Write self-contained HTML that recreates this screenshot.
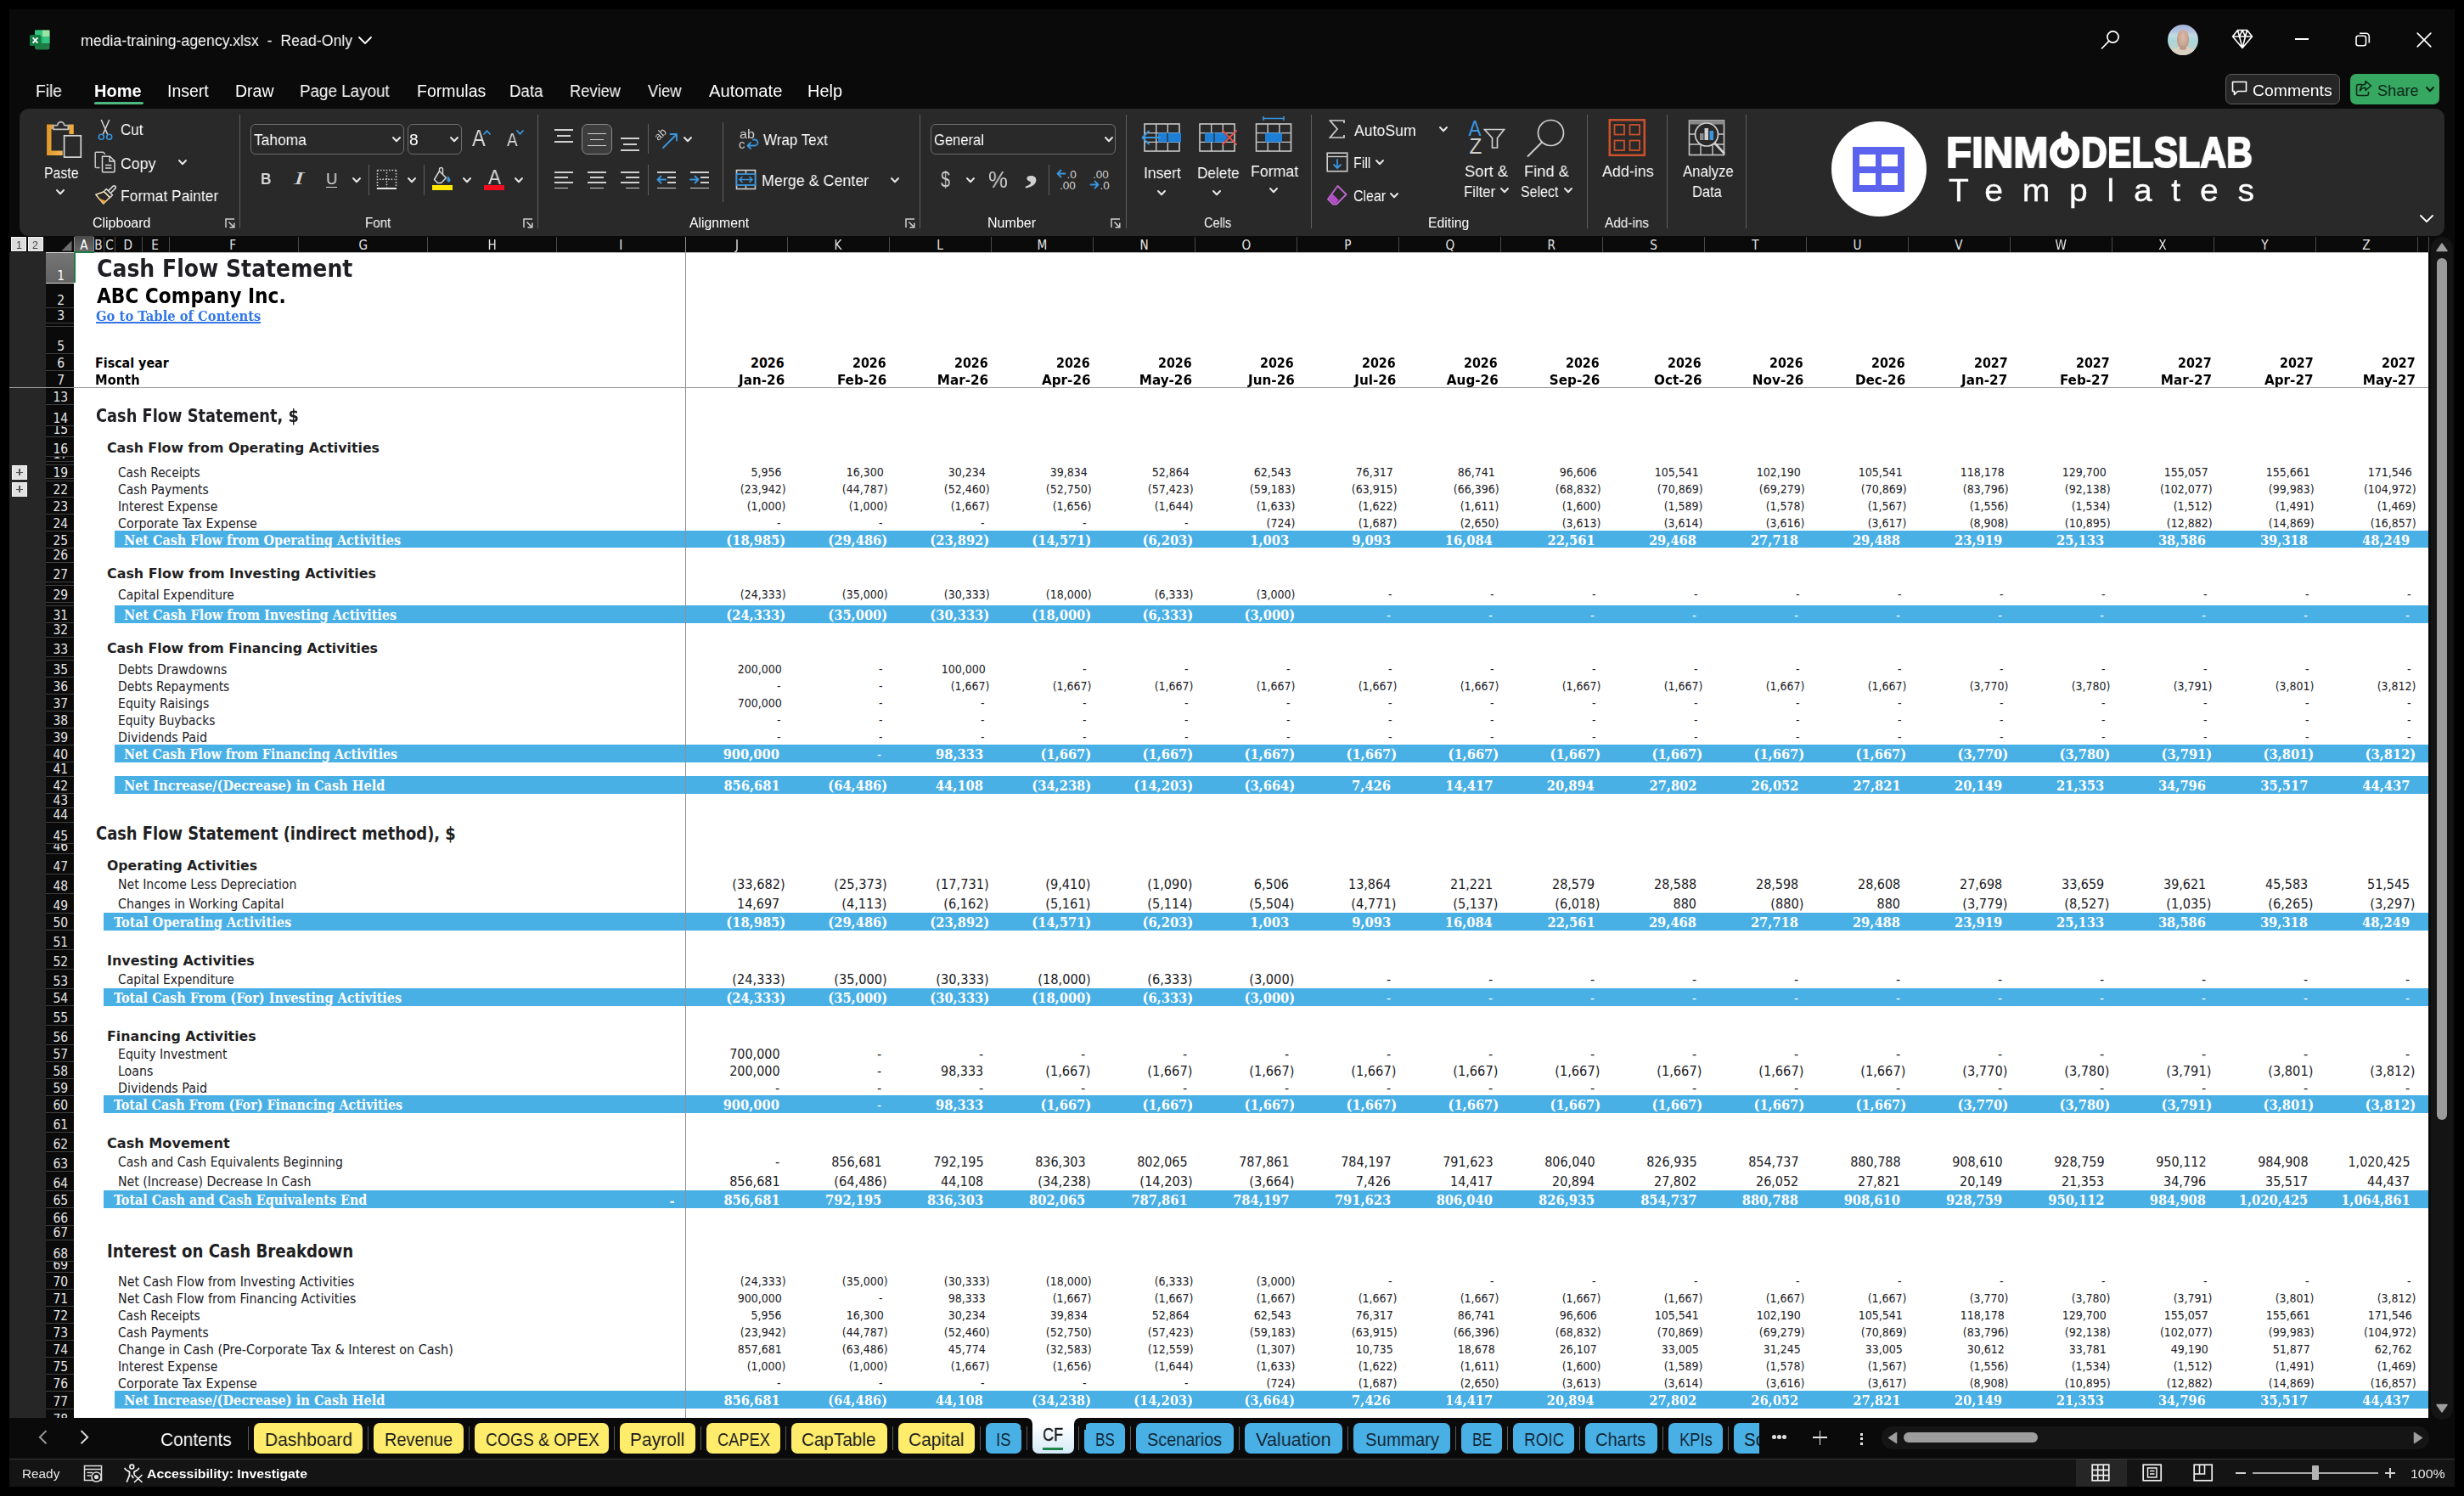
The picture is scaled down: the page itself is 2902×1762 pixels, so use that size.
<!DOCTYPE html>
<html lang="en"><head><meta charset="utf-8"><title>media-training-agency.xlsx - Excel</title>
<style>
html,body{margin:0;padding:0;background:#000}
body{width:2902px;height:1762px;position:relative;overflow:hidden;font-family:"Liberation Sans",sans-serif}
div,svg,.t{position:absolute}
svg{overflow:visible}
.t{white-space:pre}
.rh{left:54px;width:33px;box-sizing:border-box;overflow:hidden}
.rn{position:absolute;left:1.6px;right:0;bottom:-2px;text-align:center;font:16.3px/20px 'DejaVu Sans Condensed','Liberation Sans',sans-serif;transform:scaleX(.95)}
</style></head>
<body>
<div id="window" style="left:11px;top:11px;width:2880px;height:1740px;background:#0a0a0a"></div>
<svg style="left:35px;top:35px" width="24" height="24" viewBox="0 0 24 24"><rect x="6" y="0.5" width="17.5" height="23" rx="2.5" fill="#1f7a43"/>
<rect x="6" y="0.5" width="9" height="8" fill="#33c481"/><rect x="15" y="0.5" width="8.5" height="8" fill="#9be3a4"/>
<rect x="6" y="8.5" width="9" height="7.5" fill="#21a366"/><rect x="15" y="8.5" width="8.5" height="7.5" fill="#33c481"/>
<rect x="0" y="6" width="13" height="13" rx="1.5" fill="#107c41"/>
<path d="M3.6 9.3L9.4 15.7M9.4 9.3L3.6 15.7" stroke="#fff" stroke-width="1.9"/></svg>
<span class="t" style="top:48px;font:400 19.2px/0 'Liberation Sans','DejaVu Sans',sans-serif;color:#ffffff;left:94.92px;transform:scaleX(0.9249);transform-origin:0 0;will-change:transform;">media-training-agency.xlsx  -  Read-Only</span>
<svg style="left:421.00px;top:42.00px" width="18" height="11" viewBox="-2 -2 18 11"><path d="M0 0L7.0 7L14 0" fill="none" stroke="#fff" stroke-width="1.8" stroke-linecap="round" stroke-linejoin="round"/></svg>
<svg style="left:2474px;top:35px" width="24" height="24" viewBox="0 0 24 24"><circle cx="14.5" cy="8.5" r="6.6" fill="none" stroke="#fff" stroke-width="1.7"/><path d="M9.8 13.4L1.5 22" stroke="#fff" stroke-width="1.7" stroke-linecap="round"/></svg>
<div style="left:2552.5px;top:28.7px;width:36.6px;height:36.6px;border-radius:50%;overflow:hidden;background:linear-gradient(#a3b1d8 0%,#b4c3e0 22%,#c3dde2 34%,#a9d6d8 52%,#b5d4d2 70%,#cfcabb 100%)"><div style="left:11px;top:6.5px;width:14.6px;height:22px;border-radius:50% 50% 46% 46%;background:radial-gradient(ellipse at 50% 38%,#dcbba8 0%,#c9a591 55%,#a98672 100%)"></div><div style="left:4.5px;top:26.5px;width:28px;height:14px;border-radius:50% 50% 0 0;background:#d9d2c4"></div><div style="left:14.5px;top:25.5px;width:7.5px;height:5px;border-radius:0 0 50% 50%;background:#c09a86"></div></div>
<svg style="left:2628px;top:34px" width="26" height="24" viewBox="0 0 26 24"><path d="M7.5 1.5H18.5L24.5 9L13 22.5L1.5 9Z M1.5 9H24.5 M7.5 1.5L9.5 9L13 22.5L16.5 9L18.5 1.5 M9.5 9L13 1.5L16.5 9" fill="none" stroke="#fff" stroke-width="1.6" stroke-linejoin="round"/></svg>
<div style="left:2703px;top:45.2px;width:16px;height:1.7px;background:#fff;"></div>
<svg style="left:2774px;top:38px" width="18" height="18" viewBox="0 0 18 18"><rect x="1" y="4.3" width="11.5" height="11.5" rx="2.5" fill="none" stroke="#fff" stroke-width="1.6"/><path d="M5 1.2H12.5A3.8 3.8 0 0 1 16.3 5V12.5" fill="none" stroke="#fff" stroke-width="1.6"/></svg>
<svg style="left:2846px;top:38px" width="18" height="18" viewBox="0 0 18 18"><path d="M1.2 1.2L16.8 16.8M16.8 1.2L1.2 16.8" stroke="#fff" stroke-width="1.7" stroke-linecap="round"/></svg>
<span class="t" style="top:107px;font:400 19.5px/0 'Liberation Sans','DejaVu Sans',sans-serif;color:#ffffff;left:41.53px;transform:scaleX(0.9843);transform-origin:0 0;will-change:transform;">File</span>
<span class="t" style="top:107px;font:700 19.5px/0 'Liberation Sans','DejaVu Sans',sans-serif;color:#ffffff;left:111.26px;transform:scaleX(1.0248);transform-origin:0 0;will-change:transform;">Home</span>
<span class="t" style="top:107px;font:400 19.5px/0 'Liberation Sans','DejaVu Sans',sans-serif;color:#ffffff;left:197.31px;transform:scaleX(0.9930);transform-origin:0 0;will-change:transform;">Insert</span>
<span class="t" style="top:107px;font:400 19.5px/0 'Liberation Sans','DejaVu Sans',sans-serif;color:#ffffff;left:277.02px;transform:scaleX(0.9897);transform-origin:0 0;will-change:transform;">Draw</span>
<span class="t" style="top:107px;font:400 19.5px/0 'Liberation Sans','DejaVu Sans',sans-serif;color:#ffffff;left:353.06px;transform:scaleX(0.9651);transform-origin:0 0;will-change:transform;">Page Layout</span>
<span class="t" style="top:107px;font:400 19.5px/0 'Liberation Sans','DejaVu Sans',sans-serif;color:#ffffff;left:491.01px;transform:scaleX(0.9942);transform-origin:0 0;will-change:transform;">Formulas</span>
<span class="t" style="top:107px;font:400 19.5px/0 'Liberation Sans','DejaVu Sans',sans-serif;color:#ffffff;left:600.06px;transform:scaleX(0.9598);transform-origin:0 0;will-change:transform;">Data</span>
<span class="t" style="top:107px;font:400 19.5px/0 'Liberation Sans','DejaVu Sans',sans-serif;color:#ffffff;left:670.60px;transform:scaleX(0.9377);transform-origin:0 0;will-change:transform;">Review</span>
<span class="t" style="top:107px;font:400 19.5px/0 'Liberation Sans','DejaVu Sans',sans-serif;color:#ffffff;left:763.02px;transform:scaleX(0.9433);transform-origin:0 0;will-change:transform;">View</span>
<span class="t" style="top:107px;font:400 19.5px/0 'Liberation Sans','DejaVu Sans',sans-serif;color:#ffffff;left:835.06px;transform:scaleX(1.0356);transform-origin:0 0;will-change:transform;">Automate</span>
<span class="t" style="top:107px;font:400 19.5px/0 'Liberation Sans','DejaVu Sans',sans-serif;color:#ffffff;left:950.97px;transform:scaleX(1.0216);transform-origin:0 0;will-change:transform;">Help</span>
<div style="left:111px;top:120px;width:58px;height:3px;background:#4fb780;border-radius:1.5px"></div>
<div style="left:2621px;top:87px;width:135px;height:36px;background:#262626;border:1.5px solid #5c5c5c;border-radius:7px;box-sizing:border-box"></div>
<svg style="left:2628px;top:95px" width="19" height="19" viewBox="0 0 19 19"><path d="M1.5 1.5H17.5V12.5H7.5L3.5 16.5V12.5H1.5Z" fill="none" stroke="#fff" stroke-width="1.6" stroke-linejoin="round"/></svg>
<span class="t" style="top:107px;font:400 19.2px/0 'Liberation Sans','DejaVu Sans',sans-serif;color:#ffffff;left:2652.62px;transform:scaleX(1.0100);transform-origin:0 0;will-change:transform;">Comments</span>
<div style="left:2768px;top:87px;width:105px;height:36px;background:#36a862;border-radius:7px"></div>
<svg style="left:2774px;top:94px" width="20" height="20" viewBox="0 0 20 20"><path d="M8 5.5H3.5A2 2 0 0 0 1.5 7.5V16.5A2 2 0 0 0 3.5 18.5H13.5A2 2 0 0 0 15.5 16.5V14" fill="none" stroke="#0d2a17" stroke-width="1.6"/><path d="M12 1.5L18.5 7L12 12.5V9.2C9 9.2 7 10.3 5.5 13C5.8 8.5 8 5.4 12 5V1.5Z" fill="none" stroke="#0d2a17" stroke-width="1.6" stroke-linejoin="round"/></svg>
<span class="t" style="top:107px;font:400 19.2px/0 'Liberation Sans','DejaVu Sans',sans-serif;color:#0b1f12;left:2799.77px;transform:scaleX(0.9500);transform-origin:0 0;will-change:transform;">Share</span>
<svg style="left:2856.00px;top:101.35px" width="12.0" height="8.3" viewBox="-2 -2 12.0 8.3"><path d="M0 0L4.0 4.3L8.0 0" fill="none" stroke="#0b1f12" stroke-width="2.0" stroke-linecap="round" stroke-linejoin="round"/></svg>
<div id="ribbon" style="left:23px;top:128px;width:2856px;height:149.5px;background:#292929;border-radius:11px"></div>
<div style="left:282px;top:135px;width:1px;height:134px;background:#5e5e5e;"></div>
<div style="left:633px;top:135px;width:1px;height:134px;background:#5e5e5e;"></div>
<div style="left:1083px;top:135px;width:1px;height:134px;background:#5e5e5e;"></div>
<div style="left:1326px;top:135px;width:1px;height:134px;background:#5e5e5e;"></div>
<div style="left:1544px;top:135px;width:1px;height:134px;background:#5e5e5e;"></div>
<div style="left:1869px;top:135px;width:1px;height:134px;background:#5e5e5e;"></div>
<div style="left:1963px;top:135px;width:1px;height:134px;background:#5e5e5e;"></div>
<div style="left:2056px;top:135px;width:1px;height:134px;background:#5e5e5e;"></div>
<div style="left:434px;top:194px;width:1px;height:36px;background:#5e5e5e;"></div>
<div style="left:499px;top:194px;width:1px;height:36px;background:#5e5e5e;"></div>
<div style="left:763px;top:146px;width:1px;height:35px;background:#5e5e5e;"></div>
<div style="left:763px;top:194px;width:1px;height:36px;background:#5e5e5e;"></div>
<div style="left:851px;top:144px;width:1px;height:94px;background:#5e5e5e;"></div>
<div style="left:1235px;top:194px;width:1px;height:36px;background:#5e5e5e;"></div>
<span class="t" style="top:263px;font:400 15.6px/0 'Liberation Sans','DejaVu Sans',sans-serif;color:#ffffff;left:109.29px;transform:scaleX(1.0239);transform-origin:0 0;will-change:transform;">Clipboard</span>
<span class="t" style="top:263px;font:400 15.6px/0 'Liberation Sans','DejaVu Sans',sans-serif;color:#ffffff;left:430.36px;transform:scaleX(0.9729);transform-origin:0 0;will-change:transform;">Font</span>
<span class="t" style="top:263px;font:400 15.6px/0 'Liberation Sans','DejaVu Sans',sans-serif;color:#ffffff;left:811.57px;transform:scaleX(1.0116);transform-origin:0 0;will-change:transform;">Alignment</span>
<span class="t" style="top:263px;font:400 15.6px/0 'Liberation Sans','DejaVu Sans',sans-serif;color:#ffffff;left:1163.28px;transform:scaleX(1.0293);transform-origin:0 0;will-change:transform;">Number</span>
<span class="t" style="top:263px;font:400 15.6px/0 'Liberation Sans','DejaVu Sans',sans-serif;color:#ffffff;left:1418.36px;transform:scaleX(0.9308);transform-origin:0 0;will-change:transform;">Cells</span>
<span class="t" style="top:263px;font:400 15.6px/0 'Liberation Sans','DejaVu Sans',sans-serif;color:#ffffff;left:1682.30px;transform:scaleX(1.0133);transform-origin:0 0;will-change:transform;">Editing</span>
<span class="t" style="top:263px;font:400 15.6px/0 'Liberation Sans','DejaVu Sans',sans-serif;color:#ffffff;left:1889.57px;transform:scaleX(0.9851);transform-origin:0 0;will-change:transform;">Add-ins</span>
<svg style="left:265px;top:257px" width="12" height="12" viewBox="0 0 12 12"><path d="M1 11V1H11" fill="none" stroke="#d0d0d0" stroke-width="1.5"/><path d="M4.5 4.5L10.5 10.5M10.8 5.5V10.8H5.5" fill="none" stroke="#d0d0d0" stroke-width="1.5"/></svg>
<svg style="left:616px;top:257px" width="12" height="12" viewBox="0 0 12 12"><path d="M1 11V1H11" fill="none" stroke="#d0d0d0" stroke-width="1.5"/><path d="M4.5 4.5L10.5 10.5M10.8 5.5V10.8H5.5" fill="none" stroke="#d0d0d0" stroke-width="1.5"/></svg>
<svg style="left:1066px;top:257px" width="12" height="12" viewBox="0 0 12 12"><path d="M1 11V1H11" fill="none" stroke="#d0d0d0" stroke-width="1.5"/><path d="M4.5 4.5L10.5 10.5M10.8 5.5V10.8H5.5" fill="none" stroke="#d0d0d0" stroke-width="1.5"/></svg>
<svg style="left:1308px;top:257px" width="12" height="12" viewBox="0 0 12 12"><path d="M1 11V1H11" fill="none" stroke="#d0d0d0" stroke-width="1.5"/><path d="M4.5 4.5L10.5 10.5M10.8 5.5V10.8H5.5" fill="none" stroke="#d0d0d0" stroke-width="1.5"/></svg>
<svg style="left:2848.50px;top:252.00px" width="18" height="11" viewBox="-2 -2 18 11"><path d="M0 0L7.0 7L14 0" fill="none" stroke="#fff" stroke-width="1.8" stroke-linecap="round" stroke-linejoin="round"/></svg>
<svg style="left:53px;top:139px" width="45" height="48" viewBox="0 0 45 48"><defs><linearGradient id="pg" x1="0" y1="0" x2="1" y2="0"><stop offset="0" stop-color="#e39a2c"/><stop offset="1" stop-color="#f3b95a"/></linearGradient></defs>
<path d="M9.300 10.200H4.800V41.300H20.700" fill="none" stroke="url(#pg)" stroke-width="5.4"/>
<path d="M27.800 10.200H31.100V19" fill="none" stroke="#eda93f" stroke-width="5.4"/>
<path d="M9.800 13.300V8.600H14.600A4.300 5.600 0 0 1 22.800 8.600H27.300V13.300Z" fill="#292929" stroke="#bdbdbd" stroke-width="1.700" stroke-linejoin="round"/>
<rect x="22.600" y="20.800" width="19.700" height="25.300" fill="#292929" stroke="#d4d4d4" stroke-width="1.700"/></svg>
<span class="t" style="top:204px;font:400 19.2px/0 'Liberation Sans','DejaVu Sans',sans-serif;color:#ffffff;left:51.80px;transform:scaleX(0.8255);transform-origin:0 0;will-change:transform;">Paste</span>
<svg style="left:65.30px;top:222.35px" width="12.0" height="8.3" viewBox="-2 -2 12.0 8.3"><path d="M0 0L4.0 4.3L8.0 0" fill="none" stroke="#e6e6e6" stroke-width="2.0" stroke-linecap="round" stroke-linejoin="round"/></svg>
<svg style="left:114px;top:140px" width="20" height="26" viewBox="0 0 20 26"><path d="M5.2 1L12.8 18.5M14.800 1L7.2 18.5" stroke="#d8d8d8" stroke-width="1.5" fill="none"/>
<circle cx="5.3" cy="21.3" r="3" fill="none" stroke="#3a96dd" stroke-width="1.6"/><circle cx="14.7" cy="21.3" r="3" fill="none" stroke="#3a96dd" stroke-width="1.6"/></svg>
<span class="t" style="top:153px;font:400 19.2px/0 'Liberation Sans','DejaVu Sans',sans-serif;color:#ffffff;left:142.24px;transform:scaleX(0.8872);transform-origin:0 0;will-change:transform;">Cut</span>
<svg style="left:111px;top:178px" width="26" height="26" viewBox="0 0 26 26"><path d="M6.5 19.5H2.2A1 1 0 0 1 1.2 18.5V2.2A1 1 0 0 1 2.2 1.2H10.5L13 3.700" fill="none" stroke="#c8c8c8" stroke-width="1.5"/>
<path d="M9.5 6.2H18.5L24 11.700V23.800A1 1 0 0 1 23 24.800H10.500A1 1 0 0 1 9.5 23.800Z" fill="none" stroke="#d8d8d8" stroke-width="1.5" stroke-linejoin="round"/>
<path d="M18 6.500V12H23.800" fill="none" stroke="#d8d8d8" stroke-width="1.4"/><path d="M13 16.500H20.500M13 20H20.500" stroke="#d8d8d8" stroke-width="1.4"/></svg>
<span class="t" style="top:193px;font:400 19.2px/0 'Liberation Sans','DejaVu Sans',sans-serif;color:#ffffff;left:142.20px;transform:scaleX(0.9251);transform-origin:0 0;will-change:transform;">Copy</span>
<svg style="left:209.30px;top:187.35px" width="12.0" height="8.3" viewBox="-2 -2 12.0 8.3"><path d="M0 0L4.0 4.3L8.0 0" fill="none" stroke="#e6e6e6" stroke-width="2.0" stroke-linecap="round" stroke-linejoin="round"/></svg>
<svg style="left:111px;top:217px" width="27" height="25" viewBox="0 0 27 25"><path d="M16.800 7.600L22 2.400A1.900 1.900 0 0 1 24.700 5.100L19.500 10.300" fill="none" stroke="#d8d8d8" stroke-width="1.600"/>
<path d="M14.300 5.600L21.500 12.800L18.600 15.700L11.400 8.500Z" fill="#292929" stroke="#d8d8d8" stroke-width="1.500" stroke-linejoin="round"/>
<path d="M11.600 8.700L18.400 15.500L10.800 23L1.800 12.200Z" fill="none" stroke="#f3ddb0" stroke-width="1.500" stroke-linejoin="round"/>
<path d="M5.400 16.500L14 19.800L10.800 23Z" fill="#eaa63c"/></svg>
<span class="t" style="top:231px;font:400 19.2px/0 'Liberation Sans','DejaVu Sans',sans-serif;color:#ffffff;left:142.17px;transform:scaleX(0.9080);transform-origin:0 0;will-change:transform;">Format Painter</span>
<div style="left:295px;top:146px;width:180.5px;height:36px;border:1.3px solid #6e6e6e;border-radius:6px;box-sizing:border-box"></div>
<span class="t" style="top:165px;font:400 19.2px/0 'Liberation Sans','DejaVu Sans',sans-serif;color:#ffffff;left:299.21px;transform:scaleX(0.9067);transform-origin:0 0;will-change:transform;">Tahoma</span>
<svg style="left:461.00px;top:160.35px" width="12.0" height="8.3" viewBox="-2 -2 12.0 8.3"><path d="M0 0L4.0 4.3L8.0 0" fill="none" stroke="#e6e6e6" stroke-width="2.0" stroke-linecap="round" stroke-linejoin="round"/></svg>
<div style="left:479.5px;top:146px;width:64.5px;height:36px;border:1.3px solid #6e6e6e;border-radius:6px;box-sizing:border-box"></div>
<span class="t" style="top:165px;font:400 19.2px/0 'Liberation Sans','DejaVu Sans',sans-serif;color:#ffffff;left:481.67px;will-change:transform;">8</span>
<svg style="left:529.00px;top:160.35px" width="12.0" height="8.3" viewBox="-2 -2 12.0 8.3"><path d="M0 0L4.0 4.3L8.0 0" fill="none" stroke="#e6e6e6" stroke-width="2.0" stroke-linecap="round" stroke-linejoin="round"/></svg>
<span class="t" style="top:163px;font:400 27px/0 'Liberation Sans','DejaVu Sans',sans-serif;color:#d8d8d8;left:555.55px;transform:scaleX(0.8658);transform-origin:0 0;will-change:transform;">A</span>
<svg style="left:568.7px;top:152.6px" width="9" height="6" viewBox="0 0 9 6"><path d="M1 5L4.500 1.2L8 5" fill="none" stroke="#3a96dd" stroke-width="1.7" stroke-linecap="round" stroke-linejoin="round"/></svg>
<span class="t" style="top:165px;font:400 22px/0 'Liberation Sans','DejaVu Sans',sans-serif;color:#d8d8d8;left:596.56px;transform:scaleX(0.8569);transform-origin:0 0;will-change:transform;">A</span>
<svg style="left:607.9px;top:153px" width="9" height="6" viewBox="0 0 9 6"><path d="M1 1L4.500 4.800L8 1" fill="none" stroke="#3a96dd" stroke-width="1.7" stroke-linecap="round" stroke-linejoin="round"/></svg>
<span class="t" style="top:211px;font:700 19.2px/0 'Liberation Sans','DejaVu Sans',sans-serif;color:#d8d8d8;left:307.45px;transform:scaleX(0.8974);transform-origin:0 0;will-change:transform;">B</span>
<span class="t" style="top:210px;font:italic 400 20.6px/0 'Liberation Serif','DejaVu Serif',serif;color:#d8d8d8;left:346.19px;transform:scaleX(1.7627);transform-origin:0 0;">I</span>
<span class="t" style="top:211px;font:400 19.2px/0 'Liberation Sans','DejaVu Sans',sans-serif;color:#d8d8d8;left:383.67px;transform:scaleX(0.9638);transform-origin:0 0;will-change:transform;">U</span>
<div style="left:383.5px;top:219.5px;width:13px;height:1.6px;background:#d8d8d8;"></div>
<svg style="left:413.50px;top:208.35px" width="12.0" height="8.3" viewBox="-2 -2 12.0 8.3"><path d="M0 0L4.0 4.3L8.0 0" fill="none" stroke="#e6e6e6" stroke-width="2.0" stroke-linecap="round" stroke-linejoin="round"/></svg>
<svg style="left:443px;top:199px" width="25" height="25" viewBox="0 0 25 25"><path d="M1.500 1.500H23.500M1.500 1.500V23.500M23.500 1.500V21.500" stroke="#d0d0d0" stroke-width="1.500" stroke-dasharray="1.6 1.800" fill="none"/>
<path d="M12.500 4V21.500M4 12.300H21.500" stroke="#d0d0d0" stroke-width="1.400" stroke-dasharray="1.6 1.800" fill="none"/><path d="M1 23H24" stroke="#e8e8e8" stroke-width="2"/></svg>
<svg style="left:478.50px;top:208.35px" width="12.0" height="8.3" viewBox="-2 -2 12.0 8.3"><path d="M0 0L4.0 4.3L8.0 0" fill="none" stroke="#e6e6e6" stroke-width="2.0" stroke-linecap="round" stroke-linejoin="round"/></svg>
<svg style="left:508px;top:198px" width="26" height="21" viewBox="0 0 26 21"><path d="M9.5 3.500L17.500 11.500L11.500 17.500H7.500L3.5 13.500Z" fill="none" stroke="#d8d8d8" stroke-width="1.500" stroke-linejoin="round"/><path d="M9.5 3.500V1.500A2 2 0 0 1 13.500 1.500V7.500" fill="none" stroke="#d8d8d8" stroke-width="1.4"/>
<path d="M19.500 9C21.500 11.500 22.500 13 22.500 14.500A2 2 0 0 1 18.500 14.500C18.500 13 18.800 11.500 19.500 9Z" fill="#3a96dd"/></svg>
<div style="left:509px;top:218px;width:24px;height:6px;background:#ffe600;"></div>
<svg style="left:543.50px;top:208.35px" width="12.0" height="8.3" viewBox="-2 -2 12.0 8.3"><path d="M0 0L4.0 4.3L8.0 0" fill="none" stroke="#e6e6e6" stroke-width="2.0" stroke-linecap="round" stroke-linejoin="round"/></svg>
<span class="t" style="top:209px;font:400 23.5px/0 'Liberation Sans','DejaVu Sans',sans-serif;color:#d8d8d8;left:574.76px;transform:scaleX(0.9626);transform-origin:0 0;will-change:transform;">A</span>
<div style="left:570px;top:218px;width:24px;height:6px;background:#f00e1e;"></div>
<svg style="left:604.50px;top:208.35px" width="12.0" height="8.3" viewBox="-2 -2 12.0 8.3"><path d="M0 0L4.0 4.3L8.0 0" fill="none" stroke="#e6e6e6" stroke-width="2.0" stroke-linecap="round" stroke-linejoin="round"/></svg>
<div style="left:653.0px;top:152px;width:22px;height:1.6px;background:#d0d0d0;"></div>
<div style="left:656.0px;top:159px;width:16px;height:1.6px;background:#d0d0d0;"></div>
<div style="left:653.0px;top:166px;width:22px;height:1.6px;background:#d0d0d0;"></div>
<div style="left:685px;top:146px;width:36px;height:36px;background:#3d3d3d;border:1.3px solid #8a8a8a;border-radius:7px;box-sizing:border-box"></div>
<div style="left:692.0px;top:156.5px;width:22px;height:1.6px;background:#d0d0d0;"></div>
<div style="left:695.0px;top:163.5px;width:16px;height:1.6px;background:#d0d0d0;"></div>
<div style="left:692.0px;top:170.5px;width:22px;height:1.6px;background:#d0d0d0;"></div>
<div style="left:731.0px;top:162px;width:22px;height:1.6px;background:#d0d0d0;"></div>
<div style="left:734.0px;top:169px;width:16px;height:1.6px;background:#d0d0d0;"></div>
<div style="left:731.0px;top:176px;width:22px;height:1.6px;background:#d0d0d0;"></div>
<svg style="left:771px;top:150px" width="28" height="26" viewBox="0 0 28 26"><text x="1" y="12" font-family="Liberation Sans,sans-serif" font-size="13" fill="#d0d0d0" transform="rotate(-42 8 10)">ab</text>
<path d="M10 24L25.500 8.500M18.500 8H26V15.500" fill="none" stroke="#3a96dd" stroke-width="1.8" stroke-linecap="round" stroke-linejoin="round"/></svg>
<svg style="left:804.30px;top:160.35px" width="12.0" height="8.3" viewBox="-2 -2 12.0 8.3"><path d="M0 0L4.0 4.3L8.0 0" fill="none" stroke="#e6e6e6" stroke-width="2.0" stroke-linecap="round" stroke-linejoin="round"/></svg>
<div style="left:653px;top:202.0px;width:22px;height:1.6px;background:#d0d0d0;"></div>
<div style="left:653px;top:208.2px;width:16px;height:1.6px;background:#d0d0d0;"></div>
<div style="left:653px;top:214.4px;width:22px;height:1.6px;background:#d0d0d0;"></div>
<div style="left:653px;top:220.6px;width:16px;height:1.6px;background:#d0d0d0;"></div>
<div style="left:692.0px;top:202.0px;width:22px;height:1.6px;background:#d0d0d0;"></div>
<div style="left:695.0px;top:208.2px;width:16px;height:1.6px;background:#d0d0d0;"></div>
<div style="left:692.0px;top:214.4px;width:22px;height:1.6px;background:#d0d0d0;"></div>
<div style="left:695.0px;top:220.6px;width:16px;height:1.6px;background:#d0d0d0;"></div>
<div style="left:731px;top:202.0px;width:22px;height:1.6px;background:#d0d0d0;"></div>
<div style="left:737px;top:208.2px;width:16px;height:1.6px;background:#d0d0d0;"></div>
<div style="left:731px;top:214.4px;width:22px;height:1.6px;background:#d0d0d0;"></div>
<div style="left:737px;top:220.6px;width:16px;height:1.6px;background:#d0d0d0;"></div>
<div style="left:774px;top:202px;width:22px;height:1.6px;background:#d0d0d0;"></div>
<div style="left:774px;top:220.6px;width:22px;height:1.6px;background:#d0d0d0;"></div>
<div style="left:786px;top:208.2px;width:10px;height:1.6px;background:#d0d0d0;"></div>
<div style="left:786px;top:214.4px;width:10px;height:1.6px;background:#d0d0d0;"></div>
<svg style="left:773px;top:206px" width="12" height="11" viewBox="0 0 12 11"><path d="M11 5.500H1.800M5.500 1.500L1.500 5.500L5.500 9.500" fill="none" stroke="#3a96dd" stroke-width="1.800" stroke-linecap="round" stroke-linejoin="round"/></svg>
<div style="left:812.5px;top:202px;width:22px;height:1.6px;background:#d0d0d0;"></div>
<div style="left:812.5px;top:220.6px;width:22px;height:1.6px;background:#d0d0d0;"></div>
<div style="left:824.5px;top:208.2px;width:10px;height:1.6px;background:#d0d0d0;"></div>
<div style="left:824.5px;top:214.4px;width:10px;height:1.6px;background:#d0d0d0;"></div>
<svg style="left:811.5px;top:206px" width="12" height="11" viewBox="0 0 12 11"><path d="M1 5.500H10.200M6.500 1.500L10.500 5.500L6.500 9.500" fill="none" stroke="#3a96dd" stroke-width="1.800" stroke-linecap="round" stroke-linejoin="round"/></svg>
<span class="t" style="top:158px;font:400 15px/0 'Liberation Sans','DejaVu Sans',sans-serif;color:#d0d0d0;left:870.92px;transform:scaleX(1.0702);transform-origin:0 0;will-change:transform;">ab</span>
<span class="t" style="top:170px;font:400 15px/0 'Liberation Sans','DejaVu Sans',sans-serif;color:#d0d0d0;left:869.86px;will-change:transform;">c</span>
<svg style="left:878px;top:163px" width="15" height="14" viewBox="0 0 15 14"><path d="M9 1.500H11A3 3 0 0 1 11 8.500H3M6 5L2.500 8.500L6 12" fill="none" stroke="#3a96dd" stroke-width="1.800" stroke-linecap="round" stroke-linejoin="round"/></svg>
<span class="t" style="top:165px;font:400 19.2px/0 'Liberation Sans','DejaVu Sans',sans-serif;color:#ffffff;left:898.53px;transform:scaleX(0.8859);transform-origin:0 0;will-change:transform;">Wrap Text</span>
<svg style="left:866px;top:199px" width="25" height="25" viewBox="0 0 25 25"><rect x="1.5" y="1.500" width="22" height="22" fill="none" stroke="#d0d0d0" stroke-width="1.600"/><path d="M12.500 1.500V6M12.500 19V23.500" stroke="#d0d0d0" stroke-width="1.500"/>
<rect x="1.5" y="6" width="22" height="13" fill="#292929" stroke="#3a96dd" stroke-width="1.800"/><path d="M5 12.500H20M8 9.500L5 12.500L8 15.500M17 9.500L20 12.500L17 15.500" fill="none" stroke="#3a96dd" stroke-width="1.700" stroke-linecap="round" stroke-linejoin="round"/></svg>
<span class="t" style="top:213px;font:400 19.2px/0 'Liberation Sans','DejaVu Sans',sans-serif;color:#ffffff;left:897.13px;transform:scaleX(0.9323);transform-origin:0 0;will-change:transform;">Merge &amp; Center</span>
<svg style="left:1048.30px;top:208.35px" width="12.0" height="8.3" viewBox="-2 -2 12.0 8.3"><path d="M0 0L4.0 4.3L8.0 0" fill="none" stroke="#e6e6e6" stroke-width="2.0" stroke-linecap="round" stroke-linejoin="round"/></svg>
<div style="left:1096px;top:146px;width:218px;height:36px;border:1.3px solid #6e6e6e;border-radius:6px;box-sizing:border-box"></div>
<span class="t" style="top:165px;font:400 19.2px/0 'Liberation Sans','DejaVu Sans',sans-serif;color:#ffffff;left:1099.77px;transform:scaleX(0.8635);transform-origin:0 0;will-change:transform;">General</span>
<svg style="left:1299.50px;top:160.35px" width="12.0" height="8.3" viewBox="-2 -2 12.0 8.3"><path d="M0 0L4.0 4.3L8.0 0" fill="none" stroke="#e6e6e6" stroke-width="2.0" stroke-linecap="round" stroke-linejoin="round"/></svg>
<span class="t" style="top:211px;font:400 25px/0 'Liberation Sans','DejaVu Sans',sans-serif;color:#d0d0d0;left:1108.39px;transform:scaleX(0.7935);transform-origin:0 0;will-change:transform;">$</span>
<svg style="left:1136.50px;top:208.35px" width="12.0" height="8.3" viewBox="-2 -2 12.0 8.3"><path d="M0 0L4.0 4.3L8.0 0" fill="none" stroke="#e6e6e6" stroke-width="2.0" stroke-linecap="round" stroke-linejoin="round"/></svg>
<span class="t" style="top:212px;font:400 27px/0 'Liberation Sans','DejaVu Sans',sans-serif;color:#d0d0d0;left:1164.18px;transform:scaleX(0.9510);transform-origin:0 0;will-change:transform;">%</span>
<span class="t" style="top:198px;font:700 48px/0 'Liberation Serif','DejaVu Serif',serif;color:#d0d0d0;left:1207.17px;transform:scaleX(1.3104);transform-origin:0 0;">,</span>
<svg style="left:1244px;top:198px" width="26" height="27" viewBox="0 0 26 27"><path d="M10.500 6.500H1.800M5.500 2.500L1.500 6.500L5.500 10.500" fill="none" stroke="#3a96dd" stroke-width="1.800" stroke-linecap="round" stroke-linejoin="round"/>
<text x="12.500" y="12" font-family="Liberation Sans,sans-serif" font-size="13.5" fill="#d0d0d0">.0</text><text x="4" y="25" font-family="Liberation Sans,sans-serif" font-size="13.5" fill="#d0d0d0">.00</text></svg>
<svg style="left:1283px;top:198px" width="26" height="27" viewBox="0 0 26 27"><text x="4" y="12" font-family="Liberation Sans,sans-serif" font-size="13.5" fill="#d0d0d0">.00</text>
<path d="M1.500 19.500H10.200M6.500 15.500L10.500 19.500L6.500 23.500" fill="none" stroke="#3a96dd" stroke-width="1.800" stroke-linecap="round" stroke-linejoin="round"/>
<text x="12.500" y="25" font-family="Liberation Sans,sans-serif" font-size="13.5" fill="#d0d0d0">.0</text></svg>
<svg style="left:1343px;top:144px" width="52" height="36" viewBox="0 0 52 36"><rect x="5" y="2" width="41" height="32" fill="none" stroke="#c8c8c8" stroke-width="1.6"/><path d="M18.666666666666664 2V34M32.33333333333333 2V34M5 12.666666666666666H46M5 23.333333333333332H46" stroke="#c8c8c8" stroke-width="1.4" fill="none"/><rect x="21" y="12.500" width="27" height="11" fill="#1e7fd6"/><path d="M32 12.500V23.500" stroke="#292929" stroke-width="1.2"/>
<path d="M23 18H3M10 10.500L2.500 18L10 25.500" fill="none" stroke="#3a96dd" stroke-width="2" stroke-linecap="round" stroke-linejoin="round"/></svg>
<span class="t" style="top:204px;font:400 19.2px/0 'Liberation Sans','DejaVu Sans',sans-serif;color:#ffffff;left:1346.98px;transform:scaleX(0.9116);transform-origin:0 0;will-change:transform;">Insert</span>
<svg style="left:1362.30px;top:222.85px" width="12.0" height="8.3" viewBox="-2 -2 12.0 8.3"><path d="M0 0L4.0 4.3L8.0 0" fill="none" stroke="#e6e6e6" stroke-width="2.0" stroke-linecap="round" stroke-linejoin="round"/></svg>
<svg style="left:1410px;top:144px" width="50" height="36" viewBox="0 0 50 36"><rect x="3" y="2" width="41" height="32" fill="none" stroke="#c8c8c8" stroke-width="1.6"/><path d="M16.666666666666664 2V34M30.333333333333332 2V34M3 12.666666666666666H44M3 23.333333333333332H44" stroke="#c8c8c8" stroke-width="1.4" fill="none"/><rect x="9" y="12.500" width="22" height="11" fill="#1e7fd6"/><path d="M20 12.500V23.500" stroke="#292929" stroke-width="1.2"/><path d="M31 12.500L36 18L31 23.500Z" fill="#1e7fd6"/>
<path d="M30 10L46 26M46 10L30 26" stroke="#e0524a" stroke-width="2" stroke-linecap="round"/></svg>
<span class="t" style="top:204px;font:400 19.2px/0 'Liberation Sans','DejaVu Sans',sans-serif;color:#ffffff;left:1409.69px;transform:scaleX(0.8956);transform-origin:0 0;will-change:transform;">Delete</span>
<svg style="left:1427.30px;top:222.85px" width="12.0" height="8.3" viewBox="-2 -2 12.0 8.3"><path d="M0 0L4.0 4.3L8.0 0" fill="none" stroke="#e6e6e6" stroke-width="2.0" stroke-linecap="round" stroke-linejoin="round"/></svg>
<svg style="left:1477px;top:136px" width="46" height="44" viewBox="0 0 46 44"><rect x="2.5" y="10" width="41" height="32" fill="none" stroke="#c8c8c8" stroke-width="1.6"/><path d="M16.166666666666664 10V42M29.833333333333332 10V42M2.5 20.666666666666664H43.5M2.5 31.333333333333332H43.5" stroke="#c8c8c8" stroke-width="1.4" fill="none"/><rect x="13" y="20.500" width="20" height="11" fill="#1e7fd6"/><path d="M11 3.500H35M11 1V6M35 1V6" stroke="#3a96dd" stroke-width="1.600" fill="none"/></svg>
<span class="t" style="top:202px;font:400 19.2px/0 'Liberation Sans','DejaVu Sans',sans-serif;color:#ffffff;left:1472.65px;transform:scaleX(0.9229);transform-origin:0 0;will-change:transform;">Format</span>
<svg style="left:1493.50px;top:220.35px" width="12.0" height="8.3" viewBox="-2 -2 12.0 8.3"><path d="M0 0L4.0 4.3L8.0 0" fill="none" stroke="#e6e6e6" stroke-width="2.0" stroke-linecap="round" stroke-linejoin="round"/></svg>
<svg style="left:1564px;top:140px" width="21" height="24" viewBox="0 0 21 24"><path d="M19 5V2H2.500L11 12L2.500 22H19V19" fill="none" stroke="#d0d0d0" stroke-width="1.700" stroke-linejoin="miter"/></svg>
<span class="t" style="top:154px;font:400 19.2px/0 'Liberation Sans','DejaVu Sans',sans-serif;color:#ffffff;left:1594.57px;transform:scaleX(0.9211);transform-origin:0 0;will-change:transform;">AutoSum</span>
<svg style="left:1693.50px;top:148.35px" width="12.0" height="8.3" viewBox="-2 -2 12.0 8.3"><path d="M0 0L4.0 4.3L8.0 0" fill="none" stroke="#e6e6e6" stroke-width="2.0" stroke-linecap="round" stroke-linejoin="round"/></svg>
<svg style="left:1562px;top:179px" width="26" height="24" viewBox="0 0 26 24"><rect x="1.2" y="1.200" width="23.500" height="21.500" fill="none" stroke="#d0d0d0" stroke-width="1.600"/><path d="M1.200 5.500H24.700" stroke="#d0d0d0" stroke-width="1.400"/><path d="M13 9V18.500M9 15L13 19L17 15" fill="none" stroke="#3a96dd" stroke-width="1.800" stroke-linecap="round" stroke-linejoin="round"/></svg>
<span class="t" style="top:192px;font:400 19.2px/0 'Liberation Sans','DejaVu Sans',sans-serif;color:#ffffff;left:1593.79px;transform:scaleX(0.8314);transform-origin:0 0;will-change:transform;">Fill</span>
<svg style="left:1618.50px;top:186.85px" width="12.0" height="8.3" viewBox="-2 -2 12.0 8.3"><path d="M0 0L4.0 4.3L8.0 0" fill="none" stroke="#e6e6e6" stroke-width="2.0" stroke-linecap="round" stroke-linejoin="round"/></svg>
<svg style="left:1562px;top:217px" width="26" height="26" viewBox="0 0 26 26"><path d="M13.500 2L23.500 12L12 23.500H8L2 17.500L13.500 2Z" fill="none" stroke="#c06ad0" stroke-width="1.800" stroke-linejoin="round"/><path d="M7.500 11.500L14.500 18.500L11.500 22.500H8.500L3 17Z" fill="#b44ec8"/></svg>
<span class="t" style="top:231px;font:400 19.2px/0 'Liberation Sans','DejaVu Sans',sans-serif;color:#ffffff;left:1593.79px;transform:scaleX(0.8304);transform-origin:0 0;will-change:transform;">Clear</span>
<svg style="left:1636.00px;top:225.85px" width="12.0" height="8.3" viewBox="-2 -2 12.0 8.3"><path d="M0 0L4.0 4.3L8.0 0" fill="none" stroke="#e6e6e6" stroke-width="2.0" stroke-linecap="round" stroke-linejoin="round"/></svg>
<svg style="left:1729px;top:141px" width="45" height="42" viewBox="0 0 45 42"><text x="0" y="0" transform="translate(0.5,19) scale(0.88,1)" font-family="Liberation Sans,sans-serif" font-size="25.5" fill="#3a96dd">A</text><text x="0" y="0" transform="translate(1.5,40.3) scale(0.95,1)" font-family="Liberation Sans,sans-serif" font-size="25.5" fill="#d0d0d0">Z</text>
<path d="M19.500 11.500H42.500L34.500 21.500V33H28.500V21.500Z" fill="none" stroke="#d0d0d0" stroke-width="1.700" stroke-linejoin="miter"/></svg>
<span class="t" style="top:202px;font:400 19.2px/0 'Liberation Sans','DejaVu Sans',sans-serif;color:#ffffff;left:1725.26px;transform:scaleX(0.9588);transform-origin:0 0;will-change:transform;">Sort &amp;</span>
<span class="t" style="top:226px;font:400 19.2px/0 'Liberation Sans','DejaVu Sans',sans-serif;color:#ffffff;left:1724.23px;transform:scaleX(0.8713);transform-origin:0 0;will-change:transform;">Filter</span>
<svg style="left:1766.30px;top:220.35px" width="12.0" height="8.3" viewBox="-2 -2 12.0 8.3"><path d="M0 0L4.0 4.3L8.0 0" fill="none" stroke="#e6e6e6" stroke-width="2.0" stroke-linecap="round" stroke-linejoin="round"/></svg>
<svg style="left:1797px;top:139px" width="47" height="47" viewBox="0 0 47 47"><circle cx="29.500" cy="17.500" r="15" fill="none" stroke="#d0d0d0" stroke-width="1.700"/><path d="M19 28.500L2.500 45" stroke="#d0d0d0" stroke-width="1.800" stroke-linecap="round"/></svg>
<span class="t" style="top:202px;font:400 19.2px/0 'Liberation Sans','DejaVu Sans',sans-serif;color:#ffffff;left:1795.10px;transform:scaleX(0.9519);transform-origin:0 0;will-change:transform;">Find &amp;</span>
<span class="t" style="top:226px;font:400 19.2px/0 'Liberation Sans','DejaVu Sans',sans-serif;color:#ffffff;left:1790.88px;transform:scaleX(0.8315);transform-origin:0 0;will-change:transform;">Select</span>
<svg style="left:1840.50px;top:220.35px" width="12.0" height="8.3" viewBox="-2 -2 12.0 8.3"><path d="M0 0L4.0 4.3L8.0 0" fill="none" stroke="#e6e6e6" stroke-width="2.0" stroke-linecap="round" stroke-linejoin="round"/></svg>
<svg style="left:1894px;top:139px" width="45" height="46" viewBox="0 0 45 46"><rect x="1.800" y="2.300" width="41" height="41.500" fill="none" stroke="#c9512c" stroke-width="2.600"/>
<rect x="7.500" y="8" width="11.500" height="11.500" fill="none" stroke="#c9512c" stroke-width="1.800"/><rect x="25.500" y="8" width="11.500" height="11.500" fill="none" stroke="#c9512c" stroke-width="1.800"/>
<rect x="7.500" y="26.500" width="11.500" height="11.500" fill="none" stroke="#c9512c" stroke-width="1.800"/><rect x="25.500" y="26.500" width="11.500" height="11.500" fill="none" stroke="#c9512c" stroke-width="1.800"/></svg>
<span class="t" style="top:202px;font:400 19.2px/0 'Liberation Sans','DejaVu Sans',sans-serif;color:#ffffff;left:1886.57px;transform:scaleX(0.9327);transform-origin:0 0;will-change:transform;">Add-ins</span>
<svg style="left:1988px;top:140px" width="45" height="45" viewBox="0 0 45 45"><rect x="1.500" y="2" width="41" height="40.500" fill="none" stroke="#c8c8c8" stroke-width="1.600"/><rect x="1.500" y="2" width="41" height="4.500" fill="#8a8a8a"/>
<path d="M1.500 30H42.500M15 30V42.500M29 30V42.500M1.500 18H8M36 18H42.500" stroke="#c8c8c8" stroke-width="1.400" fill="none"/>
<circle cx="22" cy="18.500" r="13.500" fill="#292929" stroke="#d0d0d0" stroke-width="1.700"/>
<rect x="14" y="17" width="4.500" height="8" fill="#8a8a8a"/><rect x="19.500" y="11" width="4.500" height="14" fill="#d0d0d0"/><rect x="25.500" y="14" width="4.500" height="11" fill="#3a96dd"/>
<path d="M31.500 28.500L43 41" stroke="#d0d0d0" stroke-width="2.600"/></svg>
<span class="t" style="top:202px;font:400 19.2px/0 'Liberation Sans','DejaVu Sans',sans-serif;color:#ffffff;left:1981.57px;transform:scaleX(0.8757);transform-origin:0 0;will-change:transform;">Analyze</span>
<span class="t" style="top:226px;font:400 19.2px/0 'Liberation Sans','DejaVu Sans',sans-serif;color:#ffffff;left:1992.75px;transform:scaleX(0.8600);transform-origin:0 0;will-change:transform;">Data</span>
<div style="left:2156.5px;top:142.5px;width:112px;height:112px;border-radius:50%;background:#fff"></div>
<div style="left:2181.7px;top:173px;width:61.3px;height:52.8px;background:#5b63ee;"></div>
<div style="left:2190px;top:181.5px;width:19px;height:14.5px;background:#fff;"></div>
<div style="left:2216px;top:181.5px;width:19px;height:14.5px;background:#fff;"></div>
<div style="left:2190px;top:203.5px;width:19px;height:14.5px;background:#fff;"></div>
<div style="left:2216px;top:203.5px;width:19px;height:14.5px;background:#fff;"></div>
<span class="t" style="top:180px;font:700 49.5px/0 'Liberation Sans','DejaVu Sans',sans-serif;color:#ffffff;left:2292.31px;transform:scaleX(0.9943);transform-origin:0 0;will-change:transform;-webkit-text-stroke:2px #fff;">FINM</span>
<svg style="left:2411px;top:152px" width="42" height="48" viewBox="0 0 42 48"><ellipse cx="20.6" cy="28.2" rx="13.2" ry="13.6" fill="none" stroke="#fff" stroke-width="8.9"/><rect x="16.3" y="2.6" width="8.6" height="27.8" rx="4.3" fill="#fff"/></svg>
<span class="t" style="top:180px;font:700 49.5px/0 'Liberation Sans','DejaVu Sans',sans-serif;color:#ffffff;left:2451.04px;transform:scaleX(0.8638);transform-origin:0 0;will-change:transform;-webkit-text-stroke:2px #fff;">DELSLAB</span>
<span class="t" style="top:225px;font:400 36px/0 'Liberation Sans','DejaVu Sans',sans-serif;color:#ffffff;left:2294.52px;transform:scaleX(1.0838);transform-origin:0 0;will-change:transform;letter-spacing:21px;-webkit-text-stroke:0.3px #fff;">Templates</span>
<div id="sheet" style="left:87px;top:297px;width:2773px;height:1373px;background:#fff"></div>
<div style="left:11px;top:297px;width:43px;height:1373px;background:#262626;"></div>
<div style="left:11px;top:278px;width:2849px;height:19px;background:#0a0a0a;"></div>
<div style="left:54px;top:297px;width:33px;height:1373px;background:#0a0a0a;"></div>
<div style="left:13.4px;top:279px;width:18px;height:17px;background:#dcdcdc;border:1.5px solid #f4f4f4;box-sizing:border-box"></div>
<span class="t" style="top:289px;font:400 12.5px/0 'Liberation Sans','DejaVu Sans',sans-serif;color:#444;left:18.75px;will-change:transform;">1</span>
<div style="left:32.7px;top:279px;width:18px;height:17px;background:#dcdcdc;border:1.5px solid #f4f4f4;box-sizing:border-box"></div>
<span class="t" style="top:289px;font:400 12.5px/0 'Liberation Sans','DejaVu Sans',sans-serif;color:#444;left:38.22px;will-change:transform;">2</span>
<svg style="left:72px;top:283px" width="13" height="13" viewBox="0 0 13 13"><path d="M12.5 0.5V12.5H0.5Z" fill="#6e6e6e"/></svg>
<div style="left:87.5px;top:278px;width:22.5px;height:19px;background:linear-gradient(#4a4a4a,#6a6a6a);"></div>
<div style="left:109.5px;top:279px;width:1px;height:18px;background:#8a8a8a;"></div>
<span class="t" style="top:289px;font:400 16.3px/0 'DejaVu Sans Condensed','Liberation Sans',sans-serif;color:#fff;left:93.74px;transform:scaleX(0.9300);transform-origin:5.01px 0;">A</span>
<div style="left:122.0px;top:279px;width:1px;height:18px;background:#4a4a4a;"></div>
<span class="t" style="top:289px;font:400 16.3px/0 'DejaVu Sans Condensed','Liberation Sans',sans-serif;color:#e4e4e4;left:111.03px;transform:scaleX(0.9300);transform-origin:5.22px 0;">B</span>
<div style="left:134.5px;top:279px;width:1px;height:18px;background:#4a4a4a;"></div>
<span class="t" style="top:289px;font:400 16.3px/0 'DejaVu Sans Condensed','Liberation Sans',sans-serif;color:#e4e4e4;left:123.62px;transform:scaleX(0.9300);transform-origin:5.13px 0;">C</span>
<div style="left:166.5px;top:279px;width:1px;height:18px;background:#4a4a4a;"></div>
<span class="t" style="top:289px;font:400 16.3px/0 'DejaVu Sans Condensed','Liberation Sans',sans-serif;color:#e4e4e4;left:145.07px;transform:scaleX(0.9300);transform-origin:5.93px 0;">D</span>
<div style="left:198.5px;top:279px;width:1px;height:18px;background:#4a4a4a;"></div>
<span class="t" style="top:289px;font:400 16.3px/0 'DejaVu Sans Condensed','Liberation Sans',sans-serif;color:#e4e4e4;left:178.12px;transform:scaleX(0.9300);transform-origin:4.88px 0;">E</span>
<div style="left:350.5px;top:279px;width:1px;height:18px;background:#4a4a4a;"></div>
<span class="t" style="top:289px;font:400 16.3px/0 'DejaVu Sans Condensed','Liberation Sans',sans-serif;color:#e4e4e4;left:270.49px;transform:scaleX(0.9300);transform-origin:4.51px 0;">F</span>
<div style="left:502.5px;top:279px;width:1px;height:18px;background:#4a4a4a;"></div>
<span class="t" style="top:289px;font:400 16.3px/0 'DejaVu Sans Condensed','Liberation Sans',sans-serif;color:#e4e4e4;left:421.51px;transform:scaleX(0.9300);transform-origin:5.49px 0;">G</span>
<div style="left:655.0px;top:279px;width:1px;height:18px;background:#4a4a4a;"></div>
<span class="t" style="top:289px;font:400 16.3px/0 'DejaVu Sans Condensed','Liberation Sans',sans-serif;color:#e4e4e4;left:573.74px;transform:scaleX(0.9300);transform-origin:5.51px 0;">H</span>
<div style="left:807.0px;top:279px;width:1px;height:18px;background:#4a4a4a;"></div>
<span class="t" style="top:289px;font:400 16.3px/0 'DejaVu Sans Condensed','Liberation Sans',sans-serif;color:#e4e4e4;left:729.34px;transform:scaleX(0.9300);transform-origin:2.16px 0;">I</span>
<div style="left:927.0px;top:279px;width:1px;height:18px;background:#4a4a4a;"></div>
<span class="t" style="top:289px;font:400 16.3px/0 'DejaVu Sans Condensed','Liberation Sans',sans-serif;color:#e4e4e4;left:866.44px;transform:scaleX(0.9300);transform-origin:1.06px 0;">J</span>
<div style="left:1047.0px;top:279px;width:1px;height:18px;background:#4a4a4a;"></div>
<span class="t" style="top:289px;font:400 16.3px/0 'DejaVu Sans Condensed','Liberation Sans',sans-serif;color:#e4e4e4;left:981.82px;transform:scaleX(0.9300);transform-origin:5.68px 0;">K</span>
<div style="left:1167.0px;top:279px;width:1px;height:18px;background:#4a4a4a;"></div>
<span class="t" style="top:289px;font:400 16.3px/0 'DejaVu Sans Condensed','Liberation Sans',sans-serif;color:#e4e4e4;left:1102.74px;transform:scaleX(0.9300);transform-origin:4.76px 0;">L</span>
<div style="left:1287.0px;top:279px;width:1px;height:18px;background:#4a4a4a;"></div>
<span class="t" style="top:289px;font:400 16.3px/0 'DejaVu Sans Condensed','Liberation Sans',sans-serif;color:#e4e4e4;left:1221.18px;transform:scaleX(0.9300);transform-origin:6.32px 0;">M</span>
<div style="left:1407.0px;top:279px;width:1px;height:18px;background:#4a4a4a;"></div>
<span class="t" style="top:289px;font:400 16.3px/0 'DejaVu Sans Condensed','Liberation Sans',sans-serif;color:#e4e4e4;left:1342.02px;transform:scaleX(0.9300);transform-origin:5.48px 0;">N</span>
<div style="left:1527.0px;top:279px;width:1px;height:18px;background:#4a4a4a;"></div>
<span class="t" style="top:289px;font:400 16.3px/0 'DejaVu Sans Condensed','Liberation Sans',sans-serif;color:#e4e4e4;left:1461.73px;transform:scaleX(0.9300);transform-origin:5.77px 0;">O</span>
<div style="left:1647.0px;top:279px;width:1px;height:18px;background:#4a4a4a;"></div>
<span class="t" style="top:289px;font:400 16.3px/0 'DejaVu Sans Condensed','Liberation Sans',sans-serif;color:#e4e4e4;left:1582.61px;transform:scaleX(0.9300);transform-origin:4.89px 0;">P</span>
<div style="left:1767.0px;top:279px;width:1px;height:18px;background:#4a4a4a;"></div>
<span class="t" style="top:289px;font:400 16.3px/0 'DejaVu Sans Condensed','Liberation Sans',sans-serif;color:#e4e4e4;left:1701.73px;transform:scaleX(0.9300);transform-origin:5.77px 0;">Q</span>
<div style="left:1887.0px;top:279px;width:1px;height:18px;background:#4a4a4a;"></div>
<span class="t" style="top:289px;font:400 16.3px/0 'DejaVu Sans Condensed','Liberation Sans',sans-serif;color:#e4e4e4;left:1821.90px;transform:scaleX(0.9300);transform-origin:5.60px 0;">R</span>
<div style="left:2007.0px;top:279px;width:1px;height:18px;background:#4a4a4a;"></div>
<span class="t" style="top:289px;font:400 16.3px/0 'DejaVu Sans Condensed','Liberation Sans',sans-serif;color:#e4e4e4;left:1942.77px;transform:scaleX(0.9300);transform-origin:4.73px 0;">S</span>
<div style="left:2127.0px;top:279px;width:1px;height:18px;background:#4a4a4a;"></div>
<span class="t" style="top:289px;font:400 16.3px/0 'DejaVu Sans Condensed','Liberation Sans',sans-serif;color:#e4e4e4;left:2063.02px;transform:scaleX(0.9300);transform-origin:4.48px 0;">T</span>
<div style="left:2247.0px;top:279px;width:1px;height:18px;background:#4a4a4a;"></div>
<span class="t" style="top:289px;font:400 16.3px/0 'DejaVu Sans Condensed','Liberation Sans',sans-serif;color:#e4e4e4;left:2182.14px;transform:scaleX(0.9300);transform-origin:5.36px 0;">U</span>
<div style="left:2367.0px;top:279px;width:1px;height:18px;background:#4a4a4a;"></div>
<span class="t" style="top:289px;font:400 16.3px/0 'DejaVu Sans Condensed','Liberation Sans',sans-serif;color:#e4e4e4;left:2302.49px;transform:scaleX(0.9300);transform-origin:5.01px 0;">V</span>
<div style="left:2487.0px;top:279px;width:1px;height:18px;background:#4a4a4a;"></div>
<span class="t" style="top:289px;font:400 16.3px/0 'DejaVu Sans Condensed','Liberation Sans',sans-serif;color:#e4e4e4;left:2420.25px;transform:scaleX(0.9300);transform-origin:7.25px 0;">W</span>
<div style="left:2607.0px;top:279px;width:1px;height:18px;background:#4a4a4a;"></div>
<span class="t" style="top:289px;font:400 16.3px/0 'DejaVu Sans Condensed','Liberation Sans',sans-serif;color:#e4e4e4;left:2542.49px;transform:scaleX(0.9300);transform-origin:5.01px 0;">X</span>
<div style="left:2727.0px;top:279px;width:1px;height:18px;background:#4a4a4a;"></div>
<span class="t" style="top:289px;font:400 16.3px/0 'DejaVu Sans Condensed','Liberation Sans',sans-serif;color:#e4e4e4;left:2663.02px;transform:scaleX(0.9300);transform-origin:4.48px 0;">Y</span>
<div style="left:2847.0px;top:279px;width:1px;height:18px;background:#4a4a4a;"></div>
<span class="t" style="top:289px;font:400 16.3px/0 'DejaVu Sans Condensed','Liberation Sans',sans-serif;color:#e4e4e4;left:2782.48px;transform:scaleX(0.9300);transform-origin:5.02px 0;">Z</span>
<div style="left:2859.5px;top:279px;width:1px;height:18px;background:#4a4a4a;"></div>
<div style="left:86.5px;top:279px;width:1px;height:18px;background:#8a8a8a;"></div>
<div style="left:54px;top:296.5px;width:2806px;height:1px;background:#bdbdbd;"></div>
<div style="left:54px;top:297px;width:33px;height:37px;background:linear-gradient(#757575,#636363)"></div>
<div style="left:54px;top:333px;width:33px;height:1px;background:#d8d8d8;"></div>
<div style="left:54px;top:297px;width:33px;height:36px;overflow:hidden"><span class="t" style="top:28px;font:400 16.3px/0 'DejaVu Sans Condensed','Liberation Sans',sans-serif;color:#fff;left:12.51px;transform:scaleX(0.9500);transform-origin:4.79px 0;">1</span></div>
<div style="left:54px;top:334px;width:33px;height:29px;background:#0a0a0a"></div>
<div style="left:54px;top:362px;width:33px;height:1px;background:#3d3d3d;"></div>
<div style="left:54px;top:334px;width:33px;height:28px;overflow:hidden"><span class="t" style="top:20px;font:400 16.3px/0 'DejaVu Sans Condensed','Liberation Sans',sans-serif;color:#e4e4e4;left:12.83px;transform:scaleX(0.9500);transform-origin:4.47px 0;">2</span></div>
<div style="left:54px;top:363px;width:33px;height:18px;background:#0a0a0a"></div>
<div style="left:54px;top:380px;width:33px;height:1px;background:#3d3d3d;"></div>
<div style="left:54px;top:363px;width:33px;height:17px;overflow:hidden"><span class="t" style="top:9px;font:400 16.3px/0 'DejaVu Sans Condensed','Liberation Sans',sans-serif;color:#e4e4e4;left:12.67px;transform:scaleX(0.9500);transform-origin:4.63px 0;">3</span></div>
<div style="left:54px;top:381px;width:33px;height:4px;background:#0a0a0a"></div>
<div style="left:54px;top:384px;width:33px;height:1px;background:#3d3d3d;"></div>
<div style="left:54px;top:385px;width:33px;height:32px;background:#0a0a0a"></div>
<div style="left:54px;top:416px;width:33px;height:1px;background:#3d3d3d;"></div>
<div style="left:54px;top:385px;width:33px;height:31px;overflow:hidden"><span class="t" style="top:23px;font:400 16.3px/0 'DejaVu Sans Condensed','Liberation Sans',sans-serif;color:#e4e4e4;left:12.71px;transform:scaleX(0.9500);transform-origin:4.59px 0;">5</span></div>
<div style="left:54px;top:417px;width:33px;height:20px;background:#0a0a0a"></div>
<div style="left:54px;top:436px;width:33px;height:1px;background:#3d3d3d;"></div>
<div style="left:54px;top:417px;width:33px;height:19px;overflow:hidden"><span class="t" style="top:11px;font:400 16.3px/0 'DejaVu Sans Condensed','Liberation Sans',sans-serif;color:#e4e4e4;left:12.59px;transform:scaleX(0.9500);transform-origin:4.71px 0;">6</span></div>
<div style="left:54px;top:437px;width:33px;height:20px;background:#0a0a0a"></div>
<div style="left:54px;top:456px;width:33px;height:1px;background:#3d3d3d;"></div>
<div style="left:54px;top:437px;width:33px;height:19px;overflow:hidden"><span class="t" style="top:11px;font:400 16.3px/0 'DejaVu Sans Condensed','Liberation Sans',sans-serif;color:#e4e4e4;left:12.66px;transform:scaleX(0.9500);transform-origin:4.64px 0;">7</span></div>
<div style="left:54px;top:457px;width:33px;height:20px;background:#0a0a0a"></div>
<div style="left:54px;top:476px;width:33px;height:1px;background:#3d3d3d;"></div>
<div style="left:54px;top:457px;width:33px;height:19px;overflow:hidden"><span class="t" style="top:11px;font:400 16.3px/0 'DejaVu Sans Condensed','Liberation Sans',sans-serif;color:#e4e4e4;left:7.76px;transform:scaleX(0.9500);transform-origin:9.54px 0;">13</span></div>
<div style="left:54px;top:477px;width:33px;height:25px;background:#0a0a0a"></div>
<div style="left:54px;top:501px;width:33px;height:1px;background:#3d3d3d;"></div>
<div style="left:54px;top:477px;width:33px;height:24px;overflow:hidden"><span class="t" style="top:16px;font:400 16.3px/0 'DejaVu Sans Condensed','Liberation Sans',sans-serif;color:#e4e4e4;left:7.58px;transform:scaleX(0.9500);transform-origin:9.72px 0;">14</span></div>
<div style="left:54px;top:502px;width:33px;height:13px;background:#0a0a0a"></div>
<div style="left:54px;top:514px;width:33px;height:1px;background:#3d3d3d;"></div>
<div style="left:54px;top:502px;width:33px;height:12px;overflow:hidden"><span class="t" style="top:4px;font:400 16.3px/0 'DejaVu Sans Condensed','Liberation Sans',sans-serif;color:#e4e4e4;left:7.82px;transform:scaleX(0.9500);transform-origin:9.48px 0;">15</span></div>
<div style="left:54px;top:515px;width:33px;height:23px;background:#0a0a0a"></div>
<div style="left:54px;top:537px;width:33px;height:1px;background:#3d3d3d;"></div>
<div style="left:54px;top:515px;width:33px;height:22px;overflow:hidden"><span class="t" style="top:14px;font:400 16.3px/0 'DejaVu Sans Condensed','Liberation Sans',sans-serif;color:#e4e4e4;left:7.64px;transform:scaleX(0.9500);transform-origin:9.66px 0;">16</span></div>
<div style="left:54px;top:538px;width:33px;height:6px;background:#0a0a0a"></div>
<div style="left:54px;top:543px;width:33px;height:1px;background:#3d3d3d;"></div>
<div style="left:54px;top:538px;width:33px;height:5px;overflow:hidden"><span class="t" style="top:-3px;font:400 16.3px/0 'DejaVu Sans Condensed','Liberation Sans',sans-serif;color:#e4e4e4;left:7.80px;transform:scaleX(0.9500);transform-origin:9.50px 0;">17</span></div>
<div style="left:54px;top:544px;width:33px;height:4px;background:#0a0a0a"></div>
<div style="left:54px;top:547px;width:33px;height:1px;background:#3d3d3d;"></div>
<div style="left:54px;top:548px;width:33px;height:16px;background:#0a0a0a"></div>
<div style="left:54px;top:563px;width:33px;height:1px;background:#3d3d3d;"></div>
<div style="left:54px;top:548px;width:33px;height:15px;overflow:hidden"><span class="t" style="top:9px;font:400 16.3px/0 'DejaVu Sans Condensed','Liberation Sans',sans-serif;color:#e4e4e4;left:7.69px;transform:scaleX(0.9500);transform-origin:9.61px 0;">19</span></div>
<div style="left:54px;top:564px;width:33px;height:3px;background:#0a0a0a"></div>
<div style="left:54px;top:566px;width:33px;height:1px;background:#3d3d3d;"></div>
<div style="left:54px;top:567px;width:33px;height:19px;background:#0a0a0a"></div>
<div style="left:54px;top:585px;width:33px;height:1px;background:#3d3d3d;"></div>
<div style="left:54px;top:567px;width:33px;height:18px;overflow:hidden"><span class="t" style="top:10px;font:400 16.3px/0 'DejaVu Sans Condensed','Liberation Sans',sans-serif;color:#e4e4e4;left:8.17px;transform:scaleX(0.9500);transform-origin:9.13px 0;">22</span></div>
<div style="left:54px;top:586px;width:33px;height:20px;background:#0a0a0a"></div>
<div style="left:54px;top:605px;width:33px;height:1px;background:#3d3d3d;"></div>
<div style="left:54px;top:586px;width:33px;height:19px;overflow:hidden"><span class="t" style="top:11px;font:400 16.3px/0 'DejaVu Sans Condensed','Liberation Sans',sans-serif;color:#e4e4e4;left:8.03px;transform:scaleX(0.9500);transform-origin:9.27px 0;">23</span></div>
<div style="left:54px;top:606px;width:33px;height:20px;background:#0a0a0a"></div>
<div style="left:54px;top:625px;width:33px;height:1px;background:#3d3d3d;"></div>
<div style="left:54px;top:606px;width:33px;height:19px;overflow:hidden"><span class="t" style="top:11px;font:400 16.3px/0 'DejaVu Sans Condensed','Liberation Sans',sans-serif;color:#e4e4e4;left:7.85px;transform:scaleX(0.9500);transform-origin:9.45px 0;">24</span></div>
<div style="left:54px;top:626px;width:33px;height:20px;background:#0a0a0a"></div>
<div style="left:54px;top:645px;width:33px;height:1px;background:#3d3d3d;"></div>
<div style="left:54px;top:626px;width:33px;height:19px;overflow:hidden"><span class="t" style="top:11px;font:400 16.3px/0 'DejaVu Sans Condensed','Liberation Sans',sans-serif;color:#e4e4e4;left:8.08px;transform:scaleX(0.9500);transform-origin:9.22px 0;">25</span></div>
<div style="left:54px;top:646px;width:33px;height:17px;background:#0a0a0a"></div>
<div style="left:54px;top:662px;width:33px;height:1px;background:#3d3d3d;"></div>
<div style="left:54px;top:646px;width:33px;height:16px;overflow:hidden"><span class="t" style="top:8px;font:400 16.3px/0 'DejaVu Sans Condensed','Liberation Sans',sans-serif;color:#e4e4e4;left:7.90px;transform:scaleX(0.9500);transform-origin:9.40px 0;">26</span></div>
<div style="left:54px;top:663px;width:33px;height:23px;background:#0a0a0a"></div>
<div style="left:54px;top:685px;width:33px;height:1px;background:#3d3d3d;"></div>
<div style="left:54px;top:663px;width:33px;height:22px;overflow:hidden"><span class="t" style="top:14px;font:400 16.3px/0 'DejaVu Sans Condensed','Liberation Sans',sans-serif;color:#e4e4e4;left:8.07px;transform:scaleX(0.9500);transform-origin:9.23px 0;">27</span></div>
<div style="left:54px;top:686px;width:33px;height:4px;background:#0a0a0a"></div>
<div style="left:54px;top:689px;width:33px;height:1px;background:#3d3d3d;"></div>
<div style="left:54px;top:690px;width:33px;height:20px;background:#0a0a0a"></div>
<div style="left:54px;top:709px;width:33px;height:1px;background:#3d3d3d;"></div>
<div style="left:54px;top:690px;width:33px;height:19px;overflow:hidden"><span class="t" style="top:11px;font:400 16.3px/0 'DejaVu Sans Condensed','Liberation Sans',sans-serif;color:#e4e4e4;left:7.95px;transform:scaleX(0.9500);transform-origin:9.35px 0;">29</span></div>
<div style="left:54px;top:710px;width:33px;height:4px;background:#0a0a0a"></div>
<div style="left:54px;top:713px;width:33px;height:1px;background:#3d3d3d;"></div>
<div style="left:54px;top:714px;width:33px;height:20px;background:#0a0a0a"></div>
<div style="left:54px;top:733px;width:33px;height:1px;background:#3d3d3d;"></div>
<div style="left:54px;top:714px;width:33px;height:19px;overflow:hidden"><span class="t" style="top:11px;font:400 16.3px/0 'DejaVu Sans Condensed','Liberation Sans',sans-serif;color:#e4e4e4;left:8.10px;transform:scaleX(0.9500);transform-origin:9.20px 0;">31</span></div>
<div style="left:54px;top:734px;width:33px;height:17px;background:#0a0a0a"></div>
<div style="left:54px;top:750px;width:33px;height:1px;background:#3d3d3d;"></div>
<div style="left:54px;top:734px;width:33px;height:16px;overflow:hidden"><span class="t" style="top:8px;font:400 16.3px/0 'DejaVu Sans Condensed','Liberation Sans',sans-serif;color:#e4e4e4;left:8.15px;transform:scaleX(0.9500);transform-origin:9.15px 0;">32</span></div>
<div style="left:54px;top:751px;width:33px;height:23px;background:#0a0a0a"></div>
<div style="left:54px;top:773px;width:33px;height:1px;background:#3d3d3d;"></div>
<div style="left:54px;top:751px;width:33px;height:22px;overflow:hidden"><span class="t" style="top:14px;font:400 16.3px/0 'DejaVu Sans Condensed','Liberation Sans',sans-serif;color:#e4e4e4;left:8.01px;transform:scaleX(0.9500);transform-origin:9.29px 0;">33</span></div>
<div style="left:54px;top:774px;width:33px;height:4px;background:#0a0a0a"></div>
<div style="left:54px;top:777px;width:33px;height:1px;background:#3d3d3d;"></div>
<div style="left:54px;top:778px;width:33px;height:20px;background:#0a0a0a"></div>
<div style="left:54px;top:797px;width:33px;height:1px;background:#3d3d3d;"></div>
<div style="left:54px;top:778px;width:33px;height:19px;overflow:hidden"><span class="t" style="top:11px;font:400 16.3px/0 'DejaVu Sans Condensed','Liberation Sans',sans-serif;color:#e4e4e4;left:8.06px;transform:scaleX(0.9500);transform-origin:9.24px 0;">35</span></div>
<div style="left:54px;top:798px;width:33px;height:20px;background:#0a0a0a"></div>
<div style="left:54px;top:817px;width:33px;height:1px;background:#3d3d3d;"></div>
<div style="left:54px;top:798px;width:33px;height:19px;overflow:hidden"><span class="t" style="top:11px;font:400 16.3px/0 'DejaVu Sans Condensed','Liberation Sans',sans-serif;color:#e4e4e4;left:7.88px;transform:scaleX(0.9500);transform-origin:9.42px 0;">36</span></div>
<div style="left:54px;top:818px;width:33px;height:20px;background:#0a0a0a"></div>
<div style="left:54px;top:837px;width:33px;height:1px;background:#3d3d3d;"></div>
<div style="left:54px;top:818px;width:33px;height:19px;overflow:hidden"><span class="t" style="top:11px;font:400 16.3px/0 'DejaVu Sans Condensed','Liberation Sans',sans-serif;color:#e4e4e4;left:8.05px;transform:scaleX(0.9500);transform-origin:9.25px 0;">37</span></div>
<div style="left:54px;top:838px;width:33px;height:20px;background:#0a0a0a"></div>
<div style="left:54px;top:857px;width:33px;height:1px;background:#3d3d3d;"></div>
<div style="left:54px;top:838px;width:33px;height:19px;overflow:hidden"><span class="t" style="top:11px;font:400 16.3px/0 'DejaVu Sans Condensed','Liberation Sans',sans-serif;color:#e4e4e4;left:7.92px;transform:scaleX(0.9500);transform-origin:9.38px 0;">38</span></div>
<div style="left:54px;top:858px;width:33px;height:20px;background:#0a0a0a"></div>
<div style="left:54px;top:877px;width:33px;height:1px;background:#3d3d3d;"></div>
<div style="left:54px;top:858px;width:33px;height:19px;overflow:hidden"><span class="t" style="top:11px;font:400 16.3px/0 'DejaVu Sans Condensed','Liberation Sans',sans-serif;color:#e4e4e4;left:7.94px;transform:scaleX(0.9500);transform-origin:9.36px 0;">39</span></div>
<div style="left:54px;top:878px;width:33px;height:20px;background:#0a0a0a"></div>
<div style="left:54px;top:897px;width:33px;height:1px;background:#3d3d3d;"></div>
<div style="left:54px;top:878px;width:33px;height:19px;overflow:hidden"><span class="t" style="top:11px;font:400 16.3px/0 'DejaVu Sans Condensed','Liberation Sans',sans-serif;color:#e4e4e4;left:8.11px;transform:scaleX(0.9500);transform-origin:9.19px 0;">40</span></div>
<div style="left:54px;top:898px;width:33px;height:17px;background:#0a0a0a"></div>
<div style="left:54px;top:914px;width:33px;height:1px;background:#3d3d3d;"></div>
<div style="left:54px;top:898px;width:33px;height:16px;overflow:hidden"><span class="t" style="top:8px;font:400 16.3px/0 'DejaVu Sans Condensed','Liberation Sans',sans-serif;color:#e4e4e4;left:8.30px;transform:scaleX(0.9500);transform-origin:9.00px 0;">41</span></div>
<div style="left:54px;top:915px;width:33px;height:20px;background:#0a0a0a"></div>
<div style="left:54px;top:934px;width:33px;height:1px;background:#3d3d3d;"></div>
<div style="left:54px;top:915px;width:33px;height:19px;overflow:hidden"><span class="t" style="top:11px;font:400 16.3px/0 'DejaVu Sans Condensed','Liberation Sans',sans-serif;color:#e4e4e4;left:8.35px;transform:scaleX(0.9500);transform-origin:8.95px 0;">42</span></div>
<div style="left:54px;top:935px;width:33px;height:17px;background:#0a0a0a"></div>
<div style="left:54px;top:951px;width:33px;height:1px;background:#3d3d3d;"></div>
<div style="left:54px;top:935px;width:33px;height:16px;overflow:hidden"><span class="t" style="top:8px;font:400 16.3px/0 'DejaVu Sans Condensed','Liberation Sans',sans-serif;color:#e4e4e4;left:8.21px;transform:scaleX(0.9500);transform-origin:9.09px 0;">43</span></div>
<div style="left:54px;top:952px;width:33px;height:17px;background:#0a0a0a"></div>
<div style="left:54px;top:968px;width:33px;height:1px;background:#3d3d3d;"></div>
<div style="left:54px;top:952px;width:33px;height:16px;overflow:hidden"><span class="t" style="top:8px;font:400 16.3px/0 'DejaVu Sans Condensed','Liberation Sans',sans-serif;color:#e4e4e4;left:8.03px;transform:scaleX(0.9500);transform-origin:9.27px 0;">44</span></div>
<div style="left:54px;top:969px;width:33px;height:25px;background:#0a0a0a"></div>
<div style="left:54px;top:993px;width:33px;height:1px;background:#3d3d3d;"></div>
<div style="left:54px;top:969px;width:33px;height:24px;overflow:hidden"><span class="t" style="top:16px;font:400 16.3px/0 'DejaVu Sans Condensed','Liberation Sans',sans-serif;color:#e4e4e4;left:8.26px;transform:scaleX(0.9500);transform-origin:9.04px 0;">45</span></div>
<div style="left:54px;top:994px;width:33px;height:12px;background:#0a0a0a"></div>
<div style="left:54px;top:1005px;width:33px;height:1px;background:#3d3d3d;"></div>
<div style="left:54px;top:994px;width:33px;height:11px;overflow:hidden"><span class="t" style="top:3px;font:400 16.3px/0 'DejaVu Sans Condensed','Liberation Sans',sans-serif;color:#e4e4e4;left:8.08px;transform:scaleX(0.9500);transform-origin:9.22px 0;">46</span></div>
<div style="left:54px;top:1006px;width:33px;height:24px;background:#0a0a0a"></div>
<div style="left:54px;top:1029px;width:33px;height:1px;background:#3d3d3d;"></div>
<div style="left:54px;top:1006px;width:33px;height:23px;overflow:hidden"><span class="t" style="top:15px;font:400 16.3px/0 'DejaVu Sans Condensed','Liberation Sans',sans-serif;color:#e4e4e4;left:8.25px;transform:scaleX(0.9500);transform-origin:9.05px 0;">47</span></div>
<div style="left:54px;top:1030px;width:33px;height:23px;background:#0a0a0a"></div>
<div style="left:54px;top:1052px;width:33px;height:1px;background:#3d3d3d;"></div>
<div style="left:54px;top:1030px;width:33px;height:22px;overflow:hidden"><span class="t" style="top:14px;font:400 16.3px/0 'DejaVu Sans Condensed','Liberation Sans',sans-serif;color:#e4e4e4;left:8.12px;transform:scaleX(0.9500);transform-origin:9.18px 0;">48</span></div>
<div style="left:54px;top:1053px;width:33px;height:23px;background:#0a0a0a"></div>
<div style="left:54px;top:1075px;width:33px;height:1px;background:#3d3d3d;"></div>
<div style="left:54px;top:1053px;width:33px;height:22px;overflow:hidden"><span class="t" style="top:14px;font:400 16.3px/0 'DejaVu Sans Condensed','Liberation Sans',sans-serif;color:#e4e4e4;left:8.13px;transform:scaleX(0.9500);transform-origin:9.17px 0;">49</span></div>
<div style="left:54px;top:1076px;width:33px;height:20px;background:#0a0a0a"></div>
<div style="left:54px;top:1095px;width:33px;height:1px;background:#3d3d3d;"></div>
<div style="left:54px;top:1076px;width:33px;height:19px;overflow:hidden"><span class="t" style="top:11px;font:400 16.3px/0 'DejaVu Sans Condensed','Liberation Sans',sans-serif;color:#e4e4e4;left:7.90px;transform:scaleX(0.9500);transform-origin:9.40px 0;">50</span></div>
<div style="left:54px;top:1096px;width:33px;height:23px;background:#0a0a0a"></div>
<div style="left:54px;top:1118px;width:33px;height:1px;background:#3d3d3d;"></div>
<div style="left:54px;top:1096px;width:33px;height:22px;overflow:hidden"><span class="t" style="top:14px;font:400 16.3px/0 'DejaVu Sans Condensed','Liberation Sans',sans-serif;color:#e4e4e4;left:8.09px;transform:scaleX(0.9500);transform-origin:9.21px 0;">51</span></div>
<div style="left:54px;top:1119px;width:33px;height:23px;background:#0a0a0a"></div>
<div style="left:54px;top:1141px;width:33px;height:1px;background:#3d3d3d;"></div>
<div style="left:54px;top:1119px;width:33px;height:22px;overflow:hidden"><span class="t" style="top:14px;font:400 16.3px/0 'DejaVu Sans Condensed','Liberation Sans',sans-serif;color:#e4e4e4;left:8.15px;transform:scaleX(0.9500);transform-origin:9.15px 0;">52</span></div>
<div style="left:54px;top:1142px;width:33px;height:23px;background:#0a0a0a"></div>
<div style="left:54px;top:1164px;width:33px;height:1px;background:#3d3d3d;"></div>
<div style="left:54px;top:1142px;width:33px;height:22px;overflow:hidden"><span class="t" style="top:14px;font:400 16.3px/0 'DejaVu Sans Condensed','Liberation Sans',sans-serif;color:#e4e4e4;left:8.00px;transform:scaleX(0.9500);transform-origin:9.30px 0;">53</span></div>
<div style="left:54px;top:1165px;width:33px;height:20px;background:#0a0a0a"></div>
<div style="left:54px;top:1184px;width:33px;height:1px;background:#3d3d3d;"></div>
<div style="left:54px;top:1165px;width:33px;height:19px;overflow:hidden"><span class="t" style="top:11px;font:400 16.3px/0 'DejaVu Sans Condensed','Liberation Sans',sans-serif;color:#e4e4e4;left:7.82px;transform:scaleX(0.9500);transform-origin:9.48px 0;">54</span></div>
<div style="left:54px;top:1185px;width:33px;height:23px;background:#0a0a0a"></div>
<div style="left:54px;top:1207px;width:33px;height:1px;background:#3d3d3d;"></div>
<div style="left:54px;top:1185px;width:33px;height:22px;overflow:hidden"><span class="t" style="top:14px;font:400 16.3px/0 'DejaVu Sans Condensed','Liberation Sans',sans-serif;color:#e4e4e4;left:8.05px;transform:scaleX(0.9500);transform-origin:9.25px 0;">55</span></div>
<div style="left:54px;top:1208px;width:33px;height:23px;background:#0a0a0a"></div>
<div style="left:54px;top:1230px;width:33px;height:1px;background:#3d3d3d;"></div>
<div style="left:54px;top:1208px;width:33px;height:22px;overflow:hidden"><span class="t" style="top:14px;font:400 16.3px/0 'DejaVu Sans Condensed','Liberation Sans',sans-serif;color:#e4e4e4;left:7.88px;transform:scaleX(0.9500);transform-origin:9.42px 0;">56</span></div>
<div style="left:54px;top:1231px;width:33px;height:20px;background:#0a0a0a"></div>
<div style="left:54px;top:1250px;width:33px;height:1px;background:#3d3d3d;"></div>
<div style="left:54px;top:1231px;width:33px;height:19px;overflow:hidden"><span class="t" style="top:11px;font:400 16.3px/0 'DejaVu Sans Condensed','Liberation Sans',sans-serif;color:#e4e4e4;left:8.04px;transform:scaleX(0.9500);transform-origin:9.26px 0;">57</span></div>
<div style="left:54px;top:1251px;width:33px;height:20px;background:#0a0a0a"></div>
<div style="left:54px;top:1270px;width:33px;height:1px;background:#3d3d3d;"></div>
<div style="left:54px;top:1251px;width:33px;height:19px;overflow:hidden"><span class="t" style="top:11px;font:400 16.3px/0 'DejaVu Sans Condensed','Liberation Sans',sans-serif;color:#e4e4e4;left:7.92px;transform:scaleX(0.9500);transform-origin:9.38px 0;">58</span></div>
<div style="left:54px;top:1271px;width:33px;height:20px;background:#0a0a0a"></div>
<div style="left:54px;top:1290px;width:33px;height:1px;background:#3d3d3d;"></div>
<div style="left:54px;top:1271px;width:33px;height:19px;overflow:hidden"><span class="t" style="top:11px;font:400 16.3px/0 'DejaVu Sans Condensed','Liberation Sans',sans-serif;color:#e4e4e4;left:7.93px;transform:scaleX(0.9500);transform-origin:9.37px 0;">59</span></div>
<div style="left:54px;top:1291px;width:33px;height:20px;background:#0a0a0a"></div>
<div style="left:54px;top:1310px;width:33px;height:1px;background:#3d3d3d;"></div>
<div style="left:54px;top:1291px;width:33px;height:19px;overflow:hidden"><span class="t" style="top:11px;font:400 16.3px/0 'DejaVu Sans Condensed','Liberation Sans',sans-serif;color:#e4e4e4;left:7.95px;transform:scaleX(0.9500);transform-origin:9.35px 0;">60</span></div>
<div style="left:54px;top:1311px;width:33px;height:23px;background:#0a0a0a"></div>
<div style="left:54px;top:1333px;width:33px;height:1px;background:#3d3d3d;"></div>
<div style="left:54px;top:1311px;width:33px;height:22px;overflow:hidden"><span class="t" style="top:14px;font:400 16.3px/0 'DejaVu Sans Condensed','Liberation Sans',sans-serif;color:#e4e4e4;left:8.15px;transform:scaleX(0.9500);transform-origin:9.15px 0;">61</span></div>
<div style="left:54px;top:1334px;width:33px;height:23px;background:#0a0a0a"></div>
<div style="left:54px;top:1356px;width:33px;height:1px;background:#3d3d3d;"></div>
<div style="left:54px;top:1334px;width:33px;height:22px;overflow:hidden"><span class="t" style="top:14px;font:400 16.3px/0 'DejaVu Sans Condensed','Liberation Sans',sans-serif;color:#e4e4e4;left:8.20px;transform:scaleX(0.9500);transform-origin:9.10px 0;">62</span></div>
<div style="left:54px;top:1357px;width:33px;height:23px;background:#0a0a0a"></div>
<div style="left:54px;top:1379px;width:33px;height:1px;background:#3d3d3d;"></div>
<div style="left:54px;top:1357px;width:33px;height:22px;overflow:hidden"><span class="t" style="top:14px;font:400 16.3px/0 'DejaVu Sans Condensed','Liberation Sans',sans-serif;color:#e4e4e4;left:8.05px;transform:scaleX(0.9500);transform-origin:9.25px 0;">63</span></div>
<div style="left:54px;top:1380px;width:33px;height:23px;background:#0a0a0a"></div>
<div style="left:54px;top:1402px;width:33px;height:1px;background:#3d3d3d;"></div>
<div style="left:54px;top:1380px;width:33px;height:22px;overflow:hidden"><span class="t" style="top:14px;font:400 16.3px/0 'DejaVu Sans Condensed','Liberation Sans',sans-serif;color:#e4e4e4;left:7.88px;transform:scaleX(0.9500);transform-origin:9.42px 0;">64</span></div>
<div style="left:54px;top:1403px;width:33px;height:20px;background:#0a0a0a"></div>
<div style="left:54px;top:1422px;width:33px;height:1px;background:#3d3d3d;"></div>
<div style="left:54px;top:1403px;width:33px;height:19px;overflow:hidden"><span class="t" style="top:11px;font:400 16.3px/0 'DejaVu Sans Condensed','Liberation Sans',sans-serif;color:#e4e4e4;left:8.11px;transform:scaleX(0.9500);transform-origin:9.19px 0;">65</span></div>
<div style="left:54px;top:1423px;width:33px;height:21px;background:#0a0a0a"></div>
<div style="left:54px;top:1443px;width:33px;height:1px;background:#3d3d3d;"></div>
<div style="left:54px;top:1423px;width:33px;height:20px;overflow:hidden"><span class="t" style="top:12px;font:400 16.3px/0 'DejaVu Sans Condensed','Liberation Sans',sans-serif;color:#e4e4e4;left:7.93px;transform:scaleX(0.9500);transform-origin:9.37px 0;">66</span></div>
<div style="left:54px;top:1444px;width:33px;height:17px;background:#0a0a0a"></div>
<div style="left:54px;top:1460px;width:33px;height:1px;background:#3d3d3d;"></div>
<div style="left:54px;top:1444px;width:33px;height:16px;overflow:hidden"><span class="t" style="top:8px;font:400 16.3px/0 'DejaVu Sans Condensed','Liberation Sans',sans-serif;color:#e4e4e4;left:8.09px;transform:scaleX(0.9500);transform-origin:9.21px 0;">67</span></div>
<div style="left:54px;top:1461px;width:33px;height:25px;background:#0a0a0a"></div>
<div style="left:54px;top:1485px;width:33px;height:1px;background:#3d3d3d;"></div>
<div style="left:54px;top:1461px;width:33px;height:24px;overflow:hidden"><span class="t" style="top:16px;font:400 16.3px/0 'DejaVu Sans Condensed','Liberation Sans',sans-serif;color:#e4e4e4;left:7.97px;transform:scaleX(0.9500);transform-origin:9.33px 0;">68</span></div>
<div style="left:54px;top:1486px;width:33px;height:13px;background:#0a0a0a"></div>
<div style="left:54px;top:1498px;width:33px;height:1px;background:#3d3d3d;"></div>
<div style="left:54px;top:1486px;width:33px;height:12px;overflow:hidden"><span class="t" style="top:4px;font:400 16.3px/0 'DejaVu Sans Condensed','Liberation Sans',sans-serif;color:#e4e4e4;left:7.98px;transform:scaleX(0.9500);transform-origin:9.32px 0;">69</span></div>
<div style="left:54px;top:1499px;width:33px;height:20px;background:#0a0a0a"></div>
<div style="left:54px;top:1518px;width:33px;height:1px;background:#3d3d3d;"></div>
<div style="left:54px;top:1499px;width:33px;height:19px;overflow:hidden"><span class="t" style="top:11px;font:400 16.3px/0 'DejaVu Sans Condensed','Liberation Sans',sans-serif;color:#e4e4e4;left:7.86px;transform:scaleX(0.9500);transform-origin:9.44px 0;">70</span></div>
<div style="left:54px;top:1519px;width:33px;height:20px;background:#0a0a0a"></div>
<div style="left:54px;top:1538px;width:33px;height:1px;background:#3d3d3d;"></div>
<div style="left:54px;top:1519px;width:33px;height:19px;overflow:hidden"><span class="t" style="top:11px;font:400 16.3px/0 'DejaVu Sans Condensed','Liberation Sans',sans-serif;color:#e4e4e4;left:8.05px;transform:scaleX(0.9500);transform-origin:9.25px 0;">71</span></div>
<div style="left:54px;top:1539px;width:33px;height:20px;background:#0a0a0a"></div>
<div style="left:54px;top:1558px;width:33px;height:1px;background:#3d3d3d;"></div>
<div style="left:54px;top:1539px;width:33px;height:19px;overflow:hidden"><span class="t" style="top:11px;font:400 16.3px/0 'DejaVu Sans Condensed','Liberation Sans',sans-serif;color:#e4e4e4;left:8.11px;transform:scaleX(0.9500);transform-origin:9.19px 0;">72</span></div>
<div style="left:54px;top:1559px;width:33px;height:20px;background:#0a0a0a"></div>
<div style="left:54px;top:1578px;width:33px;height:1px;background:#3d3d3d;"></div>
<div style="left:54px;top:1559px;width:33px;height:19px;overflow:hidden"><span class="t" style="top:11px;font:400 16.3px/0 'DejaVu Sans Condensed','Liberation Sans',sans-serif;color:#e4e4e4;left:7.96px;transform:scaleX(0.9500);transform-origin:9.34px 0;">73</span></div>
<div style="left:54px;top:1579px;width:33px;height:20px;background:#0a0a0a"></div>
<div style="left:54px;top:1598px;width:33px;height:1px;background:#3d3d3d;"></div>
<div style="left:54px;top:1579px;width:33px;height:19px;overflow:hidden"><span class="t" style="top:11px;font:400 16.3px/0 'DejaVu Sans Condensed','Liberation Sans',sans-serif;color:#e4e4e4;left:7.79px;transform:scaleX(0.9500);transform-origin:9.51px 0;">74</span></div>
<div style="left:54px;top:1599px;width:33px;height:20px;background:#0a0a0a"></div>
<div style="left:54px;top:1618px;width:33px;height:1px;background:#3d3d3d;"></div>
<div style="left:54px;top:1599px;width:33px;height:19px;overflow:hidden"><span class="t" style="top:11px;font:400 16.3px/0 'DejaVu Sans Condensed','Liberation Sans',sans-serif;color:#e4e4e4;left:8.02px;transform:scaleX(0.9500);transform-origin:9.28px 0;">75</span></div>
<div style="left:54px;top:1619px;width:33px;height:20px;background:#0a0a0a"></div>
<div style="left:54px;top:1638px;width:33px;height:1px;background:#3d3d3d;"></div>
<div style="left:54px;top:1619px;width:33px;height:19px;overflow:hidden"><span class="t" style="top:11px;font:400 16.3px/0 'DejaVu Sans Condensed','Liberation Sans',sans-serif;color:#e4e4e4;left:7.84px;transform:scaleX(0.9500);transform-origin:9.46px 0;">76</span></div>
<div style="left:54px;top:1639px;width:33px;height:21px;background:#0a0a0a"></div>
<div style="left:54px;top:1659px;width:33px;height:1px;background:#3d3d3d;"></div>
<div style="left:54px;top:1639px;width:33px;height:20px;overflow:hidden"><span class="t" style="top:12px;font:400 16.3px/0 'DejaVu Sans Condensed','Liberation Sans',sans-serif;color:#e4e4e4;left:8.00px;transform:scaleX(0.9500);transform-origin:9.30px 0;">77</span></div>
<div style="left:54px;top:1660px;width:33px;height:21px;background:#0a0a0a"></div>
<div style="left:54px;top:1680px;width:33px;height:1px;background:#3d3d3d;"></div>
<div style="left:54px;top:1660px;width:33px;height:20px;overflow:hidden"><span class="t" style="top:12px;font:400 16.3px/0 'DejaVu Sans Condensed','Liberation Sans',sans-serif;color:#e4e4e4;left:7.88px;transform:scaleX(0.9500);transform-origin:9.42px 0;">78</span></div>
<div style="left:54px;top:297px;width:33px;height:1px;background:#d8d8d8;"></div>
<div style="left:13.8px;top:547.5px;width:18px;height:17px;background:#e2e2e2;border:1.5px solid #f6f6f6;box-sizing:border-box"></div>
<div style="left:18.8px;top:555.5px;width:8px;height:1.5px;background:#555;"></div>
<div style="left:22.05px;top:552.25px;width:1.5px;height:8px;background:#555;"></div>
<div style="left:13.8px;top:567.5px;width:18px;height:17px;background:#e2e2e2;border:1.5px solid #f6f6f6;box-sizing:border-box"></div>
<div style="left:18.8px;top:575.5px;width:8px;height:1.5px;background:#555;"></div>
<div style="left:22.05px;top:572.25px;width:1.5px;height:8px;background:#555;"></div>
<div style="left:135px;top:625px;width:2725px;height:20px;background:#49b0e6;"></div>
<div style="left:135px;top:713px;width:2725px;height:21px;background:#49b0e6;"></div>
<div style="left:135px;top:877px;width:2725px;height:21px;background:#49b0e6;"></div>
<div style="left:135px;top:914px;width:2725px;height:21px;background:#49b0e6;"></div>
<div style="left:122px;top:1075px;width:2738px;height:21px;background:#49b0e6;"></div>
<div style="left:122px;top:1164px;width:2738px;height:21px;background:#49b0e6;"></div>
<div style="left:122px;top:1290px;width:2738px;height:21px;background:#49b0e6;"></div>
<div style="left:122px;top:1402px;width:2738px;height:21px;background:#49b0e6;"></div>
<div style="left:135px;top:1638px;width:2725px;height:21px;background:#49b0e6;"></div>
<div style="left:11px;top:456px;width:2849px;height:1.2px;background:#9c9c9c;"></div>
<div style="left:807px;top:279px;width:1.3px;height:1391px;background:#909090;"></div>
<div style="left:86.5px;top:296px;width:2px;height:37px;background:#1f7a45;"></div>
<div style="left:87px;top:295.5px;width:24px;height:2px;background:#1f7a45;"></div>
<span class="t" style="top:317px;font:700 27.8px/0 'DejaVu Sans Condensed','Liberation Sans',sans-serif;color:#1f1f23;left:114.26px;transform:scaleX(1.0050);transform-origin:0 0;">Cash Flow Statement</span>
<span class="t" style="top:349px;font:700 24.2px/0 'DejaVu Sans Condensed','Liberation Sans',sans-serif;color:#000;left:113.89px;">ABC Company Inc.</span>
<span class="t" style="top:428px;font:700 16.3px/0 'DejaVu Sans Condensed','Liberation Sans',sans-serif;color:#000;left:112.09px;transform:scaleX(0.9746);transform-origin:0 0;">Fiscal year</span>
<span class="t" style="top:448px;font:700 16.3px/0 'DejaVu Sans Condensed','Liberation Sans',sans-serif;color:#000;left:112.06px;">Month</span>
<span class="t" style="top:490px;font:700 21.3px/0 'DejaVu Sans Condensed','Liberation Sans',sans-serif;color:#1f1f23;left:113.42px;transform:scaleX(0.9292);transform-origin:0 0;">Cash Flow Statement, $</span>
<span class="t" style="top:528px;font:700 16.6px/0 'DejaVu Sans Condensed','Liberation Sans',sans-serif;color:#1f1f23;left:126.22px;transform:scaleX(1.0573);transform-origin:0 0;">Cash Flow from Operating Activities</span>
<span class="t" style="top:676px;font:700 16.6px/0 'DejaVu Sans Condensed','Liberation Sans',sans-serif;color:#1f1f23;left:126.21px;transform:scaleX(1.0653);transform-origin:0 0;">Cash Flow from Investing Activities</span>
<span class="t" style="top:764px;font:700 16.6px/0 'DejaVu Sans Condensed','Liberation Sans',sans-serif;color:#1f1f23;left:126.22px;transform:scaleX(1.0598);transform-origin:0 0;">Cash Flow from Financing Activities</span>
<span class="t" style="top:982px;font:700 21.3px/0 'DejaVu Sans Condensed','Liberation Sans',sans-serif;color:#1f1f23;left:113.42px;transform:scaleX(0.9336);transform-origin:0 0;">Cash Flow Statement (indirect method), $</span>
<span class="t" style="top:1020px;font:700 16.6px/0 'DejaVu Sans Condensed','Liberation Sans',sans-serif;color:#1f1f23;left:126.22px;transform:scaleX(1.0508);transform-origin:0 0;">Operating Activities</span>
<span class="t" style="top:1132px;font:700 16.6px/0 'DejaVu Sans Condensed','Liberation Sans',sans-serif;color:#1f1f23;left:125.54px;transform:scaleX(1.0693);transform-origin:0 0;">Investing Activities</span>
<span class="t" style="top:1221px;font:700 16.6px/0 'DejaVu Sans Condensed','Liberation Sans',sans-serif;color:#1f1f23;left:125.55px;transform:scaleX(1.0592);transform-origin:0 0;">Financing Activities</span>
<span class="t" style="top:1347px;font:700 16.6px/0 'DejaVu Sans Condensed','Liberation Sans',sans-serif;color:#1f1f23;left:126.20px;transform:scaleX(1.0782);transform-origin:0 0;">Cash Movement</span>
<span class="t" style="top:1474px;font:700 21.3px/0 'DejaVu Sans Condensed','Liberation Sans',sans-serif;color:#1f1f23;left:125.63px;transform:scaleX(0.9495);transform-origin:0 0;">Interest on Cash Breakdown</span>
<span class="t" style="top:373px;font:700 16.3px/0 'DejaVu Serif Condensed','DejaVu Serif','Liberation Serif',serif;color:#3377e6;left:112.98px;transform:scaleX(1.0070);transform-origin:0 0;">Go to Table of Contents</span>
<div style="left:113px;top:379.3px;width:194.3px;height:1.7px;background:#3377e6;"></div>
<span class="t" style="top:428px;font:700 16.3px/0 'DejaVu Sans Condensed','Liberation Sans',sans-serif;color:#000;right:1977.74px;transform:scaleX(0.9760);transform-origin:100% 0;">2026</span>
<span class="t" style="top:448px;font:700 16.3px/0 'DejaVu Sans Condensed','Liberation Sans',sans-serif;color:#000;right:1977.69px;transform:scaleX(1.0370);transform-origin:100% 0;">Jan-26</span>
<span class="t" style="top:428px;font:700 16.3px/0 'DejaVu Sans Condensed','Liberation Sans',sans-serif;color:#000;right:1857.74px;transform:scaleX(0.9760);transform-origin:100% 0;">2026</span>
<span class="t" style="top:448px;font:700 16.3px/0 'DejaVu Sans Condensed','Liberation Sans',sans-serif;color:#000;right:1857.69px;transform:scaleX(1.0370);transform-origin:100% 0;">Feb-26</span>
<span class="t" style="top:428px;font:700 16.3px/0 'DejaVu Sans Condensed','Liberation Sans',sans-serif;color:#000;right:1737.74px;transform:scaleX(0.9760);transform-origin:100% 0;">2026</span>
<span class="t" style="top:448px;font:700 16.3px/0 'DejaVu Sans Condensed','Liberation Sans',sans-serif;color:#000;right:1737.69px;transform:scaleX(1.0370);transform-origin:100% 0;">Mar-26</span>
<span class="t" style="top:428px;font:700 16.3px/0 'DejaVu Sans Condensed','Liberation Sans',sans-serif;color:#000;right:1617.74px;transform:scaleX(0.9760);transform-origin:100% 0;">2026</span>
<span class="t" style="top:448px;font:700 16.3px/0 'DejaVu Sans Condensed','Liberation Sans',sans-serif;color:#000;right:1617.69px;transform:scaleX(1.0370);transform-origin:100% 0;">Apr-26</span>
<span class="t" style="top:428px;font:700 16.3px/0 'DejaVu Sans Condensed','Liberation Sans',sans-serif;color:#000;right:1497.74px;transform:scaleX(0.9760);transform-origin:100% 0;">2026</span>
<span class="t" style="top:448px;font:700 16.3px/0 'DejaVu Sans Condensed','Liberation Sans',sans-serif;color:#000;right:1497.69px;transform:scaleX(1.0370);transform-origin:100% 0;">May-26</span>
<span class="t" style="top:428px;font:700 16.3px/0 'DejaVu Sans Condensed','Liberation Sans',sans-serif;color:#000;right:1377.74px;transform:scaleX(0.9760);transform-origin:100% 0;">2026</span>
<span class="t" style="top:448px;font:700 16.3px/0 'DejaVu Sans Condensed','Liberation Sans',sans-serif;color:#000;right:1377.69px;transform:scaleX(1.0370);transform-origin:100% 0;">Jun-26</span>
<span class="t" style="top:428px;font:700 16.3px/0 'DejaVu Sans Condensed','Liberation Sans',sans-serif;color:#000;right:1257.74px;transform:scaleX(0.9760);transform-origin:100% 0;">2026</span>
<span class="t" style="top:448px;font:700 16.3px/0 'DejaVu Sans Condensed','Liberation Sans',sans-serif;color:#000;right:1257.69px;transform:scaleX(1.0370);transform-origin:100% 0;">Jul-26</span>
<span class="t" style="top:428px;font:700 16.3px/0 'DejaVu Sans Condensed','Liberation Sans',sans-serif;color:#000;right:1137.74px;transform:scaleX(0.9760);transform-origin:100% 0;">2026</span>
<span class="t" style="top:448px;font:700 16.3px/0 'DejaVu Sans Condensed','Liberation Sans',sans-serif;color:#000;right:1137.69px;transform:scaleX(1.0370);transform-origin:100% 0;">Aug-26</span>
<span class="t" style="top:428px;font:700 16.3px/0 'DejaVu Sans Condensed','Liberation Sans',sans-serif;color:#000;right:1017.74px;transform:scaleX(0.9760);transform-origin:100% 0;">2026</span>
<span class="t" style="top:448px;font:700 16.3px/0 'DejaVu Sans Condensed','Liberation Sans',sans-serif;color:#000;right:1017.69px;transform:scaleX(1.0370);transform-origin:100% 0;">Sep-26</span>
<span class="t" style="top:428px;font:700 16.3px/0 'DejaVu Sans Condensed','Liberation Sans',sans-serif;color:#000;right:897.74px;transform:scaleX(0.9760);transform-origin:100% 0;">2026</span>
<span class="t" style="top:448px;font:700 16.3px/0 'DejaVu Sans Condensed','Liberation Sans',sans-serif;color:#000;right:897.69px;transform:scaleX(1.0370);transform-origin:100% 0;">Oct-26</span>
<span class="t" style="top:428px;font:700 16.3px/0 'DejaVu Sans Condensed','Liberation Sans',sans-serif;color:#000;right:777.74px;transform:scaleX(0.9760);transform-origin:100% 0;">2026</span>
<span class="t" style="top:448px;font:700 16.3px/0 'DejaVu Sans Condensed','Liberation Sans',sans-serif;color:#000;right:777.69px;transform:scaleX(1.0370);transform-origin:100% 0;">Nov-26</span>
<span class="t" style="top:428px;font:700 16.3px/0 'DejaVu Sans Condensed','Liberation Sans',sans-serif;color:#000;right:657.74px;transform:scaleX(0.9760);transform-origin:100% 0;">2026</span>
<span class="t" style="top:448px;font:700 16.3px/0 'DejaVu Sans Condensed','Liberation Sans',sans-serif;color:#000;right:657.69px;transform:scaleX(1.0370);transform-origin:100% 0;">Dec-26</span>
<span class="t" style="top:428px;font:700 16.3px/0 'DejaVu Sans Condensed','Liberation Sans',sans-serif;color:#000;right:537.37px;transform:scaleX(0.9760);transform-origin:100% 0;">2027</span>
<span class="t" style="top:448px;font:700 16.3px/0 'DejaVu Sans Condensed','Liberation Sans',sans-serif;color:#000;right:537.29px;transform:scaleX(1.0370);transform-origin:100% 0;">Jan-27</span>
<span class="t" style="top:428px;font:700 16.3px/0 'DejaVu Sans Condensed','Liberation Sans',sans-serif;color:#000;right:417.37px;transform:scaleX(0.9760);transform-origin:100% 0;">2027</span>
<span class="t" style="top:448px;font:700 16.3px/0 'DejaVu Sans Condensed','Liberation Sans',sans-serif;color:#000;right:417.29px;transform:scaleX(1.0370);transform-origin:100% 0;">Feb-27</span>
<span class="t" style="top:428px;font:700 16.3px/0 'DejaVu Sans Condensed','Liberation Sans',sans-serif;color:#000;right:297.37px;transform:scaleX(0.9760);transform-origin:100% 0;">2027</span>
<span class="t" style="top:448px;font:700 16.3px/0 'DejaVu Sans Condensed','Liberation Sans',sans-serif;color:#000;right:297.29px;transform:scaleX(1.0370);transform-origin:100% 0;">Mar-27</span>
<span class="t" style="top:428px;font:700 16.3px/0 'DejaVu Sans Condensed','Liberation Sans',sans-serif;color:#000;right:177.37px;transform:scaleX(0.9760);transform-origin:100% 0;">2027</span>
<span class="t" style="top:448px;font:700 16.3px/0 'DejaVu Sans Condensed','Liberation Sans',sans-serif;color:#000;right:177.29px;transform:scaleX(1.0370);transform-origin:100% 0;">Apr-27</span>
<span class="t" style="top:428px;font:700 16.3px/0 'DejaVu Sans Condensed','Liberation Sans',sans-serif;color:#000;right:57.37px;transform:scaleX(0.9760);transform-origin:100% 0;">2027</span>
<span class="t" style="top:448px;font:700 16.3px/0 'DejaVu Sans Condensed','Liberation Sans',sans-serif;color:#000;right:57.29px;transform:scaleX(1.0370);transform-origin:100% 0;">May-27</span>
<span class="t" style="top:557px;font:400 16.3px/0 'DejaVu Sans Condensed','Liberation Sans',sans-serif;color:#1b1b1f;left:139.43px;transform:scaleX(0.9388);transform-origin:0 0;">Cash Receipts</span>
<span class="t" style="top:556px;font:400 14.2px/0 'DejaVu Sans Condensed','Liberation Sans',sans-serif;color:#1b1b1f;right:1981.71px;transform:scaleX(0.9850);transform-origin:100% 0;">5,956</span>
<span class="t" style="top:556px;font:400 14.2px/0 'DejaVu Sans Condensed','Liberation Sans',sans-serif;color:#1b1b1f;right:1861.67px;transform:scaleX(0.9850);transform-origin:100% 0;">16,300</span>
<span class="t" style="top:556px;font:400 14.2px/0 'DejaVu Sans Condensed','Liberation Sans',sans-serif;color:#1b1b1f;right:1741.80px;transform:scaleX(0.9850);transform-origin:100% 0;">30,234</span>
<span class="t" style="top:556px;font:400 14.2px/0 'DejaVu Sans Condensed','Liberation Sans',sans-serif;color:#1b1b1f;right:1621.80px;transform:scaleX(0.9850);transform-origin:100% 0;">39,834</span>
<span class="t" style="top:556px;font:400 14.2px/0 'DejaVu Sans Condensed','Liberation Sans',sans-serif;color:#1b1b1f;right:1501.80px;transform:scaleX(0.9850);transform-origin:100% 0;">52,864</span>
<span class="t" style="top:556px;font:400 14.2px/0 'DejaVu Sans Condensed','Liberation Sans',sans-serif;color:#1b1b1f;right:1381.50px;transform:scaleX(0.9850);transform-origin:100% 0;">62,543</span>
<span class="t" style="top:556px;font:400 14.2px/0 'DejaVu Sans Condensed','Liberation Sans',sans-serif;color:#1b1b1f;right:1261.43px;transform:scaleX(0.9850);transform-origin:100% 0;">76,317</span>
<span class="t" style="top:556px;font:400 14.2px/0 'DejaVu Sans Condensed','Liberation Sans',sans-serif;color:#1b1b1f;right:1141.35px;transform:scaleX(0.9850);transform-origin:100% 0;">86,741</span>
<span class="t" style="top:556px;font:400 14.2px/0 'DejaVu Sans Condensed','Liberation Sans',sans-serif;color:#1b1b1f;right:1021.71px;transform:scaleX(0.9850);transform-origin:100% 0;">96,606</span>
<span class="t" style="top:556px;font:400 14.2px/0 'DejaVu Sans Condensed','Liberation Sans',sans-serif;color:#1b1b1f;right:901.35px;transform:scaleX(0.9850);transform-origin:100% 0;">105,541</span>
<span class="t" style="top:556px;font:400 14.2px/0 'DejaVu Sans Condensed','Liberation Sans',sans-serif;color:#1b1b1f;right:781.67px;transform:scaleX(0.9850);transform-origin:100% 0;">102,190</span>
<span class="t" style="top:556px;font:400 14.2px/0 'DejaVu Sans Condensed','Liberation Sans',sans-serif;color:#1b1b1f;right:661.35px;transform:scaleX(0.9850);transform-origin:100% 0;">105,541</span>
<span class="t" style="top:556px;font:400 14.2px/0 'DejaVu Sans Condensed','Liberation Sans',sans-serif;color:#1b1b1f;right:541.65px;transform:scaleX(0.9850);transform-origin:100% 0;">118,178</span>
<span class="t" style="top:556px;font:400 14.2px/0 'DejaVu Sans Condensed','Liberation Sans',sans-serif;color:#1b1b1f;right:421.67px;transform:scaleX(0.9850);transform-origin:100% 0;">129,700</span>
<span class="t" style="top:556px;font:400 14.2px/0 'DejaVu Sans Condensed','Liberation Sans',sans-serif;color:#1b1b1f;right:301.43px;transform:scaleX(0.9850);transform-origin:100% 0;">155,057</span>
<span class="t" style="top:556px;font:400 14.2px/0 'DejaVu Sans Condensed','Liberation Sans',sans-serif;color:#1b1b1f;right:181.35px;transform:scaleX(0.9850);transform-origin:100% 0;">155,661</span>
<span class="t" style="top:556px;font:400 14.2px/0 'DejaVu Sans Condensed','Liberation Sans',sans-serif;color:#1b1b1f;right:61.71px;transform:scaleX(0.9850);transform-origin:100% 0;">171,546</span>
<span class="t" style="top:577px;font:400 16.3px/0 'DejaVu Sans Condensed','Liberation Sans',sans-serif;color:#1b1b1f;left:139.42px;transform:scaleX(0.9492);transform-origin:0 0;">Cash Payments</span>
<span class="t" style="top:576px;font:400 14.2px/0 'DejaVu Sans Condensed','Liberation Sans',sans-serif;color:#1b1b1f;right:1976.52px;transform:scaleX(0.9850);transform-origin:100% 0;">(23,942)</span>
<span class="t" style="top:576px;font:400 14.2px/0 'DejaVu Sans Condensed','Liberation Sans',sans-serif;color:#1b1b1f;right:1856.52px;transform:scaleX(0.9850);transform-origin:100% 0;">(44,787)</span>
<span class="t" style="top:576px;font:400 14.2px/0 'DejaVu Sans Condensed','Liberation Sans',sans-serif;color:#1b1b1f;right:1736.52px;transform:scaleX(0.9850);transform-origin:100% 0;">(52,460)</span>
<span class="t" style="top:576px;font:400 14.2px/0 'DejaVu Sans Condensed','Liberation Sans',sans-serif;color:#1b1b1f;right:1616.52px;transform:scaleX(0.9850);transform-origin:100% 0;">(52,750)</span>
<span class="t" style="top:576px;font:400 14.2px/0 'DejaVu Sans Condensed','Liberation Sans',sans-serif;color:#1b1b1f;right:1496.52px;transform:scaleX(0.9850);transform-origin:100% 0;">(57,423)</span>
<span class="t" style="top:576px;font:400 14.2px/0 'DejaVu Sans Condensed','Liberation Sans',sans-serif;color:#1b1b1f;right:1376.52px;transform:scaleX(0.9850);transform-origin:100% 0;">(59,183)</span>
<span class="t" style="top:576px;font:400 14.2px/0 'DejaVu Sans Condensed','Liberation Sans',sans-serif;color:#1b1b1f;right:1256.52px;transform:scaleX(0.9850);transform-origin:100% 0;">(63,915)</span>
<span class="t" style="top:576px;font:400 14.2px/0 'DejaVu Sans Condensed','Liberation Sans',sans-serif;color:#1b1b1f;right:1136.52px;transform:scaleX(0.9850);transform-origin:100% 0;">(66,396)</span>
<span class="t" style="top:576px;font:400 14.2px/0 'DejaVu Sans Condensed','Liberation Sans',sans-serif;color:#1b1b1f;right:1016.52px;transform:scaleX(0.9850);transform-origin:100% 0;">(68,832)</span>
<span class="t" style="top:576px;font:400 14.2px/0 'DejaVu Sans Condensed','Liberation Sans',sans-serif;color:#1b1b1f;right:896.52px;transform:scaleX(0.9850);transform-origin:100% 0;">(70,869)</span>
<span class="t" style="top:576px;font:400 14.2px/0 'DejaVu Sans Condensed','Liberation Sans',sans-serif;color:#1b1b1f;right:776.52px;transform:scaleX(0.9850);transform-origin:100% 0;">(69,279)</span>
<span class="t" style="top:576px;font:400 14.2px/0 'DejaVu Sans Condensed','Liberation Sans',sans-serif;color:#1b1b1f;right:656.52px;transform:scaleX(0.9850);transform-origin:100% 0;">(70,869)</span>
<span class="t" style="top:576px;font:400 14.2px/0 'DejaVu Sans Condensed','Liberation Sans',sans-serif;color:#1b1b1f;right:536.52px;transform:scaleX(0.9850);transform-origin:100% 0;">(83,796)</span>
<span class="t" style="top:576px;font:400 14.2px/0 'DejaVu Sans Condensed','Liberation Sans',sans-serif;color:#1b1b1f;right:416.52px;transform:scaleX(0.9850);transform-origin:100% 0;">(92,138)</span>
<span class="t" style="top:576px;font:400 14.2px/0 'DejaVu Sans Condensed','Liberation Sans',sans-serif;color:#1b1b1f;right:296.52px;transform:scaleX(0.9850);transform-origin:100% 0;">(102,077)</span>
<span class="t" style="top:576px;font:400 14.2px/0 'DejaVu Sans Condensed','Liberation Sans',sans-serif;color:#1b1b1f;right:176.52px;transform:scaleX(0.9850);transform-origin:100% 0;">(99,983)</span>
<span class="t" style="top:576px;font:400 14.2px/0 'DejaVu Sans Condensed','Liberation Sans',sans-serif;color:#1b1b1f;right:56.52px;transform:scaleX(0.9850);transform-origin:100% 0;">(104,972)</span>
<span class="t" style="top:597px;font:400 16.3px/0 'DejaVu Sans Condensed','Liberation Sans',sans-serif;color:#1b1b1f;left:138.83px;transform:scaleX(0.9528);transform-origin:0 0;">Interest Expense</span>
<span class="t" style="top:596px;font:400 14.2px/0 'DejaVu Sans Condensed','Liberation Sans',sans-serif;color:#1b1b1f;right:1976.52px;transform:scaleX(0.9850);transform-origin:100% 0;">(1,000)</span>
<span class="t" style="top:596px;font:400 14.2px/0 'DejaVu Sans Condensed','Liberation Sans',sans-serif;color:#1b1b1f;right:1856.52px;transform:scaleX(0.9850);transform-origin:100% 0;">(1,000)</span>
<span class="t" style="top:596px;font:400 14.2px/0 'DejaVu Sans Condensed','Liberation Sans',sans-serif;color:#1b1b1f;right:1736.52px;transform:scaleX(0.9850);transform-origin:100% 0;">(1,667)</span>
<span class="t" style="top:596px;font:400 14.2px/0 'DejaVu Sans Condensed','Liberation Sans',sans-serif;color:#1b1b1f;right:1616.52px;transform:scaleX(0.9850);transform-origin:100% 0;">(1,656)</span>
<span class="t" style="top:596px;font:400 14.2px/0 'DejaVu Sans Condensed','Liberation Sans',sans-serif;color:#1b1b1f;right:1496.52px;transform:scaleX(0.9850);transform-origin:100% 0;">(1,644)</span>
<span class="t" style="top:596px;font:400 14.2px/0 'DejaVu Sans Condensed','Liberation Sans',sans-serif;color:#1b1b1f;right:1376.52px;transform:scaleX(0.9850);transform-origin:100% 0;">(1,633)</span>
<span class="t" style="top:596px;font:400 14.2px/0 'DejaVu Sans Condensed','Liberation Sans',sans-serif;color:#1b1b1f;right:1256.52px;transform:scaleX(0.9850);transform-origin:100% 0;">(1,622)</span>
<span class="t" style="top:596px;font:400 14.2px/0 'DejaVu Sans Condensed','Liberation Sans',sans-serif;color:#1b1b1f;right:1136.52px;transform:scaleX(0.9850);transform-origin:100% 0;">(1,611)</span>
<span class="t" style="top:596px;font:400 14.2px/0 'DejaVu Sans Condensed','Liberation Sans',sans-serif;color:#1b1b1f;right:1016.52px;transform:scaleX(0.9850);transform-origin:100% 0;">(1,600)</span>
<span class="t" style="top:596px;font:400 14.2px/0 'DejaVu Sans Condensed','Liberation Sans',sans-serif;color:#1b1b1f;right:896.52px;transform:scaleX(0.9850);transform-origin:100% 0;">(1,589)</span>
<span class="t" style="top:596px;font:400 14.2px/0 'DejaVu Sans Condensed','Liberation Sans',sans-serif;color:#1b1b1f;right:776.52px;transform:scaleX(0.9850);transform-origin:100% 0;">(1,578)</span>
<span class="t" style="top:596px;font:400 14.2px/0 'DejaVu Sans Condensed','Liberation Sans',sans-serif;color:#1b1b1f;right:656.52px;transform:scaleX(0.9850);transform-origin:100% 0;">(1,567)</span>
<span class="t" style="top:596px;font:400 14.2px/0 'DejaVu Sans Condensed','Liberation Sans',sans-serif;color:#1b1b1f;right:536.52px;transform:scaleX(0.9850);transform-origin:100% 0;">(1,556)</span>
<span class="t" style="top:596px;font:400 14.2px/0 'DejaVu Sans Condensed','Liberation Sans',sans-serif;color:#1b1b1f;right:416.52px;transform:scaleX(0.9850);transform-origin:100% 0;">(1,534)</span>
<span class="t" style="top:596px;font:400 14.2px/0 'DejaVu Sans Condensed','Liberation Sans',sans-serif;color:#1b1b1f;right:296.52px;transform:scaleX(0.9850);transform-origin:100% 0;">(1,512)</span>
<span class="t" style="top:596px;font:400 14.2px/0 'DejaVu Sans Condensed','Liberation Sans',sans-serif;color:#1b1b1f;right:176.52px;transform:scaleX(0.9850);transform-origin:100% 0;">(1,491)</span>
<span class="t" style="top:596px;font:400 14.2px/0 'DejaVu Sans Condensed','Liberation Sans',sans-serif;color:#1b1b1f;right:56.52px;transform:scaleX(0.9850);transform-origin:100% 0;">(1,469)</span>
<span class="t" style="top:617px;font:400 16.3px/0 'DejaVu Sans Condensed','Liberation Sans',sans-serif;color:#1b1b1f;left:139.40px;transform:scaleX(0.9720);transform-origin:0 0;">Corporate Tax Expense</span>
<span class="t" style="top:616px;font:400 14.2px/0 'DejaVu Sans Condensed','Liberation Sans',sans-serif;color:#1b1b1f;right:1982.09px;transform:scaleX(0.9850);transform-origin:100% 0;">-</span>
<span class="t" style="top:616px;font:400 14.2px/0 'DejaVu Sans Condensed','Liberation Sans',sans-serif;color:#1b1b1f;right:1862.09px;transform:scaleX(0.9850);transform-origin:100% 0;">-</span>
<span class="t" style="top:616px;font:400 14.2px/0 'DejaVu Sans Condensed','Liberation Sans',sans-serif;color:#1b1b1f;right:1742.09px;transform:scaleX(0.9850);transform-origin:100% 0;">-</span>
<span class="t" style="top:616px;font:400 14.2px/0 'DejaVu Sans Condensed','Liberation Sans',sans-serif;color:#1b1b1f;right:1622.09px;transform:scaleX(0.9850);transform-origin:100% 0;">-</span>
<span class="t" style="top:616px;font:400 14.2px/0 'DejaVu Sans Condensed','Liberation Sans',sans-serif;color:#1b1b1f;right:1502.09px;transform:scaleX(0.9850);transform-origin:100% 0;">-</span>
<span class="t" style="top:616px;font:400 14.2px/0 'DejaVu Sans Condensed','Liberation Sans',sans-serif;color:#1b1b1f;right:1376.52px;transform:scaleX(0.9850);transform-origin:100% 0;">(724)</span>
<span class="t" style="top:616px;font:400 14.2px/0 'DejaVu Sans Condensed','Liberation Sans',sans-serif;color:#1b1b1f;right:1256.52px;transform:scaleX(0.9850);transform-origin:100% 0;">(1,687)</span>
<span class="t" style="top:616px;font:400 14.2px/0 'DejaVu Sans Condensed','Liberation Sans',sans-serif;color:#1b1b1f;right:1136.52px;transform:scaleX(0.9850);transform-origin:100% 0;">(2,650)</span>
<span class="t" style="top:616px;font:400 14.2px/0 'DejaVu Sans Condensed','Liberation Sans',sans-serif;color:#1b1b1f;right:1016.52px;transform:scaleX(0.9850);transform-origin:100% 0;">(3,613)</span>
<span class="t" style="top:616px;font:400 14.2px/0 'DejaVu Sans Condensed','Liberation Sans',sans-serif;color:#1b1b1f;right:896.52px;transform:scaleX(0.9850);transform-origin:100% 0;">(3,614)</span>
<span class="t" style="top:616px;font:400 14.2px/0 'DejaVu Sans Condensed','Liberation Sans',sans-serif;color:#1b1b1f;right:776.52px;transform:scaleX(0.9850);transform-origin:100% 0;">(3,616)</span>
<span class="t" style="top:616px;font:400 14.2px/0 'DejaVu Sans Condensed','Liberation Sans',sans-serif;color:#1b1b1f;right:656.52px;transform:scaleX(0.9850);transform-origin:100% 0;">(3,617)</span>
<span class="t" style="top:616px;font:400 14.2px/0 'DejaVu Sans Condensed','Liberation Sans',sans-serif;color:#1b1b1f;right:536.52px;transform:scaleX(0.9850);transform-origin:100% 0;">(8,908)</span>
<span class="t" style="top:616px;font:400 14.2px/0 'DejaVu Sans Condensed','Liberation Sans',sans-serif;color:#1b1b1f;right:416.52px;transform:scaleX(0.9850);transform-origin:100% 0;">(10,895)</span>
<span class="t" style="top:616px;font:400 14.2px/0 'DejaVu Sans Condensed','Liberation Sans',sans-serif;color:#1b1b1f;right:296.52px;transform:scaleX(0.9850);transform-origin:100% 0;">(12,882)</span>
<span class="t" style="top:616px;font:400 14.2px/0 'DejaVu Sans Condensed','Liberation Sans',sans-serif;color:#1b1b1f;right:176.52px;transform:scaleX(0.9850);transform-origin:100% 0;">(14,869)</span>
<span class="t" style="top:616px;font:400 14.2px/0 'DejaVu Sans Condensed','Liberation Sans',sans-serif;color:#1b1b1f;right:56.52px;transform:scaleX(0.9850);transform-origin:100% 0;">(16,857)</span>
<span class="t" style="top:637px;font:700 16.3px/0 'DejaVu Serif Condensed','DejaVu Serif','Liberation Serif',serif;color:#fff;left:146.47px;transform:scaleX(0.9824);transform-origin:0 0;">Net Cash Flow from Operating Activities</span>
<span class="t" style="top:637px;font:700 16.3px/0 'DejaVu Serif Condensed','DejaVu Serif','Liberation Serif',serif;color:#fff;right:1976.81px;">(18,985)</span>
<span class="t" style="top:637px;font:700 16.3px/0 'DejaVu Serif Condensed','DejaVu Serif','Liberation Serif',serif;color:#fff;right:1856.81px;">(29,486)</span>
<span class="t" style="top:637px;font:700 16.3px/0 'DejaVu Serif Condensed','DejaVu Serif','Liberation Serif',serif;color:#fff;right:1736.81px;">(23,892)</span>
<span class="t" style="top:637px;font:700 16.3px/0 'DejaVu Serif Condensed','DejaVu Serif','Liberation Serif',serif;color:#fff;right:1616.81px;">(14,571)</span>
<span class="t" style="top:637px;font:700 16.3px/0 'DejaVu Serif Condensed','DejaVu Serif','Liberation Serif',serif;color:#fff;right:1496.81px;">(6,203)</span>
<span class="t" style="top:637px;font:700 16.3px/0 'DejaVu Serif Condensed','DejaVu Serif','Liberation Serif',serif;color:#fff;right:1383.87px;">1,003</span>
<span class="t" style="top:637px;font:700 16.3px/0 'DejaVu Serif Condensed','DejaVu Serif','Liberation Serif',serif;color:#fff;right:1263.87px;">9,093</span>
<span class="t" style="top:637px;font:700 16.3px/0 'DejaVu Serif Condensed','DejaVu Serif','Liberation Serif',serif;color:#fff;right:1144.20px;">16,084</span>
<span class="t" style="top:637px;font:700 16.3px/0 'DejaVu Serif Condensed','DejaVu Serif','Liberation Serif',serif;color:#fff;right:1023.34px;">22,561</span>
<span class="t" style="top:637px;font:700 16.3px/0 'DejaVu Serif Condensed','DejaVu Serif','Liberation Serif',serif;color:#fff;right:904.02px;">29,468</span>
<span class="t" style="top:637px;font:700 16.3px/0 'DejaVu Serif Condensed','DejaVu Serif','Liberation Serif',serif;color:#fff;right:784.02px;">27,718</span>
<span class="t" style="top:637px;font:700 16.3px/0 'DejaVu Serif Condensed','DejaVu Serif','Liberation Serif',serif;color:#fff;right:664.02px;">29,488</span>
<span class="t" style="top:637px;font:700 16.3px/0 'DejaVu Serif Condensed','DejaVu Serif','Liberation Serif',serif;color:#fff;right:543.88px;">23,919</span>
<span class="t" style="top:637px;font:700 16.3px/0 'DejaVu Serif Condensed','DejaVu Serif','Liberation Serif',serif;color:#fff;right:423.87px;">25,133</span>
<span class="t" style="top:637px;font:700 16.3px/0 'DejaVu Serif Condensed','DejaVu Serif','Liberation Serif',serif;color:#fff;right:304.02px;">38,586</span>
<span class="t" style="top:637px;font:700 16.3px/0 'DejaVu Serif Condensed','DejaVu Serif','Liberation Serif',serif;color:#fff;right:184.02px;">39,318</span>
<span class="t" style="top:637px;font:700 16.3px/0 'DejaVu Serif Condensed','DejaVu Serif','Liberation Serif',serif;color:#fff;right:63.88px;">48,249</span>
<span class="t" style="top:701px;font:400 16.3px/0 'DejaVu Sans Condensed','Liberation Sans',sans-serif;color:#1b1b1f;left:139.42px;transform:scaleX(0.9461);transform-origin:0 0;">Capital Expenditure</span>
<span class="t" style="top:700px;font:400 14.2px/0 'DejaVu Sans Condensed','Liberation Sans',sans-serif;color:#1b1b1f;right:1976.52px;transform:scaleX(0.9850);transform-origin:100% 0;">(24,333)</span>
<span class="t" style="top:700px;font:400 14.2px/0 'DejaVu Sans Condensed','Liberation Sans',sans-serif;color:#1b1b1f;right:1856.52px;transform:scaleX(0.9850);transform-origin:100% 0;">(35,000)</span>
<span class="t" style="top:700px;font:400 14.2px/0 'DejaVu Sans Condensed','Liberation Sans',sans-serif;color:#1b1b1f;right:1736.52px;transform:scaleX(0.9850);transform-origin:100% 0;">(30,333)</span>
<span class="t" style="top:700px;font:400 14.2px/0 'DejaVu Sans Condensed','Liberation Sans',sans-serif;color:#1b1b1f;right:1616.52px;transform:scaleX(0.9850);transform-origin:100% 0;">(18,000)</span>
<span class="t" style="top:700px;font:400 14.2px/0 'DejaVu Sans Condensed','Liberation Sans',sans-serif;color:#1b1b1f;right:1496.52px;transform:scaleX(0.9850);transform-origin:100% 0;">(6,333)</span>
<span class="t" style="top:700px;font:400 14.2px/0 'DejaVu Sans Condensed','Liberation Sans',sans-serif;color:#1b1b1f;right:1376.52px;transform:scaleX(0.9850);transform-origin:100% 0;">(3,000)</span>
<span class="t" style="top:700px;font:400 14.2px/0 'DejaVu Sans Condensed','Liberation Sans',sans-serif;color:#1b1b1f;right:1262.09px;transform:scaleX(0.9850);transform-origin:100% 0;">-</span>
<span class="t" style="top:700px;font:400 14.2px/0 'DejaVu Sans Condensed','Liberation Sans',sans-serif;color:#1b1b1f;right:1142.09px;transform:scaleX(0.9850);transform-origin:100% 0;">-</span>
<span class="t" style="top:700px;font:400 14.2px/0 'DejaVu Sans Condensed','Liberation Sans',sans-serif;color:#1b1b1f;right:1022.09px;transform:scaleX(0.9850);transform-origin:100% 0;">-</span>
<span class="t" style="top:700px;font:400 14.2px/0 'DejaVu Sans Condensed','Liberation Sans',sans-serif;color:#1b1b1f;right:902.09px;transform:scaleX(0.9850);transform-origin:100% 0;">-</span>
<span class="t" style="top:700px;font:400 14.2px/0 'DejaVu Sans Condensed','Liberation Sans',sans-serif;color:#1b1b1f;right:782.09px;transform:scaleX(0.9850);transform-origin:100% 0;">-</span>
<span class="t" style="top:700px;font:400 14.2px/0 'DejaVu Sans Condensed','Liberation Sans',sans-serif;color:#1b1b1f;right:662.09px;transform:scaleX(0.9850);transform-origin:100% 0;">-</span>
<span class="t" style="top:700px;font:400 14.2px/0 'DejaVu Sans Condensed','Liberation Sans',sans-serif;color:#1b1b1f;right:542.09px;transform:scaleX(0.9850);transform-origin:100% 0;">-</span>
<span class="t" style="top:700px;font:400 14.2px/0 'DejaVu Sans Condensed','Liberation Sans',sans-serif;color:#1b1b1f;right:422.09px;transform:scaleX(0.9850);transform-origin:100% 0;">-</span>
<span class="t" style="top:700px;font:400 14.2px/0 'DejaVu Sans Condensed','Liberation Sans',sans-serif;color:#1b1b1f;right:302.09px;transform:scaleX(0.9850);transform-origin:100% 0;">-</span>
<span class="t" style="top:700px;font:400 14.2px/0 'DejaVu Sans Condensed','Liberation Sans',sans-serif;color:#1b1b1f;right:182.09px;transform:scaleX(0.9850);transform-origin:100% 0;">-</span>
<span class="t" style="top:700px;font:400 14.2px/0 'DejaVu Sans Condensed','Liberation Sans',sans-serif;color:#1b1b1f;right:62.09px;transform:scaleX(0.9850);transform-origin:100% 0;">-</span>
<span class="t" style="top:725px;font:700 16.3px/0 'DejaVu Serif Condensed','DejaVu Serif','Liberation Serif',serif;color:#fff;left:146.47px;transform:scaleX(0.9849);transform-origin:0 0;">Net Cash Flow from Investing Activities</span>
<span class="t" style="top:725px;font:700 16.3px/0 'DejaVu Serif Condensed','DejaVu Serif','Liberation Serif',serif;color:#fff;right:1976.81px;">(24,333)</span>
<span class="t" style="top:725px;font:700 16.3px/0 'DejaVu Serif Condensed','DejaVu Serif','Liberation Serif',serif;color:#fff;right:1856.81px;">(35,000)</span>
<span class="t" style="top:725px;font:700 16.3px/0 'DejaVu Serif Condensed','DejaVu Serif','Liberation Serif',serif;color:#fff;right:1736.81px;">(30,333)</span>
<span class="t" style="top:725px;font:700 16.3px/0 'DejaVu Serif Condensed','DejaVu Serif','Liberation Serif',serif;color:#fff;right:1616.81px;">(18,000)</span>
<span class="t" style="top:725px;font:700 16.3px/0 'DejaVu Serif Condensed','DejaVu Serif','Liberation Serif',serif;color:#fff;right:1496.81px;">(6,333)</span>
<span class="t" style="top:725px;font:700 16.3px/0 'DejaVu Serif Condensed','DejaVu Serif','Liberation Serif',serif;color:#fff;right:1376.81px;">(3,000)</span>
<span class="t" style="top:725px;font:400 16.3px/0 'DejaVu Serif Condensed','DejaVu Serif','Liberation Serif',serif;color:#fff;right:1264.16px;">-</span>
<span class="t" style="top:725px;font:400 16.3px/0 'DejaVu Serif Condensed','DejaVu Serif','Liberation Serif',serif;color:#fff;right:1144.16px;">-</span>
<span class="t" style="top:725px;font:400 16.3px/0 'DejaVu Serif Condensed','DejaVu Serif','Liberation Serif',serif;color:#fff;right:1024.16px;">-</span>
<span class="t" style="top:725px;font:400 16.3px/0 'DejaVu Serif Condensed','DejaVu Serif','Liberation Serif',serif;color:#fff;right:904.16px;">-</span>
<span class="t" style="top:725px;font:400 16.3px/0 'DejaVu Serif Condensed','DejaVu Serif','Liberation Serif',serif;color:#fff;right:784.16px;">-</span>
<span class="t" style="top:725px;font:400 16.3px/0 'DejaVu Serif Condensed','DejaVu Serif','Liberation Serif',serif;color:#fff;right:664.16px;">-</span>
<span class="t" style="top:725px;font:400 16.3px/0 'DejaVu Serif Condensed','DejaVu Serif','Liberation Serif',serif;color:#fff;right:544.16px;">-</span>
<span class="t" style="top:725px;font:400 16.3px/0 'DejaVu Serif Condensed','DejaVu Serif','Liberation Serif',serif;color:#fff;right:424.16px;">-</span>
<span class="t" style="top:725px;font:400 16.3px/0 'DejaVu Serif Condensed','DejaVu Serif','Liberation Serif',serif;color:#fff;right:304.16px;">-</span>
<span class="t" style="top:725px;font:400 16.3px/0 'DejaVu Serif Condensed','DejaVu Serif','Liberation Serif',serif;color:#fff;right:184.16px;">-</span>
<span class="t" style="top:725px;font:400 16.3px/0 'DejaVu Serif Condensed','DejaVu Serif','Liberation Serif',serif;color:#fff;right:64.16px;">-</span>
<span class="t" style="top:789px;font:400 16.3px/0 'DejaVu Sans Condensed','Liberation Sans',sans-serif;color:#1b1b1f;left:138.82px;transform:scaleX(0.9649);transform-origin:0 0;">Debts Drawdowns</span>
<span class="t" style="top:788px;font:400 14.2px/0 'DejaVu Sans Condensed','Liberation Sans',sans-serif;color:#1b1b1f;right:1981.67px;transform:scaleX(0.9850);transform-origin:100% 0;">200,000</span>
<span class="t" style="top:788px;font:400 14.2px/0 'DejaVu Sans Condensed','Liberation Sans',sans-serif;color:#1b1b1f;right:1862.09px;transform:scaleX(0.9850);transform-origin:100% 0;">-</span>
<span class="t" style="top:788px;font:400 14.2px/0 'DejaVu Sans Condensed','Liberation Sans',sans-serif;color:#1b1b1f;right:1741.67px;transform:scaleX(0.9850);transform-origin:100% 0;">100,000</span>
<span class="t" style="top:788px;font:400 14.2px/0 'DejaVu Sans Condensed','Liberation Sans',sans-serif;color:#1b1b1f;right:1622.09px;transform:scaleX(0.9850);transform-origin:100% 0;">-</span>
<span class="t" style="top:788px;font:400 14.2px/0 'DejaVu Sans Condensed','Liberation Sans',sans-serif;color:#1b1b1f;right:1502.09px;transform:scaleX(0.9850);transform-origin:100% 0;">-</span>
<span class="t" style="top:788px;font:400 14.2px/0 'DejaVu Sans Condensed','Liberation Sans',sans-serif;color:#1b1b1f;right:1382.09px;transform:scaleX(0.9850);transform-origin:100% 0;">-</span>
<span class="t" style="top:788px;font:400 14.2px/0 'DejaVu Sans Condensed','Liberation Sans',sans-serif;color:#1b1b1f;right:1262.09px;transform:scaleX(0.9850);transform-origin:100% 0;">-</span>
<span class="t" style="top:788px;font:400 14.2px/0 'DejaVu Sans Condensed','Liberation Sans',sans-serif;color:#1b1b1f;right:1142.09px;transform:scaleX(0.9850);transform-origin:100% 0;">-</span>
<span class="t" style="top:788px;font:400 14.2px/0 'DejaVu Sans Condensed','Liberation Sans',sans-serif;color:#1b1b1f;right:1022.09px;transform:scaleX(0.9850);transform-origin:100% 0;">-</span>
<span class="t" style="top:788px;font:400 14.2px/0 'DejaVu Sans Condensed','Liberation Sans',sans-serif;color:#1b1b1f;right:902.09px;transform:scaleX(0.9850);transform-origin:100% 0;">-</span>
<span class="t" style="top:788px;font:400 14.2px/0 'DejaVu Sans Condensed','Liberation Sans',sans-serif;color:#1b1b1f;right:782.09px;transform:scaleX(0.9850);transform-origin:100% 0;">-</span>
<span class="t" style="top:788px;font:400 14.2px/0 'DejaVu Sans Condensed','Liberation Sans',sans-serif;color:#1b1b1f;right:662.09px;transform:scaleX(0.9850);transform-origin:100% 0;">-</span>
<span class="t" style="top:788px;font:400 14.2px/0 'DejaVu Sans Condensed','Liberation Sans',sans-serif;color:#1b1b1f;right:542.09px;transform:scaleX(0.9850);transform-origin:100% 0;">-</span>
<span class="t" style="top:788px;font:400 14.2px/0 'DejaVu Sans Condensed','Liberation Sans',sans-serif;color:#1b1b1f;right:422.09px;transform:scaleX(0.9850);transform-origin:100% 0;">-</span>
<span class="t" style="top:788px;font:400 14.2px/0 'DejaVu Sans Condensed','Liberation Sans',sans-serif;color:#1b1b1f;right:302.09px;transform:scaleX(0.9850);transform-origin:100% 0;">-</span>
<span class="t" style="top:788px;font:400 14.2px/0 'DejaVu Sans Condensed','Liberation Sans',sans-serif;color:#1b1b1f;right:182.09px;transform:scaleX(0.9850);transform-origin:100% 0;">-</span>
<span class="t" style="top:788px;font:400 14.2px/0 'DejaVu Sans Condensed','Liberation Sans',sans-serif;color:#1b1b1f;right:62.09px;transform:scaleX(0.9850);transform-origin:100% 0;">-</span>
<span class="t" style="top:809px;font:400 16.3px/0 'DejaVu Sans Condensed','Liberation Sans',sans-serif;color:#1b1b1f;left:138.85px;transform:scaleX(0.9450);transform-origin:0 0;">Debts Repayments</span>
<span class="t" style="top:808px;font:400 14.2px/0 'DejaVu Sans Condensed','Liberation Sans',sans-serif;color:#1b1b1f;right:1982.09px;transform:scaleX(0.9850);transform-origin:100% 0;">-</span>
<span class="t" style="top:808px;font:400 14.2px/0 'DejaVu Sans Condensed','Liberation Sans',sans-serif;color:#1b1b1f;right:1862.09px;transform:scaleX(0.9850);transform-origin:100% 0;">-</span>
<span class="t" style="top:808px;font:400 14.2px/0 'DejaVu Sans Condensed','Liberation Sans',sans-serif;color:#1b1b1f;right:1736.52px;transform:scaleX(0.9850);transform-origin:100% 0;">(1,667)</span>
<span class="t" style="top:808px;font:400 14.2px/0 'DejaVu Sans Condensed','Liberation Sans',sans-serif;color:#1b1b1f;right:1616.52px;transform:scaleX(0.9850);transform-origin:100% 0;">(1,667)</span>
<span class="t" style="top:808px;font:400 14.2px/0 'DejaVu Sans Condensed','Liberation Sans',sans-serif;color:#1b1b1f;right:1496.52px;transform:scaleX(0.9850);transform-origin:100% 0;">(1,667)</span>
<span class="t" style="top:808px;font:400 14.2px/0 'DejaVu Sans Condensed','Liberation Sans',sans-serif;color:#1b1b1f;right:1376.52px;transform:scaleX(0.9850);transform-origin:100% 0;">(1,667)</span>
<span class="t" style="top:808px;font:400 14.2px/0 'DejaVu Sans Condensed','Liberation Sans',sans-serif;color:#1b1b1f;right:1256.52px;transform:scaleX(0.9850);transform-origin:100% 0;">(1,667)</span>
<span class="t" style="top:808px;font:400 14.2px/0 'DejaVu Sans Condensed','Liberation Sans',sans-serif;color:#1b1b1f;right:1136.52px;transform:scaleX(0.9850);transform-origin:100% 0;">(1,667)</span>
<span class="t" style="top:808px;font:400 14.2px/0 'DejaVu Sans Condensed','Liberation Sans',sans-serif;color:#1b1b1f;right:1016.52px;transform:scaleX(0.9850);transform-origin:100% 0;">(1,667)</span>
<span class="t" style="top:808px;font:400 14.2px/0 'DejaVu Sans Condensed','Liberation Sans',sans-serif;color:#1b1b1f;right:896.52px;transform:scaleX(0.9850);transform-origin:100% 0;">(1,667)</span>
<span class="t" style="top:808px;font:400 14.2px/0 'DejaVu Sans Condensed','Liberation Sans',sans-serif;color:#1b1b1f;right:776.52px;transform:scaleX(0.9850);transform-origin:100% 0;">(1,667)</span>
<span class="t" style="top:808px;font:400 14.2px/0 'DejaVu Sans Condensed','Liberation Sans',sans-serif;color:#1b1b1f;right:656.52px;transform:scaleX(0.9850);transform-origin:100% 0;">(1,667)</span>
<span class="t" style="top:808px;font:400 14.2px/0 'DejaVu Sans Condensed','Liberation Sans',sans-serif;color:#1b1b1f;right:536.52px;transform:scaleX(0.9850);transform-origin:100% 0;">(3,770)</span>
<span class="t" style="top:808px;font:400 14.2px/0 'DejaVu Sans Condensed','Liberation Sans',sans-serif;color:#1b1b1f;right:416.52px;transform:scaleX(0.9850);transform-origin:100% 0;">(3,780)</span>
<span class="t" style="top:808px;font:400 14.2px/0 'DejaVu Sans Condensed','Liberation Sans',sans-serif;color:#1b1b1f;right:296.52px;transform:scaleX(0.9850);transform-origin:100% 0;">(3,791)</span>
<span class="t" style="top:808px;font:400 14.2px/0 'DejaVu Sans Condensed','Liberation Sans',sans-serif;color:#1b1b1f;right:176.52px;transform:scaleX(0.9850);transform-origin:100% 0;">(3,801)</span>
<span class="t" style="top:808px;font:400 14.2px/0 'DejaVu Sans Condensed','Liberation Sans',sans-serif;color:#1b1b1f;right:56.52px;transform:scaleX(0.9850);transform-origin:100% 0;">(3,812)</span>
<span class="t" style="top:829px;font:400 16.3px/0 'DejaVu Sans Condensed','Liberation Sans',sans-serif;color:#1b1b1f;left:138.82px;transform:scaleX(0.9607);transform-origin:0 0;">Equity Raisings</span>
<span class="t" style="top:828px;font:400 14.2px/0 'DejaVu Sans Condensed','Liberation Sans',sans-serif;color:#1b1b1f;right:1981.67px;transform:scaleX(0.9850);transform-origin:100% 0;">700,000</span>
<span class="t" style="top:828px;font:400 14.2px/0 'DejaVu Sans Condensed','Liberation Sans',sans-serif;color:#1b1b1f;right:1862.09px;transform:scaleX(0.9850);transform-origin:100% 0;">-</span>
<span class="t" style="top:828px;font:400 14.2px/0 'DejaVu Sans Condensed','Liberation Sans',sans-serif;color:#1b1b1f;right:1742.09px;transform:scaleX(0.9850);transform-origin:100% 0;">-</span>
<span class="t" style="top:828px;font:400 14.2px/0 'DejaVu Sans Condensed','Liberation Sans',sans-serif;color:#1b1b1f;right:1622.09px;transform:scaleX(0.9850);transform-origin:100% 0;">-</span>
<span class="t" style="top:828px;font:400 14.2px/0 'DejaVu Sans Condensed','Liberation Sans',sans-serif;color:#1b1b1f;right:1502.09px;transform:scaleX(0.9850);transform-origin:100% 0;">-</span>
<span class="t" style="top:828px;font:400 14.2px/0 'DejaVu Sans Condensed','Liberation Sans',sans-serif;color:#1b1b1f;right:1382.09px;transform:scaleX(0.9850);transform-origin:100% 0;">-</span>
<span class="t" style="top:828px;font:400 14.2px/0 'DejaVu Sans Condensed','Liberation Sans',sans-serif;color:#1b1b1f;right:1262.09px;transform:scaleX(0.9850);transform-origin:100% 0;">-</span>
<span class="t" style="top:828px;font:400 14.2px/0 'DejaVu Sans Condensed','Liberation Sans',sans-serif;color:#1b1b1f;right:1142.09px;transform:scaleX(0.9850);transform-origin:100% 0;">-</span>
<span class="t" style="top:828px;font:400 14.2px/0 'DejaVu Sans Condensed','Liberation Sans',sans-serif;color:#1b1b1f;right:1022.09px;transform:scaleX(0.9850);transform-origin:100% 0;">-</span>
<span class="t" style="top:828px;font:400 14.2px/0 'DejaVu Sans Condensed','Liberation Sans',sans-serif;color:#1b1b1f;right:902.09px;transform:scaleX(0.9850);transform-origin:100% 0;">-</span>
<span class="t" style="top:828px;font:400 14.2px/0 'DejaVu Sans Condensed','Liberation Sans',sans-serif;color:#1b1b1f;right:782.09px;transform:scaleX(0.9850);transform-origin:100% 0;">-</span>
<span class="t" style="top:828px;font:400 14.2px/0 'DejaVu Sans Condensed','Liberation Sans',sans-serif;color:#1b1b1f;right:662.09px;transform:scaleX(0.9850);transform-origin:100% 0;">-</span>
<span class="t" style="top:828px;font:400 14.2px/0 'DejaVu Sans Condensed','Liberation Sans',sans-serif;color:#1b1b1f;right:542.09px;transform:scaleX(0.9850);transform-origin:100% 0;">-</span>
<span class="t" style="top:828px;font:400 14.2px/0 'DejaVu Sans Condensed','Liberation Sans',sans-serif;color:#1b1b1f;right:422.09px;transform:scaleX(0.9850);transform-origin:100% 0;">-</span>
<span class="t" style="top:828px;font:400 14.2px/0 'DejaVu Sans Condensed','Liberation Sans',sans-serif;color:#1b1b1f;right:302.09px;transform:scaleX(0.9850);transform-origin:100% 0;">-</span>
<span class="t" style="top:828px;font:400 14.2px/0 'DejaVu Sans Condensed','Liberation Sans',sans-serif;color:#1b1b1f;right:182.09px;transform:scaleX(0.9850);transform-origin:100% 0;">-</span>
<span class="t" style="top:828px;font:400 14.2px/0 'DejaVu Sans Condensed','Liberation Sans',sans-serif;color:#1b1b1f;right:62.09px;transform:scaleX(0.9850);transform-origin:100% 0;">-</span>
<span class="t" style="top:849px;font:400 16.3px/0 'DejaVu Sans Condensed','Liberation Sans',sans-serif;color:#1b1b1f;left:138.85px;transform:scaleX(0.9416);transform-origin:0 0;">Equity Buybacks</span>
<span class="t" style="top:848px;font:400 14.2px/0 'DejaVu Sans Condensed','Liberation Sans',sans-serif;color:#1b1b1f;right:1982.09px;transform:scaleX(0.9850);transform-origin:100% 0;">-</span>
<span class="t" style="top:848px;font:400 14.2px/0 'DejaVu Sans Condensed','Liberation Sans',sans-serif;color:#1b1b1f;right:1862.09px;transform:scaleX(0.9850);transform-origin:100% 0;">-</span>
<span class="t" style="top:848px;font:400 14.2px/0 'DejaVu Sans Condensed','Liberation Sans',sans-serif;color:#1b1b1f;right:1742.09px;transform:scaleX(0.9850);transform-origin:100% 0;">-</span>
<span class="t" style="top:848px;font:400 14.2px/0 'DejaVu Sans Condensed','Liberation Sans',sans-serif;color:#1b1b1f;right:1622.09px;transform:scaleX(0.9850);transform-origin:100% 0;">-</span>
<span class="t" style="top:848px;font:400 14.2px/0 'DejaVu Sans Condensed','Liberation Sans',sans-serif;color:#1b1b1f;right:1502.09px;transform:scaleX(0.9850);transform-origin:100% 0;">-</span>
<span class="t" style="top:848px;font:400 14.2px/0 'DejaVu Sans Condensed','Liberation Sans',sans-serif;color:#1b1b1f;right:1382.09px;transform:scaleX(0.9850);transform-origin:100% 0;">-</span>
<span class="t" style="top:848px;font:400 14.2px/0 'DejaVu Sans Condensed','Liberation Sans',sans-serif;color:#1b1b1f;right:1262.09px;transform:scaleX(0.9850);transform-origin:100% 0;">-</span>
<span class="t" style="top:848px;font:400 14.2px/0 'DejaVu Sans Condensed','Liberation Sans',sans-serif;color:#1b1b1f;right:1142.09px;transform:scaleX(0.9850);transform-origin:100% 0;">-</span>
<span class="t" style="top:848px;font:400 14.2px/0 'DejaVu Sans Condensed','Liberation Sans',sans-serif;color:#1b1b1f;right:1022.09px;transform:scaleX(0.9850);transform-origin:100% 0;">-</span>
<span class="t" style="top:848px;font:400 14.2px/0 'DejaVu Sans Condensed','Liberation Sans',sans-serif;color:#1b1b1f;right:902.09px;transform:scaleX(0.9850);transform-origin:100% 0;">-</span>
<span class="t" style="top:848px;font:400 14.2px/0 'DejaVu Sans Condensed','Liberation Sans',sans-serif;color:#1b1b1f;right:782.09px;transform:scaleX(0.9850);transform-origin:100% 0;">-</span>
<span class="t" style="top:848px;font:400 14.2px/0 'DejaVu Sans Condensed','Liberation Sans',sans-serif;color:#1b1b1f;right:662.09px;transform:scaleX(0.9850);transform-origin:100% 0;">-</span>
<span class="t" style="top:848px;font:400 14.2px/0 'DejaVu Sans Condensed','Liberation Sans',sans-serif;color:#1b1b1f;right:542.09px;transform:scaleX(0.9850);transform-origin:100% 0;">-</span>
<span class="t" style="top:848px;font:400 14.2px/0 'DejaVu Sans Condensed','Liberation Sans',sans-serif;color:#1b1b1f;right:422.09px;transform:scaleX(0.9850);transform-origin:100% 0;">-</span>
<span class="t" style="top:848px;font:400 14.2px/0 'DejaVu Sans Condensed','Liberation Sans',sans-serif;color:#1b1b1f;right:302.09px;transform:scaleX(0.9850);transform-origin:100% 0;">-</span>
<span class="t" style="top:848px;font:400 14.2px/0 'DejaVu Sans Condensed','Liberation Sans',sans-serif;color:#1b1b1f;right:182.09px;transform:scaleX(0.9850);transform-origin:100% 0;">-</span>
<span class="t" style="top:848px;font:400 14.2px/0 'DejaVu Sans Condensed','Liberation Sans',sans-serif;color:#1b1b1f;right:62.09px;transform:scaleX(0.9850);transform-origin:100% 0;">-</span>
<span class="t" style="top:869px;font:400 16.3px/0 'DejaVu Sans Condensed','Liberation Sans',sans-serif;color:#1b1b1f;left:138.80px;transform:scaleX(0.9747);transform-origin:0 0;">Dividends Paid</span>
<span class="t" style="top:868px;font:400 14.2px/0 'DejaVu Sans Condensed','Liberation Sans',sans-serif;color:#1b1b1f;right:1982.09px;transform:scaleX(0.9850);transform-origin:100% 0;">-</span>
<span class="t" style="top:868px;font:400 14.2px/0 'DejaVu Sans Condensed','Liberation Sans',sans-serif;color:#1b1b1f;right:1862.09px;transform:scaleX(0.9850);transform-origin:100% 0;">-</span>
<span class="t" style="top:868px;font:400 14.2px/0 'DejaVu Sans Condensed','Liberation Sans',sans-serif;color:#1b1b1f;right:1742.09px;transform:scaleX(0.9850);transform-origin:100% 0;">-</span>
<span class="t" style="top:868px;font:400 14.2px/0 'DejaVu Sans Condensed','Liberation Sans',sans-serif;color:#1b1b1f;right:1622.09px;transform:scaleX(0.9850);transform-origin:100% 0;">-</span>
<span class="t" style="top:868px;font:400 14.2px/0 'DejaVu Sans Condensed','Liberation Sans',sans-serif;color:#1b1b1f;right:1502.09px;transform:scaleX(0.9850);transform-origin:100% 0;">-</span>
<span class="t" style="top:868px;font:400 14.2px/0 'DejaVu Sans Condensed','Liberation Sans',sans-serif;color:#1b1b1f;right:1382.09px;transform:scaleX(0.9850);transform-origin:100% 0;">-</span>
<span class="t" style="top:868px;font:400 14.2px/0 'DejaVu Sans Condensed','Liberation Sans',sans-serif;color:#1b1b1f;right:1262.09px;transform:scaleX(0.9850);transform-origin:100% 0;">-</span>
<span class="t" style="top:868px;font:400 14.2px/0 'DejaVu Sans Condensed','Liberation Sans',sans-serif;color:#1b1b1f;right:1142.09px;transform:scaleX(0.9850);transform-origin:100% 0;">-</span>
<span class="t" style="top:868px;font:400 14.2px/0 'DejaVu Sans Condensed','Liberation Sans',sans-serif;color:#1b1b1f;right:1022.09px;transform:scaleX(0.9850);transform-origin:100% 0;">-</span>
<span class="t" style="top:868px;font:400 14.2px/0 'DejaVu Sans Condensed','Liberation Sans',sans-serif;color:#1b1b1f;right:902.09px;transform:scaleX(0.9850);transform-origin:100% 0;">-</span>
<span class="t" style="top:868px;font:400 14.2px/0 'DejaVu Sans Condensed','Liberation Sans',sans-serif;color:#1b1b1f;right:782.09px;transform:scaleX(0.9850);transform-origin:100% 0;">-</span>
<span class="t" style="top:868px;font:400 14.2px/0 'DejaVu Sans Condensed','Liberation Sans',sans-serif;color:#1b1b1f;right:662.09px;transform:scaleX(0.9850);transform-origin:100% 0;">-</span>
<span class="t" style="top:868px;font:400 14.2px/0 'DejaVu Sans Condensed','Liberation Sans',sans-serif;color:#1b1b1f;right:542.09px;transform:scaleX(0.9850);transform-origin:100% 0;">-</span>
<span class="t" style="top:868px;font:400 14.2px/0 'DejaVu Sans Condensed','Liberation Sans',sans-serif;color:#1b1b1f;right:422.09px;transform:scaleX(0.9850);transform-origin:100% 0;">-</span>
<span class="t" style="top:868px;font:400 14.2px/0 'DejaVu Sans Condensed','Liberation Sans',sans-serif;color:#1b1b1f;right:302.09px;transform:scaleX(0.9850);transform-origin:100% 0;">-</span>
<span class="t" style="top:868px;font:400 14.2px/0 'DejaVu Sans Condensed','Liberation Sans',sans-serif;color:#1b1b1f;right:182.09px;transform:scaleX(0.9850);transform-origin:100% 0;">-</span>
<span class="t" style="top:868px;font:400 14.2px/0 'DejaVu Sans Condensed','Liberation Sans',sans-serif;color:#1b1b1f;right:62.09px;transform:scaleX(0.9850);transform-origin:100% 0;">-</span>
<span class="t" style="top:889px;font:700 16.3px/0 'DejaVu Serif Condensed','DejaVu Serif','Liberation Serif',serif;color:#fff;left:146.47px;transform:scaleX(0.9721);transform-origin:0 0;">Net Cash Flow from Financing Activities</span>
<span class="t" style="top:889px;font:700 16.3px/0 'DejaVu Serif Condensed','DejaVu Serif','Liberation Serif',serif;color:#fff;right:1984.12px;">900,000</span>
<span class="t" style="top:889px;font:400 16.3px/0 'DejaVu Serif Condensed','DejaVu Serif','Liberation Serif',serif;color:#fff;right:1864.16px;">-</span>
<span class="t" style="top:889px;font:700 16.3px/0 'DejaVu Serif Condensed','DejaVu Serif','Liberation Serif',serif;color:#fff;right:1743.87px;">98,333</span>
<span class="t" style="top:889px;font:700 16.3px/0 'DejaVu Serif Condensed','DejaVu Serif','Liberation Serif',serif;color:#fff;right:1616.81px;">(1,667)</span>
<span class="t" style="top:889px;font:700 16.3px/0 'DejaVu Serif Condensed','DejaVu Serif','Liberation Serif',serif;color:#fff;right:1496.81px;">(1,667)</span>
<span class="t" style="top:889px;font:700 16.3px/0 'DejaVu Serif Condensed','DejaVu Serif','Liberation Serif',serif;color:#fff;right:1376.81px;">(1,667)</span>
<span class="t" style="top:889px;font:700 16.3px/0 'DejaVu Serif Condensed','DejaVu Serif','Liberation Serif',serif;color:#fff;right:1256.81px;">(1,667)</span>
<span class="t" style="top:889px;font:700 16.3px/0 'DejaVu Serif Condensed','DejaVu Serif','Liberation Serif',serif;color:#fff;right:1136.81px;">(1,667)</span>
<span class="t" style="top:889px;font:700 16.3px/0 'DejaVu Serif Condensed','DejaVu Serif','Liberation Serif',serif;color:#fff;right:1016.81px;">(1,667)</span>
<span class="t" style="top:889px;font:700 16.3px/0 'DejaVu Serif Condensed','DejaVu Serif','Liberation Serif',serif;color:#fff;right:896.81px;">(1,667)</span>
<span class="t" style="top:889px;font:700 16.3px/0 'DejaVu Serif Condensed','DejaVu Serif','Liberation Serif',serif;color:#fff;right:776.81px;">(1,667)</span>
<span class="t" style="top:889px;font:700 16.3px/0 'DejaVu Serif Condensed','DejaVu Serif','Liberation Serif',serif;color:#fff;right:656.81px;">(1,667)</span>
<span class="t" style="top:889px;font:700 16.3px/0 'DejaVu Serif Condensed','DejaVu Serif','Liberation Serif',serif;color:#fff;right:536.81px;">(3,770)</span>
<span class="t" style="top:889px;font:700 16.3px/0 'DejaVu Serif Condensed','DejaVu Serif','Liberation Serif',serif;color:#fff;right:416.81px;">(3,780)</span>
<span class="t" style="top:889px;font:700 16.3px/0 'DejaVu Serif Condensed','DejaVu Serif','Liberation Serif',serif;color:#fff;right:296.81px;">(3,791)</span>
<span class="t" style="top:889px;font:700 16.3px/0 'DejaVu Serif Condensed','DejaVu Serif','Liberation Serif',serif;color:#fff;right:176.81px;">(3,801)</span>
<span class="t" style="top:889px;font:700 16.3px/0 'DejaVu Serif Condensed','DejaVu Serif','Liberation Serif',serif;color:#fff;right:56.81px;">(3,812)</span>
<span class="t" style="top:926px;font:700 16.3px/0 'DejaVu Serif Condensed','DejaVu Serif','Liberation Serif',serif;color:#fff;left:146.46px;transform:scaleX(0.9920);transform-origin:0 0;">Net Increase/(Decrease) in Cash Held</span>
<span class="t" style="top:926px;font:700 16.3px/0 'DejaVu Serif Condensed','DejaVu Serif','Liberation Serif',serif;color:#fff;right:1983.34px;">856,681</span>
<span class="t" style="top:926px;font:700 16.3px/0 'DejaVu Serif Condensed','DejaVu Serif','Liberation Serif',serif;color:#fff;right:1856.81px;">(64,486)</span>
<span class="t" style="top:926px;font:700 16.3px/0 'DejaVu Serif Condensed','DejaVu Serif','Liberation Serif',serif;color:#fff;right:1744.02px;">44,108</span>
<span class="t" style="top:926px;font:700 16.3px/0 'DejaVu Serif Condensed','DejaVu Serif','Liberation Serif',serif;color:#fff;right:1616.81px;">(34,238)</span>
<span class="t" style="top:926px;font:700 16.3px/0 'DejaVu Serif Condensed','DejaVu Serif','Liberation Serif',serif;color:#fff;right:1496.81px;">(14,203)</span>
<span class="t" style="top:926px;font:700 16.3px/0 'DejaVu Serif Condensed','DejaVu Serif','Liberation Serif',serif;color:#fff;right:1376.81px;">(3,664)</span>
<span class="t" style="top:926px;font:700 16.3px/0 'DejaVu Serif Condensed','DejaVu Serif','Liberation Serif',serif;color:#fff;right:1264.02px;">7,426</span>
<span class="t" style="top:926px;font:700 16.3px/0 'DejaVu Serif Condensed','DejaVu Serif','Liberation Serif',serif;color:#fff;right:1143.59px;">14,417</span>
<span class="t" style="top:926px;font:700 16.3px/0 'DejaVu Serif Condensed','DejaVu Serif','Liberation Serif',serif;color:#fff;right:1024.20px;">20,894</span>
<span class="t" style="top:926px;font:700 16.3px/0 'DejaVu Serif Condensed','DejaVu Serif','Liberation Serif',serif;color:#fff;right:903.49px;">27,802</span>
<span class="t" style="top:926px;font:700 16.3px/0 'DejaVu Serif Condensed','DejaVu Serif','Liberation Serif',serif;color:#fff;right:783.49px;">26,052</span>
<span class="t" style="top:926px;font:700 16.3px/0 'DejaVu Serif Condensed','DejaVu Serif','Liberation Serif',serif;color:#fff;right:663.34px;">27,821</span>
<span class="t" style="top:926px;font:700 16.3px/0 'DejaVu Serif Condensed','DejaVu Serif','Liberation Serif',serif;color:#fff;right:543.88px;">20,149</span>
<span class="t" style="top:926px;font:700 16.3px/0 'DejaVu Serif Condensed','DejaVu Serif','Liberation Serif',serif;color:#fff;right:423.87px;">21,353</span>
<span class="t" style="top:926px;font:700 16.3px/0 'DejaVu Serif Condensed','DejaVu Serif','Liberation Serif',serif;color:#fff;right:304.02px;">34,796</span>
<span class="t" style="top:926px;font:700 16.3px/0 'DejaVu Serif Condensed','DejaVu Serif','Liberation Serif',serif;color:#fff;right:183.59px;">35,517</span>
<span class="t" style="top:926px;font:700 16.3px/0 'DejaVu Serif Condensed','DejaVu Serif','Liberation Serif',serif;color:#fff;right:63.59px;">44,437</span>
<span class="t" style="top:1042px;font:400 16.3px/0 'DejaVu Sans Condensed','Liberation Sans',sans-serif;color:#1b1b1f;left:138.82px;transform:scaleX(0.9600);transform-origin:0 0;">Net Income Less Depreciation</span>
<span class="t" style="top:1042px;font:400 16.3px/0 'DejaVu Sans Condensed','Liberation Sans',sans-serif;color:#1b1b1f;right:1977.35px;transform:scaleX(0.9950);transform-origin:100% 0;">(33,682)</span>
<span class="t" style="top:1042px;font:400 16.3px/0 'DejaVu Sans Condensed','Liberation Sans',sans-serif;color:#1b1b1f;right:1857.35px;transform:scaleX(0.9950);transform-origin:100% 0;">(25,373)</span>
<span class="t" style="top:1042px;font:400 16.3px/0 'DejaVu Sans Condensed','Liberation Sans',sans-serif;color:#1b1b1f;right:1737.35px;transform:scaleX(0.9950);transform-origin:100% 0;">(17,731)</span>
<span class="t" style="top:1042px;font:400 16.3px/0 'DejaVu Sans Condensed','Liberation Sans',sans-serif;color:#1b1b1f;right:1617.35px;transform:scaleX(0.9950);transform-origin:100% 0;">(9,410)</span>
<span class="t" style="top:1042px;font:400 16.3px/0 'DejaVu Sans Condensed','Liberation Sans',sans-serif;color:#1b1b1f;right:1497.35px;transform:scaleX(0.9950);transform-origin:100% 0;">(1,090)</span>
<span class="t" style="top:1042px;font:400 16.3px/0 'DejaVu Sans Condensed','Liberation Sans',sans-serif;color:#1b1b1f;right:1383.80px;transform:scaleX(0.9800);transform-origin:100% 0;">6,506</span>
<span class="t" style="top:1042px;font:400 16.3px/0 'DejaVu Sans Condensed','Liberation Sans',sans-serif;color:#1b1b1f;right:1263.90px;transform:scaleX(0.9800);transform-origin:100% 0;">13,864</span>
<span class="t" style="top:1042px;font:400 16.3px/0 'DejaVu Sans Condensed','Liberation Sans',sans-serif;color:#1b1b1f;right:1143.38px;transform:scaleX(0.9800);transform-origin:100% 0;">21,221</span>
<span class="t" style="top:1042px;font:400 16.3px/0 'DejaVu Sans Condensed','Liberation Sans',sans-serif;color:#1b1b1f;right:1023.70px;transform:scaleX(0.9800);transform-origin:100% 0;">28,579</span>
<span class="t" style="top:1042px;font:400 16.3px/0 'DejaVu Sans Condensed','Liberation Sans',sans-serif;color:#1b1b1f;right:903.73px;transform:scaleX(0.9800);transform-origin:100% 0;">28,588</span>
<span class="t" style="top:1042px;font:400 16.3px/0 'DejaVu Sans Condensed','Liberation Sans',sans-serif;color:#1b1b1f;right:783.73px;transform:scaleX(0.9800);transform-origin:100% 0;">28,598</span>
<span class="t" style="top:1042px;font:400 16.3px/0 'DejaVu Sans Condensed','Liberation Sans',sans-serif;color:#1b1b1f;right:663.73px;transform:scaleX(0.9800);transform-origin:100% 0;">28,608</span>
<span class="t" style="top:1042px;font:400 16.3px/0 'DejaVu Sans Condensed','Liberation Sans',sans-serif;color:#1b1b1f;right:543.73px;transform:scaleX(0.9800);transform-origin:100% 0;">27,698</span>
<span class="t" style="top:1042px;font:400 16.3px/0 'DejaVu Sans Condensed','Liberation Sans',sans-serif;color:#1b1b1f;right:423.70px;transform:scaleX(0.9800);transform-origin:100% 0;">33,659</span>
<span class="t" style="top:1042px;font:400 16.3px/0 'DejaVu Sans Condensed','Liberation Sans',sans-serif;color:#1b1b1f;right:303.38px;transform:scaleX(0.9800);transform-origin:100% 0;">39,621</span>
<span class="t" style="top:1042px;font:400 16.3px/0 'DejaVu Sans Condensed','Liberation Sans',sans-serif;color:#1b1b1f;right:183.56px;transform:scaleX(0.9800);transform-origin:100% 0;">45,583</span>
<span class="t" style="top:1042px;font:400 16.3px/0 'DejaVu Sans Condensed','Liberation Sans',sans-serif;color:#1b1b1f;right:63.45px;transform:scaleX(0.9800);transform-origin:100% 0;">51,545</span>
<span class="t" style="top:1065px;font:400 16.3px/0 'DejaVu Sans Condensed','Liberation Sans',sans-serif;color:#1b1b1f;left:139.41px;transform:scaleX(0.9672);transform-origin:0 0;">Changes in Working Capital</span>
<span class="t" style="top:1065px;font:400 16.3px/0 'DejaVu Sans Condensed','Liberation Sans',sans-serif;color:#1b1b1f;right:1983.48px;transform:scaleX(0.9800);transform-origin:100% 0;">14,697</span>
<span class="t" style="top:1065px;font:400 16.3px/0 'DejaVu Sans Condensed','Liberation Sans',sans-serif;color:#1b1b1f;right:1857.35px;transform:scaleX(0.9950);transform-origin:100% 0;">(4,113)</span>
<span class="t" style="top:1065px;font:400 16.3px/0 'DejaVu Sans Condensed','Liberation Sans',sans-serif;color:#1b1b1f;right:1737.35px;transform:scaleX(0.9950);transform-origin:100% 0;">(6,162)</span>
<span class="t" style="top:1065px;font:400 16.3px/0 'DejaVu Sans Condensed','Liberation Sans',sans-serif;color:#1b1b1f;right:1617.35px;transform:scaleX(0.9950);transform-origin:100% 0;">(5,161)</span>
<span class="t" style="top:1065px;font:400 16.3px/0 'DejaVu Sans Condensed','Liberation Sans',sans-serif;color:#1b1b1f;right:1497.35px;transform:scaleX(0.9950);transform-origin:100% 0;">(5,114)</span>
<span class="t" style="top:1065px;font:400 16.3px/0 'DejaVu Sans Condensed','Liberation Sans',sans-serif;color:#1b1b1f;right:1377.35px;transform:scaleX(0.9950);transform-origin:100% 0;">(5,504)</span>
<span class="t" style="top:1065px;font:400 16.3px/0 'DejaVu Sans Condensed','Liberation Sans',sans-serif;color:#1b1b1f;right:1257.35px;transform:scaleX(0.9950);transform-origin:100% 0;">(4,771)</span>
<span class="t" style="top:1065px;font:400 16.3px/0 'DejaVu Sans Condensed','Liberation Sans',sans-serif;color:#1b1b1f;right:1137.35px;transform:scaleX(0.9950);transform-origin:100% 0;">(5,137)</span>
<span class="t" style="top:1065px;font:400 16.3px/0 'DejaVu Sans Condensed','Liberation Sans',sans-serif;color:#1b1b1f;right:1017.35px;transform:scaleX(0.9950);transform-origin:100% 0;">(6,018)</span>
<span class="t" style="top:1065px;font:400 16.3px/0 'DejaVu Sans Condensed','Liberation Sans',sans-serif;color:#1b1b1f;right:903.76px;transform:scaleX(0.9800);transform-origin:100% 0;">880</span>
<span class="t" style="top:1065px;font:400 16.3px/0 'DejaVu Sans Condensed','Liberation Sans',sans-serif;color:#1b1b1f;right:777.35px;transform:scaleX(0.9950);transform-origin:100% 0;">(880)</span>
<span class="t" style="top:1065px;font:400 16.3px/0 'DejaVu Sans Condensed','Liberation Sans',sans-serif;color:#1b1b1f;right:663.76px;transform:scaleX(0.9800);transform-origin:100% 0;">880</span>
<span class="t" style="top:1065px;font:400 16.3px/0 'DejaVu Sans Condensed','Liberation Sans',sans-serif;color:#1b1b1f;right:537.35px;transform:scaleX(0.9950);transform-origin:100% 0;">(3,779)</span>
<span class="t" style="top:1065px;font:400 16.3px/0 'DejaVu Sans Condensed','Liberation Sans',sans-serif;color:#1b1b1f;right:417.35px;transform:scaleX(0.9950);transform-origin:100% 0;">(8,527)</span>
<span class="t" style="top:1065px;font:400 16.3px/0 'DejaVu Sans Condensed','Liberation Sans',sans-serif;color:#1b1b1f;right:297.35px;transform:scaleX(0.9950);transform-origin:100% 0;">(1,035)</span>
<span class="t" style="top:1065px;font:400 16.3px/0 'DejaVu Sans Condensed','Liberation Sans',sans-serif;color:#1b1b1f;right:177.35px;transform:scaleX(0.9950);transform-origin:100% 0;">(6,265)</span>
<span class="t" style="top:1065px;font:400 16.3px/0 'DejaVu Sans Condensed','Liberation Sans',sans-serif;color:#1b1b1f;right:57.35px;transform:scaleX(0.9950);transform-origin:100% 0;">(3,297)</span>
<span class="t" style="top:1087px;font:700 16.3px/0 'DejaVu Serif Condensed','DejaVu Serif','Liberation Serif',serif;color:#fff;left:134.44px;transform:scaleX(0.9952);transform-origin:0 0;">Total Operating Activities</span>
<span class="t" style="top:1087px;font:700 16.3px/0 'DejaVu Serif Condensed','DejaVu Serif','Liberation Serif',serif;color:#fff;right:1976.81px;">(18,985)</span>
<span class="t" style="top:1087px;font:700 16.3px/0 'DejaVu Serif Condensed','DejaVu Serif','Liberation Serif',serif;color:#fff;right:1856.81px;">(29,486)</span>
<span class="t" style="top:1087px;font:700 16.3px/0 'DejaVu Serif Condensed','DejaVu Serif','Liberation Serif',serif;color:#fff;right:1736.81px;">(23,892)</span>
<span class="t" style="top:1087px;font:700 16.3px/0 'DejaVu Serif Condensed','DejaVu Serif','Liberation Serif',serif;color:#fff;right:1616.81px;">(14,571)</span>
<span class="t" style="top:1087px;font:700 16.3px/0 'DejaVu Serif Condensed','DejaVu Serif','Liberation Serif',serif;color:#fff;right:1496.81px;">(6,203)</span>
<span class="t" style="top:1087px;font:700 16.3px/0 'DejaVu Serif Condensed','DejaVu Serif','Liberation Serif',serif;color:#fff;right:1383.87px;">1,003</span>
<span class="t" style="top:1087px;font:700 16.3px/0 'DejaVu Serif Condensed','DejaVu Serif','Liberation Serif',serif;color:#fff;right:1263.87px;">9,093</span>
<span class="t" style="top:1087px;font:700 16.3px/0 'DejaVu Serif Condensed','DejaVu Serif','Liberation Serif',serif;color:#fff;right:1144.20px;">16,084</span>
<span class="t" style="top:1087px;font:700 16.3px/0 'DejaVu Serif Condensed','DejaVu Serif','Liberation Serif',serif;color:#fff;right:1023.34px;">22,561</span>
<span class="t" style="top:1087px;font:700 16.3px/0 'DejaVu Serif Condensed','DejaVu Serif','Liberation Serif',serif;color:#fff;right:904.02px;">29,468</span>
<span class="t" style="top:1087px;font:700 16.3px/0 'DejaVu Serif Condensed','DejaVu Serif','Liberation Serif',serif;color:#fff;right:784.02px;">27,718</span>
<span class="t" style="top:1087px;font:700 16.3px/0 'DejaVu Serif Condensed','DejaVu Serif','Liberation Serif',serif;color:#fff;right:664.02px;">29,488</span>
<span class="t" style="top:1087px;font:700 16.3px/0 'DejaVu Serif Condensed','DejaVu Serif','Liberation Serif',serif;color:#fff;right:543.88px;">23,919</span>
<span class="t" style="top:1087px;font:700 16.3px/0 'DejaVu Serif Condensed','DejaVu Serif','Liberation Serif',serif;color:#fff;right:423.87px;">25,133</span>
<span class="t" style="top:1087px;font:700 16.3px/0 'DejaVu Serif Condensed','DejaVu Serif','Liberation Serif',serif;color:#fff;right:304.02px;">38,586</span>
<span class="t" style="top:1087px;font:700 16.3px/0 'DejaVu Serif Condensed','DejaVu Serif','Liberation Serif',serif;color:#fff;right:184.02px;">39,318</span>
<span class="t" style="top:1087px;font:700 16.3px/0 'DejaVu Serif Condensed','DejaVu Serif','Liberation Serif',serif;color:#fff;right:63.88px;">48,249</span>
<span class="t" style="top:1154px;font:400 16.3px/0 'DejaVu Sans Condensed','Liberation Sans',sans-serif;color:#1b1b1f;left:139.42px;transform:scaleX(0.9461);transform-origin:0 0;">Capital Expenditure</span>
<span class="t" style="top:1154px;font:400 16.3px/0 'DejaVu Sans Condensed','Liberation Sans',sans-serif;color:#1b1b1f;right:1977.35px;transform:scaleX(0.9950);transform-origin:100% 0;">(24,333)</span>
<span class="t" style="top:1154px;font:400 16.3px/0 'DejaVu Sans Condensed','Liberation Sans',sans-serif;color:#1b1b1f;right:1857.35px;transform:scaleX(0.9950);transform-origin:100% 0;">(35,000)</span>
<span class="t" style="top:1154px;font:400 16.3px/0 'DejaVu Sans Condensed','Liberation Sans',sans-serif;color:#1b1b1f;right:1737.35px;transform:scaleX(0.9950);transform-origin:100% 0;">(30,333)</span>
<span class="t" style="top:1154px;font:400 16.3px/0 'DejaVu Sans Condensed','Liberation Sans',sans-serif;color:#1b1b1f;right:1617.35px;transform:scaleX(0.9950);transform-origin:100% 0;">(18,000)</span>
<span class="t" style="top:1154px;font:400 16.3px/0 'DejaVu Sans Condensed','Liberation Sans',sans-serif;color:#1b1b1f;right:1497.35px;transform:scaleX(0.9950);transform-origin:100% 0;">(6,333)</span>
<span class="t" style="top:1154px;font:400 16.3px/0 'DejaVu Sans Condensed','Liberation Sans',sans-serif;color:#1b1b1f;right:1377.35px;transform:scaleX(0.9950);transform-origin:100% 0;">(3,000)</span>
<span class="t" style="top:1154px;font:400 16.3px/0 'DejaVu Sans Condensed','Liberation Sans',sans-serif;color:#1b1b1f;right:1264.01px;transform:scaleX(0.9800);transform-origin:100% 0;">-</span>
<span class="t" style="top:1154px;font:400 16.3px/0 'DejaVu Sans Condensed','Liberation Sans',sans-serif;color:#1b1b1f;right:1144.01px;transform:scaleX(0.9800);transform-origin:100% 0;">-</span>
<span class="t" style="top:1154px;font:400 16.3px/0 'DejaVu Sans Condensed','Liberation Sans',sans-serif;color:#1b1b1f;right:1024.01px;transform:scaleX(0.9800);transform-origin:100% 0;">-</span>
<span class="t" style="top:1154px;font:400 16.3px/0 'DejaVu Sans Condensed','Liberation Sans',sans-serif;color:#1b1b1f;right:904.01px;transform:scaleX(0.9800);transform-origin:100% 0;">-</span>
<span class="t" style="top:1154px;font:400 16.3px/0 'DejaVu Sans Condensed','Liberation Sans',sans-serif;color:#1b1b1f;right:784.01px;transform:scaleX(0.9800);transform-origin:100% 0;">-</span>
<span class="t" style="top:1154px;font:400 16.3px/0 'DejaVu Sans Condensed','Liberation Sans',sans-serif;color:#1b1b1f;right:664.01px;transform:scaleX(0.9800);transform-origin:100% 0;">-</span>
<span class="t" style="top:1154px;font:400 16.3px/0 'DejaVu Sans Condensed','Liberation Sans',sans-serif;color:#1b1b1f;right:544.01px;transform:scaleX(0.9800);transform-origin:100% 0;">-</span>
<span class="t" style="top:1154px;font:400 16.3px/0 'DejaVu Sans Condensed','Liberation Sans',sans-serif;color:#1b1b1f;right:424.01px;transform:scaleX(0.9800);transform-origin:100% 0;">-</span>
<span class="t" style="top:1154px;font:400 16.3px/0 'DejaVu Sans Condensed','Liberation Sans',sans-serif;color:#1b1b1f;right:304.01px;transform:scaleX(0.9800);transform-origin:100% 0;">-</span>
<span class="t" style="top:1154px;font:400 16.3px/0 'DejaVu Sans Condensed','Liberation Sans',sans-serif;color:#1b1b1f;right:184.01px;transform:scaleX(0.9800);transform-origin:100% 0;">-</span>
<span class="t" style="top:1154px;font:400 16.3px/0 'DejaVu Sans Condensed','Liberation Sans',sans-serif;color:#1b1b1f;right:64.01px;transform:scaleX(0.9800);transform-origin:100% 0;">-</span>
<span class="t" style="top:1176px;font:700 16.3px/0 'DejaVu Serif Condensed','DejaVu Serif','Liberation Serif',serif;color:#fff;left:134.44px;transform:scaleX(0.9873);transform-origin:0 0;">Total Cash From (For) Investing Activities</span>
<span class="t" style="top:1176px;font:700 16.3px/0 'DejaVu Serif Condensed','DejaVu Serif','Liberation Serif',serif;color:#fff;right:1976.81px;">(24,333)</span>
<span class="t" style="top:1176px;font:700 16.3px/0 'DejaVu Serif Condensed','DejaVu Serif','Liberation Serif',serif;color:#fff;right:1856.81px;">(35,000)</span>
<span class="t" style="top:1176px;font:700 16.3px/0 'DejaVu Serif Condensed','DejaVu Serif','Liberation Serif',serif;color:#fff;right:1736.81px;">(30,333)</span>
<span class="t" style="top:1176px;font:700 16.3px/0 'DejaVu Serif Condensed','DejaVu Serif','Liberation Serif',serif;color:#fff;right:1616.81px;">(18,000)</span>
<span class="t" style="top:1176px;font:700 16.3px/0 'DejaVu Serif Condensed','DejaVu Serif','Liberation Serif',serif;color:#fff;right:1496.81px;">(6,333)</span>
<span class="t" style="top:1176px;font:700 16.3px/0 'DejaVu Serif Condensed','DejaVu Serif','Liberation Serif',serif;color:#fff;right:1376.81px;">(3,000)</span>
<span class="t" style="top:1176px;font:400 16.3px/0 'DejaVu Serif Condensed','DejaVu Serif','Liberation Serif',serif;color:#fff;right:1264.16px;">-</span>
<span class="t" style="top:1176px;font:400 16.3px/0 'DejaVu Serif Condensed','DejaVu Serif','Liberation Serif',serif;color:#fff;right:1144.16px;">-</span>
<span class="t" style="top:1176px;font:400 16.3px/0 'DejaVu Serif Condensed','DejaVu Serif','Liberation Serif',serif;color:#fff;right:1024.16px;">-</span>
<span class="t" style="top:1176px;font:400 16.3px/0 'DejaVu Serif Condensed','DejaVu Serif','Liberation Serif',serif;color:#fff;right:904.16px;">-</span>
<span class="t" style="top:1176px;font:400 16.3px/0 'DejaVu Serif Condensed','DejaVu Serif','Liberation Serif',serif;color:#fff;right:784.16px;">-</span>
<span class="t" style="top:1176px;font:400 16.3px/0 'DejaVu Serif Condensed','DejaVu Serif','Liberation Serif',serif;color:#fff;right:664.16px;">-</span>
<span class="t" style="top:1176px;font:400 16.3px/0 'DejaVu Serif Condensed','DejaVu Serif','Liberation Serif',serif;color:#fff;right:544.16px;">-</span>
<span class="t" style="top:1176px;font:400 16.3px/0 'DejaVu Serif Condensed','DejaVu Serif','Liberation Serif',serif;color:#fff;right:424.16px;">-</span>
<span class="t" style="top:1176px;font:400 16.3px/0 'DejaVu Serif Condensed','DejaVu Serif','Liberation Serif',serif;color:#fff;right:304.16px;">-</span>
<span class="t" style="top:1176px;font:400 16.3px/0 'DejaVu Serif Condensed','DejaVu Serif','Liberation Serif',serif;color:#fff;right:184.16px;">-</span>
<span class="t" style="top:1176px;font:400 16.3px/0 'DejaVu Serif Condensed','DejaVu Serif','Liberation Serif',serif;color:#fff;right:64.16px;">-</span>
<span class="t" style="top:1242px;font:400 16.3px/0 'DejaVu Sans Condensed','Liberation Sans',sans-serif;color:#1b1b1f;left:138.83px;transform:scaleX(0.9595);transform-origin:0 0;">Equity Investment</span>
<span class="t" style="top:1242px;font:400 16.3px/0 'DejaVu Sans Condensed','Liberation Sans',sans-serif;color:#1b1b1f;right:1983.76px;transform:scaleX(0.9800);transform-origin:100% 0;">700,000</span>
<span class="t" style="top:1242px;font:400 16.3px/0 'DejaVu Sans Condensed','Liberation Sans',sans-serif;color:#1b1b1f;right:1864.01px;transform:scaleX(0.9800);transform-origin:100% 0;">-</span>
<span class="t" style="top:1242px;font:400 16.3px/0 'DejaVu Sans Condensed','Liberation Sans',sans-serif;color:#1b1b1f;right:1744.01px;transform:scaleX(0.9800);transform-origin:100% 0;">-</span>
<span class="t" style="top:1242px;font:400 16.3px/0 'DejaVu Sans Condensed','Liberation Sans',sans-serif;color:#1b1b1f;right:1624.01px;transform:scaleX(0.9800);transform-origin:100% 0;">-</span>
<span class="t" style="top:1242px;font:400 16.3px/0 'DejaVu Sans Condensed','Liberation Sans',sans-serif;color:#1b1b1f;right:1504.01px;transform:scaleX(0.9800);transform-origin:100% 0;">-</span>
<span class="t" style="top:1242px;font:400 16.3px/0 'DejaVu Sans Condensed','Liberation Sans',sans-serif;color:#1b1b1f;right:1384.01px;transform:scaleX(0.9800);transform-origin:100% 0;">-</span>
<span class="t" style="top:1242px;font:400 16.3px/0 'DejaVu Sans Condensed','Liberation Sans',sans-serif;color:#1b1b1f;right:1264.01px;transform:scaleX(0.9800);transform-origin:100% 0;">-</span>
<span class="t" style="top:1242px;font:400 16.3px/0 'DejaVu Sans Condensed','Liberation Sans',sans-serif;color:#1b1b1f;right:1144.01px;transform:scaleX(0.9800);transform-origin:100% 0;">-</span>
<span class="t" style="top:1242px;font:400 16.3px/0 'DejaVu Sans Condensed','Liberation Sans',sans-serif;color:#1b1b1f;right:1024.01px;transform:scaleX(0.9800);transform-origin:100% 0;">-</span>
<span class="t" style="top:1242px;font:400 16.3px/0 'DejaVu Sans Condensed','Liberation Sans',sans-serif;color:#1b1b1f;right:904.01px;transform:scaleX(0.9800);transform-origin:100% 0;">-</span>
<span class="t" style="top:1242px;font:400 16.3px/0 'DejaVu Sans Condensed','Liberation Sans',sans-serif;color:#1b1b1f;right:784.01px;transform:scaleX(0.9800);transform-origin:100% 0;">-</span>
<span class="t" style="top:1242px;font:400 16.3px/0 'DejaVu Sans Condensed','Liberation Sans',sans-serif;color:#1b1b1f;right:664.01px;transform:scaleX(0.9800);transform-origin:100% 0;">-</span>
<span class="t" style="top:1242px;font:400 16.3px/0 'DejaVu Sans Condensed','Liberation Sans',sans-serif;color:#1b1b1f;right:544.01px;transform:scaleX(0.9800);transform-origin:100% 0;">-</span>
<span class="t" style="top:1242px;font:400 16.3px/0 'DejaVu Sans Condensed','Liberation Sans',sans-serif;color:#1b1b1f;right:424.01px;transform:scaleX(0.9800);transform-origin:100% 0;">-</span>
<span class="t" style="top:1242px;font:400 16.3px/0 'DejaVu Sans Condensed','Liberation Sans',sans-serif;color:#1b1b1f;right:304.01px;transform:scaleX(0.9800);transform-origin:100% 0;">-</span>
<span class="t" style="top:1242px;font:400 16.3px/0 'DejaVu Sans Condensed','Liberation Sans',sans-serif;color:#1b1b1f;right:184.01px;transform:scaleX(0.9800);transform-origin:100% 0;">-</span>
<span class="t" style="top:1242px;font:400 16.3px/0 'DejaVu Sans Condensed','Liberation Sans',sans-serif;color:#1b1b1f;right:64.01px;transform:scaleX(0.9800);transform-origin:100% 0;">-</span>
<span class="t" style="top:1262px;font:400 16.3px/0 'DejaVu Sans Condensed','Liberation Sans',sans-serif;color:#1b1b1f;left:138.81px;transform:scaleX(0.9684);transform-origin:0 0;">Loans</span>
<span class="t" style="top:1262px;font:400 16.3px/0 'DejaVu Sans Condensed','Liberation Sans',sans-serif;color:#1b1b1f;right:1983.76px;transform:scaleX(0.9800);transform-origin:100% 0;">200,000</span>
<span class="t" style="top:1262px;font:400 16.3px/0 'DejaVu Sans Condensed','Liberation Sans',sans-serif;color:#1b1b1f;right:1864.01px;transform:scaleX(0.9800);transform-origin:100% 0;">-</span>
<span class="t" style="top:1262px;font:400 16.3px/0 'DejaVu Sans Condensed','Liberation Sans',sans-serif;color:#1b1b1f;right:1743.56px;transform:scaleX(0.9800);transform-origin:100% 0;">98,333</span>
<span class="t" style="top:1262px;font:400 16.3px/0 'DejaVu Sans Condensed','Liberation Sans',sans-serif;color:#1b1b1f;right:1617.35px;transform:scaleX(0.9950);transform-origin:100% 0;">(1,667)</span>
<span class="t" style="top:1262px;font:400 16.3px/0 'DejaVu Sans Condensed','Liberation Sans',sans-serif;color:#1b1b1f;right:1497.35px;transform:scaleX(0.9950);transform-origin:100% 0;">(1,667)</span>
<span class="t" style="top:1262px;font:400 16.3px/0 'DejaVu Sans Condensed','Liberation Sans',sans-serif;color:#1b1b1f;right:1377.35px;transform:scaleX(0.9950);transform-origin:100% 0;">(1,667)</span>
<span class="t" style="top:1262px;font:400 16.3px/0 'DejaVu Sans Condensed','Liberation Sans',sans-serif;color:#1b1b1f;right:1257.35px;transform:scaleX(0.9950);transform-origin:100% 0;">(1,667)</span>
<span class="t" style="top:1262px;font:400 16.3px/0 'DejaVu Sans Condensed','Liberation Sans',sans-serif;color:#1b1b1f;right:1137.35px;transform:scaleX(0.9950);transform-origin:100% 0;">(1,667)</span>
<span class="t" style="top:1262px;font:400 16.3px/0 'DejaVu Sans Condensed','Liberation Sans',sans-serif;color:#1b1b1f;right:1017.35px;transform:scaleX(0.9950);transform-origin:100% 0;">(1,667)</span>
<span class="t" style="top:1262px;font:400 16.3px/0 'DejaVu Sans Condensed','Liberation Sans',sans-serif;color:#1b1b1f;right:897.35px;transform:scaleX(0.9950);transform-origin:100% 0;">(1,667)</span>
<span class="t" style="top:1262px;font:400 16.3px/0 'DejaVu Sans Condensed','Liberation Sans',sans-serif;color:#1b1b1f;right:777.35px;transform:scaleX(0.9950);transform-origin:100% 0;">(1,667)</span>
<span class="t" style="top:1262px;font:400 16.3px/0 'DejaVu Sans Condensed','Liberation Sans',sans-serif;color:#1b1b1f;right:657.35px;transform:scaleX(0.9950);transform-origin:100% 0;">(1,667)</span>
<span class="t" style="top:1262px;font:400 16.3px/0 'DejaVu Sans Condensed','Liberation Sans',sans-serif;color:#1b1b1f;right:537.35px;transform:scaleX(0.9950);transform-origin:100% 0;">(3,770)</span>
<span class="t" style="top:1262px;font:400 16.3px/0 'DejaVu Sans Condensed','Liberation Sans',sans-serif;color:#1b1b1f;right:417.35px;transform:scaleX(0.9950);transform-origin:100% 0;">(3,780)</span>
<span class="t" style="top:1262px;font:400 16.3px/0 'DejaVu Sans Condensed','Liberation Sans',sans-serif;color:#1b1b1f;right:297.35px;transform:scaleX(0.9950);transform-origin:100% 0;">(3,791)</span>
<span class="t" style="top:1262px;font:400 16.3px/0 'DejaVu Sans Condensed','Liberation Sans',sans-serif;color:#1b1b1f;right:177.35px;transform:scaleX(0.9950);transform-origin:100% 0;">(3,801)</span>
<span class="t" style="top:1262px;font:400 16.3px/0 'DejaVu Sans Condensed','Liberation Sans',sans-serif;color:#1b1b1f;right:57.35px;transform:scaleX(0.9950);transform-origin:100% 0;">(3,812)</span>
<span class="t" style="top:1282px;font:400 16.3px/0 'DejaVu Sans Condensed','Liberation Sans',sans-serif;color:#1b1b1f;left:138.80px;transform:scaleX(0.9747);transform-origin:0 0;">Dividends Paid</span>
<span class="t" style="top:1282px;font:400 16.3px/0 'DejaVu Sans Condensed','Liberation Sans',sans-serif;color:#1b1b1f;right:1984.01px;transform:scaleX(0.9800);transform-origin:100% 0;">-</span>
<span class="t" style="top:1282px;font:400 16.3px/0 'DejaVu Sans Condensed','Liberation Sans',sans-serif;color:#1b1b1f;right:1864.01px;transform:scaleX(0.9800);transform-origin:100% 0;">-</span>
<span class="t" style="top:1282px;font:400 16.3px/0 'DejaVu Sans Condensed','Liberation Sans',sans-serif;color:#1b1b1f;right:1744.01px;transform:scaleX(0.9800);transform-origin:100% 0;">-</span>
<span class="t" style="top:1282px;font:400 16.3px/0 'DejaVu Sans Condensed','Liberation Sans',sans-serif;color:#1b1b1f;right:1624.01px;transform:scaleX(0.9800);transform-origin:100% 0;">-</span>
<span class="t" style="top:1282px;font:400 16.3px/0 'DejaVu Sans Condensed','Liberation Sans',sans-serif;color:#1b1b1f;right:1504.01px;transform:scaleX(0.9800);transform-origin:100% 0;">-</span>
<span class="t" style="top:1282px;font:400 16.3px/0 'DejaVu Sans Condensed','Liberation Sans',sans-serif;color:#1b1b1f;right:1384.01px;transform:scaleX(0.9800);transform-origin:100% 0;">-</span>
<span class="t" style="top:1282px;font:400 16.3px/0 'DejaVu Sans Condensed','Liberation Sans',sans-serif;color:#1b1b1f;right:1264.01px;transform:scaleX(0.9800);transform-origin:100% 0;">-</span>
<span class="t" style="top:1282px;font:400 16.3px/0 'DejaVu Sans Condensed','Liberation Sans',sans-serif;color:#1b1b1f;right:1144.01px;transform:scaleX(0.9800);transform-origin:100% 0;">-</span>
<span class="t" style="top:1282px;font:400 16.3px/0 'DejaVu Sans Condensed','Liberation Sans',sans-serif;color:#1b1b1f;right:1024.01px;transform:scaleX(0.9800);transform-origin:100% 0;">-</span>
<span class="t" style="top:1282px;font:400 16.3px/0 'DejaVu Sans Condensed','Liberation Sans',sans-serif;color:#1b1b1f;right:904.01px;transform:scaleX(0.9800);transform-origin:100% 0;">-</span>
<span class="t" style="top:1282px;font:400 16.3px/0 'DejaVu Sans Condensed','Liberation Sans',sans-serif;color:#1b1b1f;right:784.01px;transform:scaleX(0.9800);transform-origin:100% 0;">-</span>
<span class="t" style="top:1282px;font:400 16.3px/0 'DejaVu Sans Condensed','Liberation Sans',sans-serif;color:#1b1b1f;right:664.01px;transform:scaleX(0.9800);transform-origin:100% 0;">-</span>
<span class="t" style="top:1282px;font:400 16.3px/0 'DejaVu Sans Condensed','Liberation Sans',sans-serif;color:#1b1b1f;right:544.01px;transform:scaleX(0.9800);transform-origin:100% 0;">-</span>
<span class="t" style="top:1282px;font:400 16.3px/0 'DejaVu Sans Condensed','Liberation Sans',sans-serif;color:#1b1b1f;right:424.01px;transform:scaleX(0.9800);transform-origin:100% 0;">-</span>
<span class="t" style="top:1282px;font:400 16.3px/0 'DejaVu Sans Condensed','Liberation Sans',sans-serif;color:#1b1b1f;right:304.01px;transform:scaleX(0.9800);transform-origin:100% 0;">-</span>
<span class="t" style="top:1282px;font:400 16.3px/0 'DejaVu Sans Condensed','Liberation Sans',sans-serif;color:#1b1b1f;right:184.01px;transform:scaleX(0.9800);transform-origin:100% 0;">-</span>
<span class="t" style="top:1282px;font:400 16.3px/0 'DejaVu Sans Condensed','Liberation Sans',sans-serif;color:#1b1b1f;right:64.01px;transform:scaleX(0.9800);transform-origin:100% 0;">-</span>
<span class="t" style="top:1302px;font:700 16.3px/0 'DejaVu Serif Condensed','DejaVu Serif','Liberation Serif',serif;color:#fff;left:134.44px;transform:scaleX(0.9750);transform-origin:0 0;">Total Cash From (For) Financing Activities</span>
<span class="t" style="top:1302px;font:700 16.3px/0 'DejaVu Serif Condensed','DejaVu Serif','Liberation Serif',serif;color:#fff;right:1984.12px;">900,000</span>
<span class="t" style="top:1302px;font:400 16.3px/0 'DejaVu Serif Condensed','DejaVu Serif','Liberation Serif',serif;color:#fff;right:1864.16px;">-</span>
<span class="t" style="top:1302px;font:700 16.3px/0 'DejaVu Serif Condensed','DejaVu Serif','Liberation Serif',serif;color:#fff;right:1743.87px;">98,333</span>
<span class="t" style="top:1302px;font:700 16.3px/0 'DejaVu Serif Condensed','DejaVu Serif','Liberation Serif',serif;color:#fff;right:1616.81px;">(1,667)</span>
<span class="t" style="top:1302px;font:700 16.3px/0 'DejaVu Serif Condensed','DejaVu Serif','Liberation Serif',serif;color:#fff;right:1496.81px;">(1,667)</span>
<span class="t" style="top:1302px;font:700 16.3px/0 'DejaVu Serif Condensed','DejaVu Serif','Liberation Serif',serif;color:#fff;right:1376.81px;">(1,667)</span>
<span class="t" style="top:1302px;font:700 16.3px/0 'DejaVu Serif Condensed','DejaVu Serif','Liberation Serif',serif;color:#fff;right:1256.81px;">(1,667)</span>
<span class="t" style="top:1302px;font:700 16.3px/0 'DejaVu Serif Condensed','DejaVu Serif','Liberation Serif',serif;color:#fff;right:1136.81px;">(1,667)</span>
<span class="t" style="top:1302px;font:700 16.3px/0 'DejaVu Serif Condensed','DejaVu Serif','Liberation Serif',serif;color:#fff;right:1016.81px;">(1,667)</span>
<span class="t" style="top:1302px;font:700 16.3px/0 'DejaVu Serif Condensed','DejaVu Serif','Liberation Serif',serif;color:#fff;right:896.81px;">(1,667)</span>
<span class="t" style="top:1302px;font:700 16.3px/0 'DejaVu Serif Condensed','DejaVu Serif','Liberation Serif',serif;color:#fff;right:776.81px;">(1,667)</span>
<span class="t" style="top:1302px;font:700 16.3px/0 'DejaVu Serif Condensed','DejaVu Serif','Liberation Serif',serif;color:#fff;right:656.81px;">(1,667)</span>
<span class="t" style="top:1302px;font:700 16.3px/0 'DejaVu Serif Condensed','DejaVu Serif','Liberation Serif',serif;color:#fff;right:536.81px;">(3,770)</span>
<span class="t" style="top:1302px;font:700 16.3px/0 'DejaVu Serif Condensed','DejaVu Serif','Liberation Serif',serif;color:#fff;right:416.81px;">(3,780)</span>
<span class="t" style="top:1302px;font:700 16.3px/0 'DejaVu Serif Condensed','DejaVu Serif','Liberation Serif',serif;color:#fff;right:296.81px;">(3,791)</span>
<span class="t" style="top:1302px;font:700 16.3px/0 'DejaVu Serif Condensed','DejaVu Serif','Liberation Serif',serif;color:#fff;right:176.81px;">(3,801)</span>
<span class="t" style="top:1302px;font:700 16.3px/0 'DejaVu Serif Condensed','DejaVu Serif','Liberation Serif',serif;color:#fff;right:56.81px;">(3,812)</span>
<span class="t" style="top:1369px;font:400 16.3px/0 'DejaVu Sans Condensed','Liberation Sans',sans-serif;color:#1b1b1f;left:139.42px;transform:scaleX(0.9549);transform-origin:0 0;">Cash and Cash Equivalents Beginning</span>
<span class="t" style="top:1369px;font:400 16.3px/0 'DejaVu Sans Condensed','Liberation Sans',sans-serif;color:#1b1b1f;right:1984.01px;transform:scaleX(0.9800);transform-origin:100% 0;">-</span>
<span class="t" style="top:1369px;font:400 16.3px/0 'DejaVu Sans Condensed','Liberation Sans',sans-serif;color:#1b1b1f;right:1863.38px;transform:scaleX(0.9800);transform-origin:100% 0;">856,681</span>
<span class="t" style="top:1369px;font:400 16.3px/0 'DejaVu Sans Condensed','Liberation Sans',sans-serif;color:#1b1b1f;right:1743.45px;transform:scaleX(0.9800);transform-origin:100% 0;">792,195</span>
<span class="t" style="top:1369px;font:400 16.3px/0 'DejaVu Sans Condensed','Liberation Sans',sans-serif;color:#1b1b1f;right:1623.56px;transform:scaleX(0.9800);transform-origin:100% 0;">836,303</span>
<span class="t" style="top:1369px;font:400 16.3px/0 'DejaVu Sans Condensed','Liberation Sans',sans-serif;color:#1b1b1f;right:1503.45px;transform:scaleX(0.9800);transform-origin:100% 0;">802,065</span>
<span class="t" style="top:1369px;font:400 16.3px/0 'DejaVu Sans Condensed','Liberation Sans',sans-serif;color:#1b1b1f;right:1383.38px;transform:scaleX(0.9800);transform-origin:100% 0;">787,861</span>
<span class="t" style="top:1369px;font:400 16.3px/0 'DejaVu Sans Condensed','Liberation Sans',sans-serif;color:#1b1b1f;right:1263.48px;transform:scaleX(0.9800);transform-origin:100% 0;">784,197</span>
<span class="t" style="top:1369px;font:400 16.3px/0 'DejaVu Sans Condensed','Liberation Sans',sans-serif;color:#1b1b1f;right:1143.56px;transform:scaleX(0.9800);transform-origin:100% 0;">791,623</span>
<span class="t" style="top:1369px;font:400 16.3px/0 'DejaVu Sans Condensed','Liberation Sans',sans-serif;color:#1b1b1f;right:1023.76px;transform:scaleX(0.9800);transform-origin:100% 0;">806,040</span>
<span class="t" style="top:1369px;font:400 16.3px/0 'DejaVu Sans Condensed','Liberation Sans',sans-serif;color:#1b1b1f;right:903.45px;transform:scaleX(0.9800);transform-origin:100% 0;">826,935</span>
<span class="t" style="top:1369px;font:400 16.3px/0 'DejaVu Sans Condensed','Liberation Sans',sans-serif;color:#1b1b1f;right:783.48px;transform:scaleX(0.9800);transform-origin:100% 0;">854,737</span>
<span class="t" style="top:1369px;font:400 16.3px/0 'DejaVu Sans Condensed','Liberation Sans',sans-serif;color:#1b1b1f;right:663.73px;transform:scaleX(0.9800);transform-origin:100% 0;">880,788</span>
<span class="t" style="top:1369px;font:400 16.3px/0 'DejaVu Sans Condensed','Liberation Sans',sans-serif;color:#1b1b1f;right:543.76px;transform:scaleX(0.9800);transform-origin:100% 0;">908,610</span>
<span class="t" style="top:1369px;font:400 16.3px/0 'DejaVu Sans Condensed','Liberation Sans',sans-serif;color:#1b1b1f;right:423.70px;transform:scaleX(0.9800);transform-origin:100% 0;">928,759</span>
<span class="t" style="top:1369px;font:400 16.3px/0 'DejaVu Sans Condensed','Liberation Sans',sans-serif;color:#1b1b1f;right:303.27px;transform:scaleX(0.9800);transform-origin:100% 0;">950,112</span>
<span class="t" style="top:1369px;font:400 16.3px/0 'DejaVu Sans Condensed','Liberation Sans',sans-serif;color:#1b1b1f;right:183.73px;transform:scaleX(0.9800);transform-origin:100% 0;">984,908</span>
<span class="t" style="top:1369px;font:400 16.3px/0 'DejaVu Sans Condensed','Liberation Sans',sans-serif;color:#1b1b1f;right:63.45px;transform:scaleX(0.9800);transform-origin:100% 0;">1,020,425</span>
<span class="t" style="top:1392px;font:400 16.3px/0 'DejaVu Sans Condensed','Liberation Sans',sans-serif;color:#1b1b1f;left:138.82px;transform:scaleX(0.9632);transform-origin:0 0;">Net (Increase) Decrease In Cash</span>
<span class="t" style="top:1392px;font:400 16.3px/0 'DejaVu Sans Condensed','Liberation Sans',sans-serif;color:#1b1b1f;right:1983.38px;transform:scaleX(0.9800);transform-origin:100% 0;">856,681</span>
<span class="t" style="top:1392px;font:400 16.3px/0 'DejaVu Sans Condensed','Liberation Sans',sans-serif;color:#1b1b1f;right:1857.35px;transform:scaleX(0.9950);transform-origin:100% 0;">(64,486)</span>
<span class="t" style="top:1392px;font:400 16.3px/0 'DejaVu Sans Condensed','Liberation Sans',sans-serif;color:#1b1b1f;right:1743.73px;transform:scaleX(0.9800);transform-origin:100% 0;">44,108</span>
<span class="t" style="top:1392px;font:400 16.3px/0 'DejaVu Sans Condensed','Liberation Sans',sans-serif;color:#1b1b1f;right:1617.35px;transform:scaleX(0.9950);transform-origin:100% 0;">(34,238)</span>
<span class="t" style="top:1392px;font:400 16.3px/0 'DejaVu Sans Condensed','Liberation Sans',sans-serif;color:#1b1b1f;right:1497.35px;transform:scaleX(0.9950);transform-origin:100% 0;">(14,203)</span>
<span class="t" style="top:1392px;font:400 16.3px/0 'DejaVu Sans Condensed','Liberation Sans',sans-serif;color:#1b1b1f;right:1377.35px;transform:scaleX(0.9950);transform-origin:100% 0;">(3,664)</span>
<span class="t" style="top:1392px;font:400 16.3px/0 'DejaVu Sans Condensed','Liberation Sans',sans-serif;color:#1b1b1f;right:1263.80px;transform:scaleX(0.9800);transform-origin:100% 0;">7,426</span>
<span class="t" style="top:1392px;font:400 16.3px/0 'DejaVu Sans Condensed','Liberation Sans',sans-serif;color:#1b1b1f;right:1143.48px;transform:scaleX(0.9800);transform-origin:100% 0;">14,417</span>
<span class="t" style="top:1392px;font:400 16.3px/0 'DejaVu Sans Condensed','Liberation Sans',sans-serif;color:#1b1b1f;right:1023.90px;transform:scaleX(0.9800);transform-origin:100% 0;">20,894</span>
<span class="t" style="top:1392px;font:400 16.3px/0 'DejaVu Sans Condensed','Liberation Sans',sans-serif;color:#1b1b1f;right:903.27px;transform:scaleX(0.9800);transform-origin:100% 0;">27,802</span>
<span class="t" style="top:1392px;font:400 16.3px/0 'DejaVu Sans Condensed','Liberation Sans',sans-serif;color:#1b1b1f;right:783.27px;transform:scaleX(0.9800);transform-origin:100% 0;">26,052</span>
<span class="t" style="top:1392px;font:400 16.3px/0 'DejaVu Sans Condensed','Liberation Sans',sans-serif;color:#1b1b1f;right:663.38px;transform:scaleX(0.9800);transform-origin:100% 0;">27,821</span>
<span class="t" style="top:1392px;font:400 16.3px/0 'DejaVu Sans Condensed','Liberation Sans',sans-serif;color:#1b1b1f;right:543.70px;transform:scaleX(0.9800);transform-origin:100% 0;">20,149</span>
<span class="t" style="top:1392px;font:400 16.3px/0 'DejaVu Sans Condensed','Liberation Sans',sans-serif;color:#1b1b1f;right:423.56px;transform:scaleX(0.9800);transform-origin:100% 0;">21,353</span>
<span class="t" style="top:1392px;font:400 16.3px/0 'DejaVu Sans Condensed','Liberation Sans',sans-serif;color:#1b1b1f;right:303.80px;transform:scaleX(0.9800);transform-origin:100% 0;">34,796</span>
<span class="t" style="top:1392px;font:400 16.3px/0 'DejaVu Sans Condensed','Liberation Sans',sans-serif;color:#1b1b1f;right:183.48px;transform:scaleX(0.9800);transform-origin:100% 0;">35,517</span>
<span class="t" style="top:1392px;font:400 16.3px/0 'DejaVu Sans Condensed','Liberation Sans',sans-serif;color:#1b1b1f;right:63.48px;transform:scaleX(0.9800);transform-origin:100% 0;">44,437</span>
<span class="t" style="top:1414px;font:700 16.3px/0 'DejaVu Serif Condensed','DejaVu Serif','Liberation Serif',serif;color:#fff;left:134.44px;transform:scaleX(0.9789);transform-origin:0 0;">Total Cash and Cash Equivalents End</span>
<span class="t" style="top:1414px;font:700 16.3px/0 'DejaVu Serif Condensed','DejaVu Serif','Liberation Serif',serif;color:#fff;right:1983.34px;">856,681</span>
<span class="t" style="top:1414px;font:700 16.3px/0 'DejaVu Serif Condensed','DejaVu Serif','Liberation Serif',serif;color:#fff;right:1863.69px;">792,195</span>
<span class="t" style="top:1414px;font:700 16.3px/0 'DejaVu Serif Condensed','DejaVu Serif','Liberation Serif',serif;color:#fff;right:1743.87px;">836,303</span>
<span class="t" style="top:1414px;font:700 16.3px/0 'DejaVu Serif Condensed','DejaVu Serif','Liberation Serif',serif;color:#fff;right:1623.69px;">802,065</span>
<span class="t" style="top:1414px;font:700 16.3px/0 'DejaVu Serif Condensed','DejaVu Serif','Liberation Serif',serif;color:#fff;right:1503.34px;">787,861</span>
<span class="t" style="top:1414px;font:700 16.3px/0 'DejaVu Serif Condensed','DejaVu Serif','Liberation Serif',serif;color:#fff;right:1383.59px;">784,197</span>
<span class="t" style="top:1414px;font:700 16.3px/0 'DejaVu Serif Condensed','DejaVu Serif','Liberation Serif',serif;color:#fff;right:1263.87px;">791,623</span>
<span class="t" style="top:1414px;font:700 16.3px/0 'DejaVu Serif Condensed','DejaVu Serif','Liberation Serif',serif;color:#fff;right:1144.12px;">806,040</span>
<span class="t" style="top:1414px;font:700 16.3px/0 'DejaVu Serif Condensed','DejaVu Serif','Liberation Serif',serif;color:#fff;right:1023.69px;">826,935</span>
<span class="t" style="top:1414px;font:700 16.3px/0 'DejaVu Serif Condensed','DejaVu Serif','Liberation Serif',serif;color:#fff;right:903.59px;">854,737</span>
<span class="t" style="top:1414px;font:700 16.3px/0 'DejaVu Serif Condensed','DejaVu Serif','Liberation Serif',serif;color:#fff;right:784.02px;">880,788</span>
<span class="t" style="top:1414px;font:700 16.3px/0 'DejaVu Serif Condensed','DejaVu Serif','Liberation Serif',serif;color:#fff;right:664.12px;">908,610</span>
<span class="t" style="top:1414px;font:700 16.3px/0 'DejaVu Serif Condensed','DejaVu Serif','Liberation Serif',serif;color:#fff;right:543.88px;">928,759</span>
<span class="t" style="top:1414px;font:700 16.3px/0 'DejaVu Serif Condensed','DejaVu Serif','Liberation Serif',serif;color:#fff;right:423.49px;">950,112</span>
<span class="t" style="top:1414px;font:700 16.3px/0 'DejaVu Serif Condensed','DejaVu Serif','Liberation Serif',serif;color:#fff;right:304.02px;">984,908</span>
<span class="t" style="top:1414px;font:700 16.3px/0 'DejaVu Serif Condensed','DejaVu Serif','Liberation Serif',serif;color:#fff;right:183.69px;">1,020,425</span>
<span class="t" style="top:1414px;font:700 16.3px/0 'DejaVu Serif Condensed','DejaVu Serif','Liberation Serif',serif;color:#fff;right:63.34px;">1,064,861</span>
<span class="t" style="top:1510px;font:400 16.3px/0 'DejaVu Sans Condensed','Liberation Sans',sans-serif;color:#1b1b1f;left:138.81px;transform:scaleX(0.9711);transform-origin:0 0;">Net Cash Flow from Investing Activities</span>
<span class="t" style="top:1509px;font:400 14.2px/0 'DejaVu Sans Condensed','Liberation Sans',sans-serif;color:#1b1b1f;right:1976.52px;transform:scaleX(0.9850);transform-origin:100% 0;">(24,333)</span>
<span class="t" style="top:1509px;font:400 14.2px/0 'DejaVu Sans Condensed','Liberation Sans',sans-serif;color:#1b1b1f;right:1856.52px;transform:scaleX(0.9850);transform-origin:100% 0;">(35,000)</span>
<span class="t" style="top:1509px;font:400 14.2px/0 'DejaVu Sans Condensed','Liberation Sans',sans-serif;color:#1b1b1f;right:1736.52px;transform:scaleX(0.9850);transform-origin:100% 0;">(30,333)</span>
<span class="t" style="top:1509px;font:400 14.2px/0 'DejaVu Sans Condensed','Liberation Sans',sans-serif;color:#1b1b1f;right:1616.52px;transform:scaleX(0.9850);transform-origin:100% 0;">(18,000)</span>
<span class="t" style="top:1509px;font:400 14.2px/0 'DejaVu Sans Condensed','Liberation Sans',sans-serif;color:#1b1b1f;right:1496.52px;transform:scaleX(0.9850);transform-origin:100% 0;">(6,333)</span>
<span class="t" style="top:1509px;font:400 14.2px/0 'DejaVu Sans Condensed','Liberation Sans',sans-serif;color:#1b1b1f;right:1376.52px;transform:scaleX(0.9850);transform-origin:100% 0;">(3,000)</span>
<span class="t" style="top:1509px;font:400 14.2px/0 'DejaVu Sans Condensed','Liberation Sans',sans-serif;color:#1b1b1f;right:1262.09px;transform:scaleX(0.9850);transform-origin:100% 0;">-</span>
<span class="t" style="top:1509px;font:400 14.2px/0 'DejaVu Sans Condensed','Liberation Sans',sans-serif;color:#1b1b1f;right:1142.09px;transform:scaleX(0.9850);transform-origin:100% 0;">-</span>
<span class="t" style="top:1509px;font:400 14.2px/0 'DejaVu Sans Condensed','Liberation Sans',sans-serif;color:#1b1b1f;right:1022.09px;transform:scaleX(0.9850);transform-origin:100% 0;">-</span>
<span class="t" style="top:1509px;font:400 14.2px/0 'DejaVu Sans Condensed','Liberation Sans',sans-serif;color:#1b1b1f;right:902.09px;transform:scaleX(0.9850);transform-origin:100% 0;">-</span>
<span class="t" style="top:1509px;font:400 14.2px/0 'DejaVu Sans Condensed','Liberation Sans',sans-serif;color:#1b1b1f;right:782.09px;transform:scaleX(0.9850);transform-origin:100% 0;">-</span>
<span class="t" style="top:1509px;font:400 14.2px/0 'DejaVu Sans Condensed','Liberation Sans',sans-serif;color:#1b1b1f;right:662.09px;transform:scaleX(0.9850);transform-origin:100% 0;">-</span>
<span class="t" style="top:1509px;font:400 14.2px/0 'DejaVu Sans Condensed','Liberation Sans',sans-serif;color:#1b1b1f;right:542.09px;transform:scaleX(0.9850);transform-origin:100% 0;">-</span>
<span class="t" style="top:1509px;font:400 14.2px/0 'DejaVu Sans Condensed','Liberation Sans',sans-serif;color:#1b1b1f;right:422.09px;transform:scaleX(0.9850);transform-origin:100% 0;">-</span>
<span class="t" style="top:1509px;font:400 14.2px/0 'DejaVu Sans Condensed','Liberation Sans',sans-serif;color:#1b1b1f;right:302.09px;transform:scaleX(0.9850);transform-origin:100% 0;">-</span>
<span class="t" style="top:1509px;font:400 14.2px/0 'DejaVu Sans Condensed','Liberation Sans',sans-serif;color:#1b1b1f;right:182.09px;transform:scaleX(0.9850);transform-origin:100% 0;">-</span>
<span class="t" style="top:1509px;font:400 14.2px/0 'DejaVu Sans Condensed','Liberation Sans',sans-serif;color:#1b1b1f;right:62.09px;transform:scaleX(0.9850);transform-origin:100% 0;">-</span>
<span class="t" style="top:1530px;font:400 16.3px/0 'DejaVu Sans Condensed','Liberation Sans',sans-serif;color:#1b1b1f;left:138.81px;transform:scaleX(0.9704);transform-origin:0 0;">Net Cash Flow from Financing Activities</span>
<span class="t" style="top:1529px;font:400 14.2px/0 'DejaVu Sans Condensed','Liberation Sans',sans-serif;color:#1b1b1f;right:1981.67px;transform:scaleX(0.9850);transform-origin:100% 0;">900,000</span>
<span class="t" style="top:1529px;font:400 14.2px/0 'DejaVu Sans Condensed','Liberation Sans',sans-serif;color:#1b1b1f;right:1862.09px;transform:scaleX(0.9850);transform-origin:100% 0;">-</span>
<span class="t" style="top:1529px;font:400 14.2px/0 'DejaVu Sans Condensed','Liberation Sans',sans-serif;color:#1b1b1f;right:1741.50px;transform:scaleX(0.9850);transform-origin:100% 0;">98,333</span>
<span class="t" style="top:1529px;font:400 14.2px/0 'DejaVu Sans Condensed','Liberation Sans',sans-serif;color:#1b1b1f;right:1616.52px;transform:scaleX(0.9850);transform-origin:100% 0;">(1,667)</span>
<span class="t" style="top:1529px;font:400 14.2px/0 'DejaVu Sans Condensed','Liberation Sans',sans-serif;color:#1b1b1f;right:1496.52px;transform:scaleX(0.9850);transform-origin:100% 0;">(1,667)</span>
<span class="t" style="top:1529px;font:400 14.2px/0 'DejaVu Sans Condensed','Liberation Sans',sans-serif;color:#1b1b1f;right:1376.52px;transform:scaleX(0.9850);transform-origin:100% 0;">(1,667)</span>
<span class="t" style="top:1529px;font:400 14.2px/0 'DejaVu Sans Condensed','Liberation Sans',sans-serif;color:#1b1b1f;right:1256.52px;transform:scaleX(0.9850);transform-origin:100% 0;">(1,667)</span>
<span class="t" style="top:1529px;font:400 14.2px/0 'DejaVu Sans Condensed','Liberation Sans',sans-serif;color:#1b1b1f;right:1136.52px;transform:scaleX(0.9850);transform-origin:100% 0;">(1,667)</span>
<span class="t" style="top:1529px;font:400 14.2px/0 'DejaVu Sans Condensed','Liberation Sans',sans-serif;color:#1b1b1f;right:1016.52px;transform:scaleX(0.9850);transform-origin:100% 0;">(1,667)</span>
<span class="t" style="top:1529px;font:400 14.2px/0 'DejaVu Sans Condensed','Liberation Sans',sans-serif;color:#1b1b1f;right:896.52px;transform:scaleX(0.9850);transform-origin:100% 0;">(1,667)</span>
<span class="t" style="top:1529px;font:400 14.2px/0 'DejaVu Sans Condensed','Liberation Sans',sans-serif;color:#1b1b1f;right:776.52px;transform:scaleX(0.9850);transform-origin:100% 0;">(1,667)</span>
<span class="t" style="top:1529px;font:400 14.2px/0 'DejaVu Sans Condensed','Liberation Sans',sans-serif;color:#1b1b1f;right:656.52px;transform:scaleX(0.9850);transform-origin:100% 0;">(1,667)</span>
<span class="t" style="top:1529px;font:400 14.2px/0 'DejaVu Sans Condensed','Liberation Sans',sans-serif;color:#1b1b1f;right:536.52px;transform:scaleX(0.9850);transform-origin:100% 0;">(3,770)</span>
<span class="t" style="top:1529px;font:400 14.2px/0 'DejaVu Sans Condensed','Liberation Sans',sans-serif;color:#1b1b1f;right:416.52px;transform:scaleX(0.9850);transform-origin:100% 0;">(3,780)</span>
<span class="t" style="top:1529px;font:400 14.2px/0 'DejaVu Sans Condensed','Liberation Sans',sans-serif;color:#1b1b1f;right:296.52px;transform:scaleX(0.9850);transform-origin:100% 0;">(3,791)</span>
<span class="t" style="top:1529px;font:400 14.2px/0 'DejaVu Sans Condensed','Liberation Sans',sans-serif;color:#1b1b1f;right:176.52px;transform:scaleX(0.9850);transform-origin:100% 0;">(3,801)</span>
<span class="t" style="top:1529px;font:400 14.2px/0 'DejaVu Sans Condensed','Liberation Sans',sans-serif;color:#1b1b1f;right:56.52px;transform:scaleX(0.9850);transform-origin:100% 0;">(3,812)</span>
<span class="t" style="top:1550px;font:400 16.3px/0 'DejaVu Sans Condensed','Liberation Sans',sans-serif;color:#1b1b1f;left:139.43px;transform:scaleX(0.9388);transform-origin:0 0;">Cash Receipts</span>
<span class="t" style="top:1549px;font:400 14.2px/0 'DejaVu Sans Condensed','Liberation Sans',sans-serif;color:#1b1b1f;right:1981.71px;transform:scaleX(0.9850);transform-origin:100% 0;">5,956</span>
<span class="t" style="top:1549px;font:400 14.2px/0 'DejaVu Sans Condensed','Liberation Sans',sans-serif;color:#1b1b1f;right:1861.67px;transform:scaleX(0.9850);transform-origin:100% 0;">16,300</span>
<span class="t" style="top:1549px;font:400 14.2px/0 'DejaVu Sans Condensed','Liberation Sans',sans-serif;color:#1b1b1f;right:1741.80px;transform:scaleX(0.9850);transform-origin:100% 0;">30,234</span>
<span class="t" style="top:1549px;font:400 14.2px/0 'DejaVu Sans Condensed','Liberation Sans',sans-serif;color:#1b1b1f;right:1621.80px;transform:scaleX(0.9850);transform-origin:100% 0;">39,834</span>
<span class="t" style="top:1549px;font:400 14.2px/0 'DejaVu Sans Condensed','Liberation Sans',sans-serif;color:#1b1b1f;right:1501.80px;transform:scaleX(0.9850);transform-origin:100% 0;">52,864</span>
<span class="t" style="top:1549px;font:400 14.2px/0 'DejaVu Sans Condensed','Liberation Sans',sans-serif;color:#1b1b1f;right:1381.50px;transform:scaleX(0.9850);transform-origin:100% 0;">62,543</span>
<span class="t" style="top:1549px;font:400 14.2px/0 'DejaVu Sans Condensed','Liberation Sans',sans-serif;color:#1b1b1f;right:1261.43px;transform:scaleX(0.9850);transform-origin:100% 0;">76,317</span>
<span class="t" style="top:1549px;font:400 14.2px/0 'DejaVu Sans Condensed','Liberation Sans',sans-serif;color:#1b1b1f;right:1141.35px;transform:scaleX(0.9850);transform-origin:100% 0;">86,741</span>
<span class="t" style="top:1549px;font:400 14.2px/0 'DejaVu Sans Condensed','Liberation Sans',sans-serif;color:#1b1b1f;right:1021.71px;transform:scaleX(0.9850);transform-origin:100% 0;">96,606</span>
<span class="t" style="top:1549px;font:400 14.2px/0 'DejaVu Sans Condensed','Liberation Sans',sans-serif;color:#1b1b1f;right:901.35px;transform:scaleX(0.9850);transform-origin:100% 0;">105,541</span>
<span class="t" style="top:1549px;font:400 14.2px/0 'DejaVu Sans Condensed','Liberation Sans',sans-serif;color:#1b1b1f;right:781.67px;transform:scaleX(0.9850);transform-origin:100% 0;">102,190</span>
<span class="t" style="top:1549px;font:400 14.2px/0 'DejaVu Sans Condensed','Liberation Sans',sans-serif;color:#1b1b1f;right:661.35px;transform:scaleX(0.9850);transform-origin:100% 0;">105,541</span>
<span class="t" style="top:1549px;font:400 14.2px/0 'DejaVu Sans Condensed','Liberation Sans',sans-serif;color:#1b1b1f;right:541.65px;transform:scaleX(0.9850);transform-origin:100% 0;">118,178</span>
<span class="t" style="top:1549px;font:400 14.2px/0 'DejaVu Sans Condensed','Liberation Sans',sans-serif;color:#1b1b1f;right:421.67px;transform:scaleX(0.9850);transform-origin:100% 0;">129,700</span>
<span class="t" style="top:1549px;font:400 14.2px/0 'DejaVu Sans Condensed','Liberation Sans',sans-serif;color:#1b1b1f;right:301.43px;transform:scaleX(0.9850);transform-origin:100% 0;">155,057</span>
<span class="t" style="top:1549px;font:400 14.2px/0 'DejaVu Sans Condensed','Liberation Sans',sans-serif;color:#1b1b1f;right:181.35px;transform:scaleX(0.9850);transform-origin:100% 0;">155,661</span>
<span class="t" style="top:1549px;font:400 14.2px/0 'DejaVu Sans Condensed','Liberation Sans',sans-serif;color:#1b1b1f;right:61.71px;transform:scaleX(0.9850);transform-origin:100% 0;">171,546</span>
<span class="t" style="top:1570px;font:400 16.3px/0 'DejaVu Sans Condensed','Liberation Sans',sans-serif;color:#1b1b1f;left:139.42px;transform:scaleX(0.9492);transform-origin:0 0;">Cash Payments</span>
<span class="t" style="top:1569px;font:400 14.2px/0 'DejaVu Sans Condensed','Liberation Sans',sans-serif;color:#1b1b1f;right:1976.52px;transform:scaleX(0.9850);transform-origin:100% 0;">(23,942)</span>
<span class="t" style="top:1569px;font:400 14.2px/0 'DejaVu Sans Condensed','Liberation Sans',sans-serif;color:#1b1b1f;right:1856.52px;transform:scaleX(0.9850);transform-origin:100% 0;">(44,787)</span>
<span class="t" style="top:1569px;font:400 14.2px/0 'DejaVu Sans Condensed','Liberation Sans',sans-serif;color:#1b1b1f;right:1736.52px;transform:scaleX(0.9850);transform-origin:100% 0;">(52,460)</span>
<span class="t" style="top:1569px;font:400 14.2px/0 'DejaVu Sans Condensed','Liberation Sans',sans-serif;color:#1b1b1f;right:1616.52px;transform:scaleX(0.9850);transform-origin:100% 0;">(52,750)</span>
<span class="t" style="top:1569px;font:400 14.2px/0 'DejaVu Sans Condensed','Liberation Sans',sans-serif;color:#1b1b1f;right:1496.52px;transform:scaleX(0.9850);transform-origin:100% 0;">(57,423)</span>
<span class="t" style="top:1569px;font:400 14.2px/0 'DejaVu Sans Condensed','Liberation Sans',sans-serif;color:#1b1b1f;right:1376.52px;transform:scaleX(0.9850);transform-origin:100% 0;">(59,183)</span>
<span class="t" style="top:1569px;font:400 14.2px/0 'DejaVu Sans Condensed','Liberation Sans',sans-serif;color:#1b1b1f;right:1256.52px;transform:scaleX(0.9850);transform-origin:100% 0;">(63,915)</span>
<span class="t" style="top:1569px;font:400 14.2px/0 'DejaVu Sans Condensed','Liberation Sans',sans-serif;color:#1b1b1f;right:1136.52px;transform:scaleX(0.9850);transform-origin:100% 0;">(66,396)</span>
<span class="t" style="top:1569px;font:400 14.2px/0 'DejaVu Sans Condensed','Liberation Sans',sans-serif;color:#1b1b1f;right:1016.52px;transform:scaleX(0.9850);transform-origin:100% 0;">(68,832)</span>
<span class="t" style="top:1569px;font:400 14.2px/0 'DejaVu Sans Condensed','Liberation Sans',sans-serif;color:#1b1b1f;right:896.52px;transform:scaleX(0.9850);transform-origin:100% 0;">(70,869)</span>
<span class="t" style="top:1569px;font:400 14.2px/0 'DejaVu Sans Condensed','Liberation Sans',sans-serif;color:#1b1b1f;right:776.52px;transform:scaleX(0.9850);transform-origin:100% 0;">(69,279)</span>
<span class="t" style="top:1569px;font:400 14.2px/0 'DejaVu Sans Condensed','Liberation Sans',sans-serif;color:#1b1b1f;right:656.52px;transform:scaleX(0.9850);transform-origin:100% 0;">(70,869)</span>
<span class="t" style="top:1569px;font:400 14.2px/0 'DejaVu Sans Condensed','Liberation Sans',sans-serif;color:#1b1b1f;right:536.52px;transform:scaleX(0.9850);transform-origin:100% 0;">(83,796)</span>
<span class="t" style="top:1569px;font:400 14.2px/0 'DejaVu Sans Condensed','Liberation Sans',sans-serif;color:#1b1b1f;right:416.52px;transform:scaleX(0.9850);transform-origin:100% 0;">(92,138)</span>
<span class="t" style="top:1569px;font:400 14.2px/0 'DejaVu Sans Condensed','Liberation Sans',sans-serif;color:#1b1b1f;right:296.52px;transform:scaleX(0.9850);transform-origin:100% 0;">(102,077)</span>
<span class="t" style="top:1569px;font:400 14.2px/0 'DejaVu Sans Condensed','Liberation Sans',sans-serif;color:#1b1b1f;right:176.52px;transform:scaleX(0.9850);transform-origin:100% 0;">(99,983)</span>
<span class="t" style="top:1569px;font:400 14.2px/0 'DejaVu Sans Condensed','Liberation Sans',sans-serif;color:#1b1b1f;right:56.52px;transform:scaleX(0.9850);transform-origin:100% 0;">(104,972)</span>
<span class="t" style="top:1590px;font:400 16.3px/0 'DejaVu Sans Condensed','Liberation Sans',sans-serif;color:#1b1b1f;left:139.39px;transform:scaleX(0.9821);transform-origin:0 0;">Change in Cash (Pre-Corporate Tax &amp; Interest on Cash)</span>
<span class="t" style="top:1589px;font:400 14.2px/0 'DejaVu Sans Condensed','Liberation Sans',sans-serif;color:#1b1b1f;right:1981.35px;transform:scaleX(0.9850);transform-origin:100% 0;">857,681</span>
<span class="t" style="top:1589px;font:400 14.2px/0 'DejaVu Sans Condensed','Liberation Sans',sans-serif;color:#1b1b1f;right:1856.52px;transform:scaleX(0.9850);transform-origin:100% 0;">(63,486)</span>
<span class="t" style="top:1589px;font:400 14.2px/0 'DejaVu Sans Condensed','Liberation Sans',sans-serif;color:#1b1b1f;right:1741.80px;transform:scaleX(0.9850);transform-origin:100% 0;">45,774</span>
<span class="t" style="top:1589px;font:400 14.2px/0 'DejaVu Sans Condensed','Liberation Sans',sans-serif;color:#1b1b1f;right:1616.52px;transform:scaleX(0.9850);transform-origin:100% 0;">(32,583)</span>
<span class="t" style="top:1589px;font:400 14.2px/0 'DejaVu Sans Condensed','Liberation Sans',sans-serif;color:#1b1b1f;right:1496.52px;transform:scaleX(0.9850);transform-origin:100% 0;">(12,559)</span>
<span class="t" style="top:1589px;font:400 14.2px/0 'DejaVu Sans Condensed','Liberation Sans',sans-serif;color:#1b1b1f;right:1376.52px;transform:scaleX(0.9850);transform-origin:100% 0;">(1,307)</span>
<span class="t" style="top:1589px;font:400 14.2px/0 'DejaVu Sans Condensed','Liberation Sans',sans-serif;color:#1b1b1f;right:1261.41px;transform:scaleX(0.9850);transform-origin:100% 0;">10,735</span>
<span class="t" style="top:1589px;font:400 14.2px/0 'DejaVu Sans Condensed','Liberation Sans',sans-serif;color:#1b1b1f;right:1141.65px;transform:scaleX(0.9850);transform-origin:100% 0;">18,678</span>
<span class="t" style="top:1589px;font:400 14.2px/0 'DejaVu Sans Condensed','Liberation Sans',sans-serif;color:#1b1b1f;right:1021.43px;transform:scaleX(0.9850);transform-origin:100% 0;">26,107</span>
<span class="t" style="top:1589px;font:400 14.2px/0 'DejaVu Sans Condensed','Liberation Sans',sans-serif;color:#1b1b1f;right:901.41px;transform:scaleX(0.9850);transform-origin:100% 0;">33,005</span>
<span class="t" style="top:1589px;font:400 14.2px/0 'DejaVu Sans Condensed','Liberation Sans',sans-serif;color:#1b1b1f;right:781.41px;transform:scaleX(0.9850);transform-origin:100% 0;">31,245</span>
<span class="t" style="top:1589px;font:400 14.2px/0 'DejaVu Sans Condensed','Liberation Sans',sans-serif;color:#1b1b1f;right:661.41px;transform:scaleX(0.9850);transform-origin:100% 0;">33,005</span>
<span class="t" style="top:1589px;font:400 14.2px/0 'DejaVu Sans Condensed','Liberation Sans',sans-serif;color:#1b1b1f;right:541.25px;transform:scaleX(0.9850);transform-origin:100% 0;">30,612</span>
<span class="t" style="top:1589px;font:400 14.2px/0 'DejaVu Sans Condensed','Liberation Sans',sans-serif;color:#1b1b1f;right:421.35px;transform:scaleX(0.9850);transform-origin:100% 0;">33,781</span>
<span class="t" style="top:1589px;font:400 14.2px/0 'DejaVu Sans Condensed','Liberation Sans',sans-serif;color:#1b1b1f;right:301.67px;transform:scaleX(0.9850);transform-origin:100% 0;">49,190</span>
<span class="t" style="top:1589px;font:400 14.2px/0 'DejaVu Sans Condensed','Liberation Sans',sans-serif;color:#1b1b1f;right:181.43px;transform:scaleX(0.9850);transform-origin:100% 0;">51,877</span>
<span class="t" style="top:1589px;font:400 14.2px/0 'DejaVu Sans Condensed','Liberation Sans',sans-serif;color:#1b1b1f;right:61.25px;transform:scaleX(0.9850);transform-origin:100% 0;">62,762</span>
<span class="t" style="top:1610px;font:400 16.3px/0 'DejaVu Sans Condensed','Liberation Sans',sans-serif;color:#1b1b1f;left:138.83px;transform:scaleX(0.9528);transform-origin:0 0;">Interest Expense</span>
<span class="t" style="top:1609px;font:400 14.2px/0 'DejaVu Sans Condensed','Liberation Sans',sans-serif;color:#1b1b1f;right:1976.52px;transform:scaleX(0.9850);transform-origin:100% 0;">(1,000)</span>
<span class="t" style="top:1609px;font:400 14.2px/0 'DejaVu Sans Condensed','Liberation Sans',sans-serif;color:#1b1b1f;right:1856.52px;transform:scaleX(0.9850);transform-origin:100% 0;">(1,000)</span>
<span class="t" style="top:1609px;font:400 14.2px/0 'DejaVu Sans Condensed','Liberation Sans',sans-serif;color:#1b1b1f;right:1736.52px;transform:scaleX(0.9850);transform-origin:100% 0;">(1,667)</span>
<span class="t" style="top:1609px;font:400 14.2px/0 'DejaVu Sans Condensed','Liberation Sans',sans-serif;color:#1b1b1f;right:1616.52px;transform:scaleX(0.9850);transform-origin:100% 0;">(1,656)</span>
<span class="t" style="top:1609px;font:400 14.2px/0 'DejaVu Sans Condensed','Liberation Sans',sans-serif;color:#1b1b1f;right:1496.52px;transform:scaleX(0.9850);transform-origin:100% 0;">(1,644)</span>
<span class="t" style="top:1609px;font:400 14.2px/0 'DejaVu Sans Condensed','Liberation Sans',sans-serif;color:#1b1b1f;right:1376.52px;transform:scaleX(0.9850);transform-origin:100% 0;">(1,633)</span>
<span class="t" style="top:1609px;font:400 14.2px/0 'DejaVu Sans Condensed','Liberation Sans',sans-serif;color:#1b1b1f;right:1256.52px;transform:scaleX(0.9850);transform-origin:100% 0;">(1,622)</span>
<span class="t" style="top:1609px;font:400 14.2px/0 'DejaVu Sans Condensed','Liberation Sans',sans-serif;color:#1b1b1f;right:1136.52px;transform:scaleX(0.9850);transform-origin:100% 0;">(1,611)</span>
<span class="t" style="top:1609px;font:400 14.2px/0 'DejaVu Sans Condensed','Liberation Sans',sans-serif;color:#1b1b1f;right:1016.52px;transform:scaleX(0.9850);transform-origin:100% 0;">(1,600)</span>
<span class="t" style="top:1609px;font:400 14.2px/0 'DejaVu Sans Condensed','Liberation Sans',sans-serif;color:#1b1b1f;right:896.52px;transform:scaleX(0.9850);transform-origin:100% 0;">(1,589)</span>
<span class="t" style="top:1609px;font:400 14.2px/0 'DejaVu Sans Condensed','Liberation Sans',sans-serif;color:#1b1b1f;right:776.52px;transform:scaleX(0.9850);transform-origin:100% 0;">(1,578)</span>
<span class="t" style="top:1609px;font:400 14.2px/0 'DejaVu Sans Condensed','Liberation Sans',sans-serif;color:#1b1b1f;right:656.52px;transform:scaleX(0.9850);transform-origin:100% 0;">(1,567)</span>
<span class="t" style="top:1609px;font:400 14.2px/0 'DejaVu Sans Condensed','Liberation Sans',sans-serif;color:#1b1b1f;right:536.52px;transform:scaleX(0.9850);transform-origin:100% 0;">(1,556)</span>
<span class="t" style="top:1609px;font:400 14.2px/0 'DejaVu Sans Condensed','Liberation Sans',sans-serif;color:#1b1b1f;right:416.52px;transform:scaleX(0.9850);transform-origin:100% 0;">(1,534)</span>
<span class="t" style="top:1609px;font:400 14.2px/0 'DejaVu Sans Condensed','Liberation Sans',sans-serif;color:#1b1b1f;right:296.52px;transform:scaleX(0.9850);transform-origin:100% 0;">(1,512)</span>
<span class="t" style="top:1609px;font:400 14.2px/0 'DejaVu Sans Condensed','Liberation Sans',sans-serif;color:#1b1b1f;right:176.52px;transform:scaleX(0.9850);transform-origin:100% 0;">(1,491)</span>
<span class="t" style="top:1609px;font:400 14.2px/0 'DejaVu Sans Condensed','Liberation Sans',sans-serif;color:#1b1b1f;right:56.52px;transform:scaleX(0.9850);transform-origin:100% 0;">(1,469)</span>
<span class="t" style="top:1630px;font:400 16.3px/0 'DejaVu Sans Condensed','Liberation Sans',sans-serif;color:#1b1b1f;left:139.40px;transform:scaleX(0.9720);transform-origin:0 0;">Corporate Tax Expense</span>
<span class="t" style="top:1629px;font:400 14.2px/0 'DejaVu Sans Condensed','Liberation Sans',sans-serif;color:#1b1b1f;right:1982.09px;transform:scaleX(0.9850);transform-origin:100% 0;">-</span>
<span class="t" style="top:1629px;font:400 14.2px/0 'DejaVu Sans Condensed','Liberation Sans',sans-serif;color:#1b1b1f;right:1862.09px;transform:scaleX(0.9850);transform-origin:100% 0;">-</span>
<span class="t" style="top:1629px;font:400 14.2px/0 'DejaVu Sans Condensed','Liberation Sans',sans-serif;color:#1b1b1f;right:1742.09px;transform:scaleX(0.9850);transform-origin:100% 0;">-</span>
<span class="t" style="top:1629px;font:400 14.2px/0 'DejaVu Sans Condensed','Liberation Sans',sans-serif;color:#1b1b1f;right:1622.09px;transform:scaleX(0.9850);transform-origin:100% 0;">-</span>
<span class="t" style="top:1629px;font:400 14.2px/0 'DejaVu Sans Condensed','Liberation Sans',sans-serif;color:#1b1b1f;right:1502.09px;transform:scaleX(0.9850);transform-origin:100% 0;">-</span>
<span class="t" style="top:1629px;font:400 14.2px/0 'DejaVu Sans Condensed','Liberation Sans',sans-serif;color:#1b1b1f;right:1376.52px;transform:scaleX(0.9850);transform-origin:100% 0;">(724)</span>
<span class="t" style="top:1629px;font:400 14.2px/0 'DejaVu Sans Condensed','Liberation Sans',sans-serif;color:#1b1b1f;right:1256.52px;transform:scaleX(0.9850);transform-origin:100% 0;">(1,687)</span>
<span class="t" style="top:1629px;font:400 14.2px/0 'DejaVu Sans Condensed','Liberation Sans',sans-serif;color:#1b1b1f;right:1136.52px;transform:scaleX(0.9850);transform-origin:100% 0;">(2,650)</span>
<span class="t" style="top:1629px;font:400 14.2px/0 'DejaVu Sans Condensed','Liberation Sans',sans-serif;color:#1b1b1f;right:1016.52px;transform:scaleX(0.9850);transform-origin:100% 0;">(3,613)</span>
<span class="t" style="top:1629px;font:400 14.2px/0 'DejaVu Sans Condensed','Liberation Sans',sans-serif;color:#1b1b1f;right:896.52px;transform:scaleX(0.9850);transform-origin:100% 0;">(3,614)</span>
<span class="t" style="top:1629px;font:400 14.2px/0 'DejaVu Sans Condensed','Liberation Sans',sans-serif;color:#1b1b1f;right:776.52px;transform:scaleX(0.9850);transform-origin:100% 0;">(3,616)</span>
<span class="t" style="top:1629px;font:400 14.2px/0 'DejaVu Sans Condensed','Liberation Sans',sans-serif;color:#1b1b1f;right:656.52px;transform:scaleX(0.9850);transform-origin:100% 0;">(3,617)</span>
<span class="t" style="top:1629px;font:400 14.2px/0 'DejaVu Sans Condensed','Liberation Sans',sans-serif;color:#1b1b1f;right:536.52px;transform:scaleX(0.9850);transform-origin:100% 0;">(8,908)</span>
<span class="t" style="top:1629px;font:400 14.2px/0 'DejaVu Sans Condensed','Liberation Sans',sans-serif;color:#1b1b1f;right:416.52px;transform:scaleX(0.9850);transform-origin:100% 0;">(10,895)</span>
<span class="t" style="top:1629px;font:400 14.2px/0 'DejaVu Sans Condensed','Liberation Sans',sans-serif;color:#1b1b1f;right:296.52px;transform:scaleX(0.9850);transform-origin:100% 0;">(12,882)</span>
<span class="t" style="top:1629px;font:400 14.2px/0 'DejaVu Sans Condensed','Liberation Sans',sans-serif;color:#1b1b1f;right:176.52px;transform:scaleX(0.9850);transform-origin:100% 0;">(14,869)</span>
<span class="t" style="top:1629px;font:400 14.2px/0 'DejaVu Sans Condensed','Liberation Sans',sans-serif;color:#1b1b1f;right:56.52px;transform:scaleX(0.9850);transform-origin:100% 0;">(16,857)</span>
<span class="t" style="top:1650px;font:700 16.3px/0 'DejaVu Serif Condensed','DejaVu Serif','Liberation Serif',serif;color:#fff;left:146.46px;transform:scaleX(0.9920);transform-origin:0 0;">Net Increase/(Decrease) in Cash Held</span>
<span class="t" style="top:1650px;font:700 16.3px/0 'DejaVu Serif Condensed','DejaVu Serif','Liberation Serif',serif;color:#fff;right:1983.34px;">856,681</span>
<span class="t" style="top:1650px;font:700 16.3px/0 'DejaVu Serif Condensed','DejaVu Serif','Liberation Serif',serif;color:#fff;right:1856.81px;">(64,486)</span>
<span class="t" style="top:1650px;font:700 16.3px/0 'DejaVu Serif Condensed','DejaVu Serif','Liberation Serif',serif;color:#fff;right:1744.02px;">44,108</span>
<span class="t" style="top:1650px;font:700 16.3px/0 'DejaVu Serif Condensed','DejaVu Serif','Liberation Serif',serif;color:#fff;right:1616.81px;">(34,238)</span>
<span class="t" style="top:1650px;font:700 16.3px/0 'DejaVu Serif Condensed','DejaVu Serif','Liberation Serif',serif;color:#fff;right:1496.81px;">(14,203)</span>
<span class="t" style="top:1650px;font:700 16.3px/0 'DejaVu Serif Condensed','DejaVu Serif','Liberation Serif',serif;color:#fff;right:1376.81px;">(3,664)</span>
<span class="t" style="top:1650px;font:700 16.3px/0 'DejaVu Serif Condensed','DejaVu Serif','Liberation Serif',serif;color:#fff;right:1264.02px;">7,426</span>
<span class="t" style="top:1650px;font:700 16.3px/0 'DejaVu Serif Condensed','DejaVu Serif','Liberation Serif',serif;color:#fff;right:1143.59px;">14,417</span>
<span class="t" style="top:1650px;font:700 16.3px/0 'DejaVu Serif Condensed','DejaVu Serif','Liberation Serif',serif;color:#fff;right:1024.20px;">20,894</span>
<span class="t" style="top:1650px;font:700 16.3px/0 'DejaVu Serif Condensed','DejaVu Serif','Liberation Serif',serif;color:#fff;right:903.49px;">27,802</span>
<span class="t" style="top:1650px;font:700 16.3px/0 'DejaVu Serif Condensed','DejaVu Serif','Liberation Serif',serif;color:#fff;right:783.49px;">26,052</span>
<span class="t" style="top:1650px;font:700 16.3px/0 'DejaVu Serif Condensed','DejaVu Serif','Liberation Serif',serif;color:#fff;right:663.34px;">27,821</span>
<span class="t" style="top:1650px;font:700 16.3px/0 'DejaVu Serif Condensed','DejaVu Serif','Liberation Serif',serif;color:#fff;right:543.88px;">20,149</span>
<span class="t" style="top:1650px;font:700 16.3px/0 'DejaVu Serif Condensed','DejaVu Serif','Liberation Serif',serif;color:#fff;right:423.87px;">21,353</span>
<span class="t" style="top:1650px;font:700 16.3px/0 'DejaVu Serif Condensed','DejaVu Serif','Liberation Serif',serif;color:#fff;right:304.02px;">34,796</span>
<span class="t" style="top:1650px;font:700 16.3px/0 'DejaVu Serif Condensed','DejaVu Serif','Liberation Serif',serif;color:#fff;right:183.59px;">35,517</span>
<span class="t" style="top:1650px;font:700 16.3px/0 'DejaVu Serif Condensed','DejaVu Serif','Liberation Serif',serif;color:#fff;right:63.59px;">44,437</span>
<span class="t" style="top:1415px;font:700 16.3px/0 'DejaVu Serif Condensed','DejaVu Serif','Liberation Serif',serif;color:#fff;right:2107.21px;">-</span>
<div style="left:11px;top:1670px;width:2880px;height:48px;background:#0a0a0a;"></div>
<div style="left:11px;top:1717.5px;width:2880px;height:1.2px;background:#3a3a3a;"></div>
<div style="left:11px;top:1718.7px;width:2880px;height:32.3px;background:#141414;"></div>
<svg style="left:45px;top:1684px" width="12" height="18" viewBox="0 0 12 18"><path d="M8.800 1.800L1.800 8.700L8.800 15.600" fill="none" stroke="#9a9a9a" stroke-width="1.900" stroke-linecap="square" stroke-linejoin="miter"/></svg>
<svg style="left:94px;top:1684px" width="12" height="18" viewBox="0 0 12 18"><path d="M2.200 1.800L9.200 8.700L2.200 15.600" fill="none" stroke="#dcdcdc" stroke-width="1.900" stroke-linecap="square" stroke-linejoin="miter"/></svg>
<span class="t" style="top:1696px;font:400 21.8px/0 'Liberation Sans','DejaVu Sans',sans-serif;color:#fff;left:189.44px;transform:scaleX(0.9608);transform-origin:0 0;will-change:transform;">Contents</span>
<div style="left:299px;top:1676px;width:128px;height:36px;background:#ffec6b;border-radius:7px"></div>
<span class="t" style="top:1696px;font:400 21.8px/0 'Liberation Sans','DejaVu Sans',sans-serif;color:#16191c;left:311.77px;transform:scaleX(0.9668);transform-origin:0 0;will-change:transform;">Dashboard</span>
<div style="left:440px;top:1676px;width:106px;height:36px;background:#ffec6b;border-radius:7px"></div>
<span class="t" style="top:1696px;font:400 21.8px/0 'Liberation Sans','DejaVu Sans',sans-serif;color:#16191c;left:453.36px;transform:scaleX(0.9172);transform-origin:0 0;will-change:transform;">Revenue</span>
<div style="left:559px;top:1676px;width:158px;height:36px;background:#ffec6b;border-radius:7px"></div>
<span class="t" style="top:1696px;font:400 21.8px/0 'Liberation Sans','DejaVu Sans',sans-serif;color:#16191c;left:571.52px;transform:scaleX(0.8843);transform-origin:0 0;will-change:transform;">COGS &amp; OPEX</span>
<div style="left:730px;top:1676px;width:89px;height:36px;background:#ffec6b;border-radius:7px"></div>
<span class="t" style="top:1696px;font:400 21.8px/0 'Liberation Sans','DejaVu Sans',sans-serif;color:#16191c;left:742.07px;transform:scaleX(0.9656);transform-origin:0 0;will-change:transform;">Payroll</span>
<div style="left:832px;top:1676px;width:87px;height:36px;background:#ffec6b;border-radius:7px"></div>
<span class="t" style="top:1696px;font:400 21.8px/0 'Liberation Sans','DejaVu Sans',sans-serif;color:#16191c;left:844.57px;transform:scaleX(0.8406);transform-origin:0 0;will-change:transform;">CAPEX</span>
<div style="left:932px;top:1676px;width:113px;height:36px;background:#ffec6b;border-radius:7px"></div>
<span class="t" style="top:1696px;font:400 21.8px/0 'Liberation Sans','DejaVu Sans',sans-serif;color:#16191c;left:944.45px;transform:scaleX(0.9498);transform-origin:0 0;will-change:transform;">CapTable</span>
<div style="left:1058px;top:1676px;width:90px;height:36px;background:#ffec6b;border-radius:7px"></div>
<span class="t" style="top:1696px;font:400 21.8px/0 'Liberation Sans','DejaVu Sans',sans-serif;color:#16191c;left:1070.43px;transform:scaleX(0.9650);transform-origin:0 0;will-change:transform;">Capital</span>
<div style="left:1161px;top:1676px;width:42px;height:36px;background:#49b0e6;border-radius:7px"></div>
<span class="t" style="top:1696px;font:400 21.8px/0 'Liberation Sans','DejaVu Sans',sans-serif;color:#10222e;left:1173.28px;transform:scaleX(0.8532);transform-origin:0 0;will-change:transform;">IS</span>
<div style="left:1215.5px;top:1670px;width:49.0px;height:42px;background:linear-gradient(#ffffff 20%,#d3e9f8 100%);border-radius:0 0 7px 7px"></div>
<span class="t" style="top:1690px;font:400 21.8px/0 'Liberation Sans','DejaVu Sans',sans-serif;color:#1a1a1a;left:1227.88px;transform:scaleX(0.8310);transform-origin:0 0;will-change:transform;-webkit-text-stroke:0.4px #1a1a1a;">CF</span>
<div style="left:1228px;top:1705px;width:24px;height:3px;background:#1e8449;"></div>
<div style="left:1277px;top:1676px;width:48px;height:36px;background:#49b0e6;border-radius:7px"></div>
<span class="t" style="top:1696px;font:400 21.8px/0 'Liberation Sans','DejaVu Sans',sans-serif;color:#10222e;left:1289.89px;transform:scaleX(0.7874);transform-origin:0 0;will-change:transform;">BS</span>
<div style="left:1338px;top:1676px;width:115px;height:36px;background:#49b0e6;border-radius:7px"></div>
<span class="t" style="top:1696px;font:400 21.8px/0 'Liberation Sans','DejaVu Sans',sans-serif;color:#10222e;left:1350.90px;transform:scaleX(0.9091);transform-origin:0 0;will-change:transform;">Scenarios</span>
<div style="left:1466px;top:1676px;width:115px;height:36px;background:#49b0e6;border-radius:7px"></div>
<span class="t" style="top:1696px;font:400 21.8px/0 'Liberation Sans','DejaVu Sans',sans-serif;color:#10222e;left:1479.41px;transform:scaleX(0.9913);transform-origin:0 0;will-change:transform;">Valuation</span>
<div style="left:1594px;top:1676px;width:114px;height:36px;background:#49b0e6;border-radius:7px"></div>
<span class="t" style="top:1696px;font:400 21.8px/0 'Liberation Sans','DejaVu Sans',sans-serif;color:#10222e;left:1607.87px;transform:scaleX(0.9347);transform-origin:0 0;will-change:transform;">Summary</span>
<div style="left:1721px;top:1676px;width:48px;height:36px;background:#49b0e6;border-radius:7px"></div>
<span class="t" style="top:1696px;font:400 21.8px/0 'Liberation Sans','DejaVu Sans',sans-serif;color:#10222e;left:1733.57px;transform:scaleX(0.7969);transform-origin:0 0;will-change:transform;">BE</span>
<div style="left:1782px;top:1676px;width:72px;height:36px;background:#49b0e6;border-radius:7px"></div>
<span class="t" style="top:1696px;font:400 21.8px/0 'Liberation Sans','DejaVu Sans',sans-serif;color:#10222e;left:1794.75px;transform:scaleX(0.8675);transform-origin:0 0;will-change:transform;">ROIC</span>
<div style="left:1867px;top:1676px;width:85px;height:36px;background:#49b0e6;border-radius:7px"></div>
<span class="t" style="top:1696px;font:400 21.8px/0 'Liberation Sans','DejaVu Sans',sans-serif;color:#10222e;left:1879.48px;transform:scaleX(0.9229);transform-origin:0 0;will-change:transform;">Charts</span>
<div style="left:1965px;top:1676px;width:64px;height:36px;background:#49b0e6;border-radius:7px"></div>
<span class="t" style="top:1696px;font:400 21.8px/0 'Liberation Sans','DejaVu Sans',sans-serif;color:#10222e;left:1977.50px;transform:scaleX(0.8399);transform-origin:0 0;will-change:transform;">KPIs</span>
<div style="left:2042px;top:1676px;width:30px;height:36px;background:#49b0e6;border-radius:7px 0 0 7px"></div>
<div style="left:2042px;top:1670px;width:30px;height:48px;overflow:hidden"><span class="t" style="left:11.7px;top:26px;font:21.8px/0 'Liberation Sans',sans-serif;color:#10222e;transform:scaleX(.94);transform-origin:0 0">Sc</span></div>
<div style="left:1208.5px;top:1670px;width:7px;height:7px;background:#fff;"></div>
<div style="left:1201.5px;top:1670px;width:14px;height:14px;background:#0a0a0a;border-top-right-radius:7px"></div>
<div style="left:1264.5px;top:1670px;width:7px;height:7px;background:#fff;"></div>
<div style="left:1264.5px;top:1670px;width:14px;height:14px;background:#0a0a0a;border-top-left-radius:7px"></div>
<div style="left:291.9px;top:1680px;width:1.2px;height:28px;background:#5a5a5a;"></div>
<div style="left:432.9px;top:1680px;width:1.2px;height:28px;background:#5a5a5a;"></div>
<div style="left:551.9px;top:1680px;width:1.2px;height:28px;background:#5a5a5a;"></div>
<div style="left:722.9px;top:1680px;width:1.2px;height:28px;background:#5a5a5a;"></div>
<div style="left:824.9px;top:1680px;width:1.2px;height:28px;background:#5a5a5a;"></div>
<div style="left:924.9px;top:1680px;width:1.2px;height:28px;background:#5a5a5a;"></div>
<div style="left:1050.9px;top:1680px;width:1.2px;height:28px;background:#5a5a5a;"></div>
<div style="left:1153.9px;top:1680px;width:1.2px;height:28px;background:#5a5a5a;"></div>
<div style="left:1208.9px;top:1680px;width:1.2px;height:28px;background:#5a5a5a;"></div>
<div style="left:1269.9px;top:1680px;width:1.2px;height:28px;background:#5a5a5a;"></div>
<div style="left:1330.9px;top:1680px;width:1.2px;height:28px;background:#5a5a5a;"></div>
<div style="left:1458.9px;top:1680px;width:1.2px;height:28px;background:#5a5a5a;"></div>
<div style="left:1586.9px;top:1680px;width:1.2px;height:28px;background:#5a5a5a;"></div>
<div style="left:1713.9px;top:1680px;width:1.2px;height:28px;background:#5a5a5a;"></div>
<div style="left:1774.9px;top:1680px;width:1.2px;height:28px;background:#5a5a5a;"></div>
<div style="left:1859.9px;top:1680px;width:1.2px;height:28px;background:#5a5a5a;"></div>
<div style="left:1957.9px;top:1680px;width:1.2px;height:28px;background:#5a5a5a;"></div>
<div style="left:2034.9px;top:1680px;width:1.2px;height:28px;background:#5a5a5a;"></div>
<div style="left:2087.0px;top:1690px;width:5px;height:5px;border-radius:50%;background:#e0e0e0"></div>
<div style="left:2093.2px;top:1690px;width:5px;height:5px;border-radius:50%;background:#e0e0e0"></div>
<div style="left:2099.4px;top:1690px;width:5px;height:5px;border-radius:50%;background:#e0e0e0"></div>
<div style="left:2135px;top:1692.2px;width:17px;height:1.7px;background:#e6e6e6;"></div>
<div style="left:2142.7px;top:1684.5px;width:1.7px;height:17px;background:#e6e6e6;"></div>
<div style="left:2190.5px;top:1687.5px;width:3px;height:3px;background:#e0e0e0;"></div>
<div style="left:2190.5px;top:1693.2px;width:3px;height:3px;background:#e0e0e0;"></div>
<div style="left:2190.5px;top:1698.9px;width:3px;height:3px;background:#e0e0e0;"></div>
<div style="left:2216px;top:1680px;width:645px;height:26.5px;background:#151515;border-radius:13px"></div>
<svg style="left:2223px;top:1686px" width="12" height="15" viewBox="0 0 12 15"><path d="M10.500 1.500V13.500L1.500 7.500Z" fill="#9e9e9e" stroke="#9e9e9e" stroke-width="1.500" stroke-linejoin="round"/></svg>
<div style="left:2242px;top:1687px;width:158px;height:12px;background:#9e9e9e;border-radius:6px"></div>
<svg style="left:2842px;top:1686px" width="12" height="15" viewBox="0 0 12 15"><path d="M1.500 1.500V13.500L10.500 7.500Z" fill="#9e9e9e" stroke="#9e9e9e" stroke-width="1.500" stroke-linejoin="round"/></svg>
<div style="left:2863px;top:278.5px;width:25.5px;height:1393px;background:#141414;border-radius:13px"></div>
<svg style="left:2868px;top:285px" width="16" height="12" viewBox="0 0 16 12"><path d="M2 10.500H14L8 2Z" fill="#9e9e9e" stroke="#9e9e9e" stroke-width="1.500" stroke-linejoin="round"/></svg>
<div style="left:2870px;top:304px;width:12px;height:1014.5px;background:#9b9b9b;border-radius:6px"></div>
<svg style="left:2868px;top:1653px" width="16" height="12" viewBox="0 0 16 12"><path d="M2 1.500H14L8 10Z" fill="#9e9e9e" stroke="#9e9e9e" stroke-width="1.500" stroke-linejoin="round"/></svg>
<span class="t" style="top:1736px;font:400 14.7px/0 'Liberation Sans','DejaVu Sans',sans-serif;color:#e8e8e8;left:25.74px;transform:scaleX(1.0431);transform-origin:0 0;will-change:transform;">Ready</span>
<svg style="left:98px;top:1725px" width="24" height="22" viewBox="0 0 24 22"><rect x="1.500" y="1.500" width="20" height="17" fill="none" stroke="#e0e0e0" stroke-width="1.500"/><path d="M1.500 5.500H21.500M4.500 9.500H11M4.500 13H9" stroke="#e0e0e0" stroke-width="1.400"/><circle cx="15.500" cy="14.500" r="5.600" fill="#141414" stroke="#e0e0e0" stroke-width="1.500"/><circle cx="15.500" cy="14.500" r="2.600" fill="#e0e0e0"/></svg>
<svg style="left:145px;top:1723px" width="24" height="25" viewBox="0 0 24 25"><circle cx="10.300" cy="4.600" r="2.400" fill="none" stroke="#f0f0f0" stroke-width="1.700"/><path d="M2 6.500C2.500 8.500 6 9.500 7.500 10.500V14.500L4.500 22M18.500 6.500C18 8.500 14.500 9.500 13 10.500V13M10.300 15L11.800 17.500" fill="none" stroke="#f0f0f0" stroke-width="1.800" stroke-linecap="round" stroke-linejoin="round"/><path d="M13.500 14.500L22 22.500M22 14.500L13.500 22.500" stroke="#f0f0f0" stroke-width="1.700" stroke-linecap="round"/></svg>
<span class="t" style="top:1736px;font:700 14.7px/0 'Liberation Sans','DejaVu Sans',sans-serif;color:#fff;left:172.61px;transform:scaleX(1.0765);transform-origin:0 0;will-change:transform;">Accessibility: Investigate</span>
<div style="left:2445px;top:1719px;width:60px;height:32px;background:#262626;"></div>
<svg style="left:2463px;top:1724px" width="22" height="21" viewBox="0 0 22 21"><rect x="1.200" y="1.200" width="19.600" height="18.600" fill="none" stroke="#f0f0f0" stroke-width="1.700"/><path d="M7.700 1.200V19.800M14.300 1.200V19.800M1.200 7.400H20.800M1.200 13.600H20.800" stroke="#f0f0f0" stroke-width="1.600"/></svg>
<svg style="left:2523px;top:1724px" width="24" height="21" viewBox="0 0 24 21"><rect x="1.200" y="1.200" width="21" height="18.600" fill="none" stroke="#f0f0f0" stroke-width="1.700"/><rect x="6.500" y="5" width="10.500" height="11" fill="none" stroke="#f0f0f0" stroke-width="1.500"/><path d="M9 8.500H14.500M9 12H14.500" stroke="#f0f0f0" stroke-width="1.300"/></svg>
<svg style="left:2583px;top:1724px" width="24" height="21" viewBox="0 0 24 21"><rect x="1.200" y="1.200" width="21" height="18.600" fill="none" stroke="#f0f0f0" stroke-width="1.700"/><path d="M1.200 12H13.500V1.200M7.500 1.200V12" fill="none" stroke="#f0f0f0" stroke-width="1.600"/></svg>
<div style="left:2633px;top:1734px;width:12px;height:1.5px;background:#d0d0d0;"></div>
<div style="left:2653px;top:1734px;width:148px;height:1.6px;background:#a8a8a8;"></div>
<div style="left:2723px;top:1726px;width:8px;height:17px;background:#b4b4b4;border-radius:1px"></div>
<div style="left:2809px;top:1734px;width:12px;height:1.5px;background:#d0d0d0;"></div>
<div style="left:2814.2px;top:1728.7px;width:1.5px;height:12px;background:#d0d0d0;"></div>
<span class="t" style="top:1736px;font:400 14.7px/0 'Liberation Sans','DejaVu Sans',sans-serif;color:#e8e8e8;left:2838.78px;transform:scaleX(1.0857);transform-origin:0 0;will-change:transform;">100%</span>
</body></html>
